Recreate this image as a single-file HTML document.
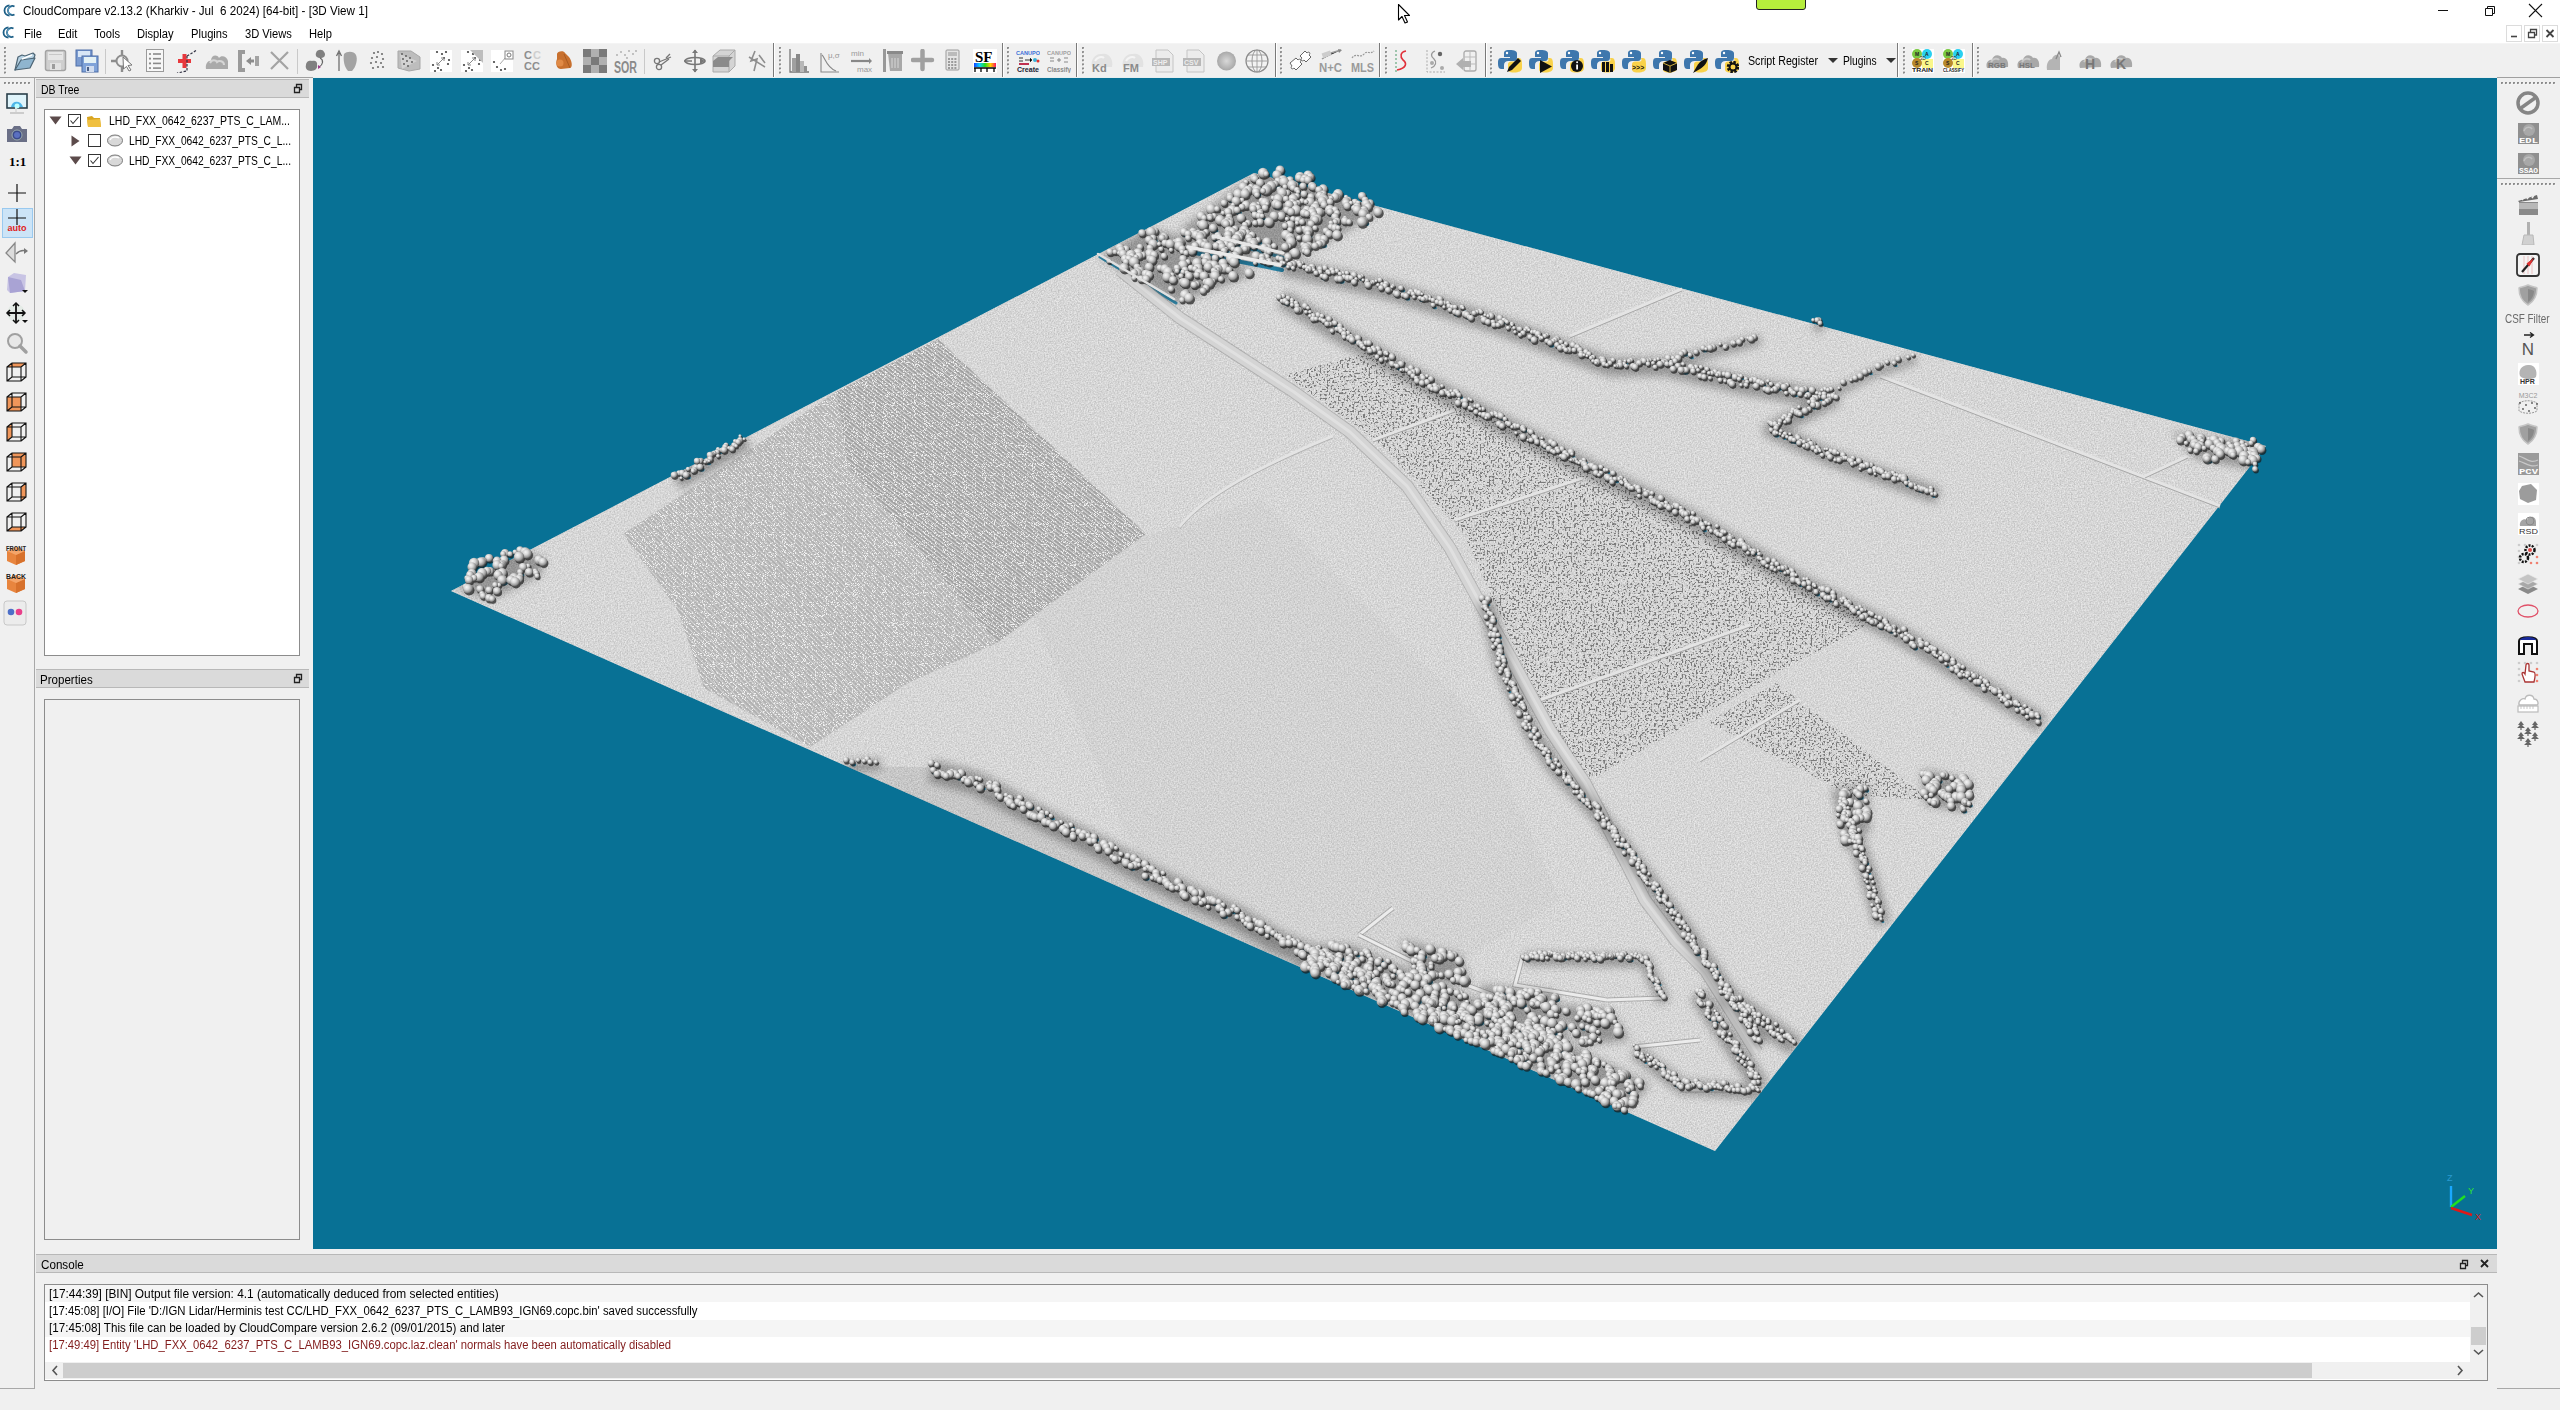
<!DOCTYPE html><html><head><meta charset="utf-8"><style>
*{box-sizing:border-box;margin:0;padding:0}
html,body{width:2560px;height:1410px;overflow:hidden;background:#f0f0f0;font-family:"Liberation Sans",sans-serif;font-size:12px;color:#000}
.a{position:absolute}
.t{position:absolute;white-space:pre;font-family:"Liberation Sans",sans-serif;font-size:12px;line-height:14px;transform-origin:0 0}
#title{left:0;top:0;width:2560px;height:22px;background:#fff}
#menu{left:0;top:22px;width:2560px;height:21px;background:#fff}
#tb{left:0;top:43px;width:2560px;height:35px;background:#f0f0f0;border-top:1px solid #f4f4f4}
.hl{position:absolute;height:1px}
.vl{position:absolute;width:1px}
.dock{position:absolute;background:#dadada;border-top:1px solid #b8b8b8;border-bottom:1px solid #b8b8b8}
.sep{position:absolute;width:1px;height:26px;background:#d7d7d7;top:48px}
.hdl{position:absolute;width:2px;height:26px;top:48px;background-image:linear-gradient(#9a9a9a 50%,transparent 50%);background-size:2px 4px}
.ic{position:absolute}
</style></head><body><div id="title" class="a"></div><div class="t" style="left:23px;top:4px;font-size:12px;color:#000;transform:scaleX(0.969);">CloudCompare v2.13.2 (Kharkiv - Jul  6 2024) [64-bit] - [3D View 1]</div><div id="menu" class="a"></div><div class="t" style="left:24px;top:27px;font-size:12px;color:#000;transform:scaleX(0.93);">File</div><div class="t" style="left:58px;top:27px;font-size:12px;color:#000;transform:scaleX(0.93);">Edit</div><div class="t" style="left:94px;top:27px;font-size:12px;color:#000;transform:scaleX(0.93);">Tools</div><div class="t" style="left:137px;top:27px;font-size:12px;color:#000;transform:scaleX(0.93);">Display</div><div class="t" style="left:191px;top:27px;font-size:12px;color:#000;transform:scaleX(0.93);">Plugins</div><div class="t" style="left:245px;top:27px;font-size:12px;color:#000;transform:scaleX(0.93);">3D Views</div><div class="t" style="left:309px;top:27px;font-size:12px;color:#000;transform:scaleX(0.93);">Help</div><div id="tb" class="a"></div><div class="hl" style="left:0;top:77px;width:2560px;background:#a0a0a0"></div><div class="hl" style="left:313px;top:77px;width:2184px;background:#e6eef0"></div><svg class="ic" style="left:4px;top:47px" width="3" height="30" viewBox="0 0 3 30"><rect x="0" y="0.0" width="2" height="2" fill="#8c8c8c"/><rect x="1.5" y="1.5" width="1" height="1" fill="#fff"/><rect x="0" y="4.1" width="2" height="2" fill="#8c8c8c"/><rect x="1.5" y="5.6" width="1" height="1" fill="#fff"/><rect x="0" y="8.2" width="2" height="2" fill="#8c8c8c"/><rect x="1.5" y="9.7" width="1" height="1" fill="#fff"/><rect x="0" y="12.3" width="2" height="2" fill="#8c8c8c"/><rect x="1.5" y="13.8" width="1" height="1" fill="#fff"/><rect x="0" y="16.4" width="2" height="2" fill="#8c8c8c"/><rect x="1.5" y="17.9" width="1" height="1" fill="#fff"/><rect x="0" y="20.5" width="2" height="2" fill="#8c8c8c"/><rect x="1.5" y="22.0" width="1" height="1" fill="#fff"/><rect x="0" y="24.6" width="2" height="2" fill="#8c8c8c"/><rect x="1.5" y="26.1" width="1" height="1" fill="#fff"/></svg><svg class="ic" style="left:13px;top:49px" width="24" height="24" viewBox="0 0 24 24"><path d="M2 21 L5 8 L9 6 L12 7 L20 4 L22 6 L21 9 Z" fill="#b8d3e4" stroke="#4d6575" stroke-width="1.2" stroke-linejoin="round"/><path d="M2 21 L8 11 L22 9 L17 19 Z" fill="#8fb5cf" stroke="#4d6575" stroke-width="1.2" stroke-linejoin="round"/><path d="M9 10 L19 6" stroke="#fff" stroke-width="1.5"/></svg><svg class="ic" style="left:44px;top:49px" width="24" height="24" viewBox="0 0 24 24"><rect x="1.5" y="1.5" width="20" height="20" rx="2" fill="#cfcfcf" stroke="#a3a3a3" stroke-width="1.5"/><rect x="4" y="3" width="15" height="8" fill="#e6e6e6"/><rect x="5" y="5" width="13" height="1" fill="#c8c8c8"/><rect x="6" y="14" width="11" height="7" fill="#e2e2e2"/><rect x="8" y="15" width="3" height="5" fill="#9c9c9c"/></svg><svg class="ic" style="left:75px;top:49px" width="24" height="24" viewBox="0 0 24 24"><rect x="1" y="1" width="16" height="16" fill="#7b9bd0" stroke="#4f6fa8"/><rect x="3" y="2" width="12" height="6" fill="#d8e6f6"/><rect x="7" y="7" width="16" height="16" fill="#7fa2d8" stroke="#4c6ca6"/><rect x="9" y="8" width="12" height="6" fill="#e4f1f5"/><rect x="11" y="17" width="8" height="6" fill="#d0dcef"/><rect x="12" y="18" width="2" height="4" fill="#4b5f86"/></svg><svg class="ic" style="left:111px;top:49px" width="24" height="24" viewBox="0 0 24 24"><circle cx="11" cy="12" r="5.5" fill="none" stroke="#8d8d8d" stroke-width="2"/><path d="M11 1 V6 M11 18 V23 M0 12 H5" stroke="#8d8d8d" stroke-width="2.4"/><path d="M12 8 L21 16 L17 16.5 L20 21 L18 22 L15.5 17.5 L12.5 20 Z" fill="#fff" stroke="#777" stroke-width="1"/></svg><svg class="ic" style="left:146px;top:49px" width="24" height="24" viewBox="0 0 24 24"><rect x="0.5" y="0.5" width="17" height="22" fill="#f7f7f7" stroke="#9a9a9a"/><circle cx="4" cy="5.0" r="1.1" fill="#8a8a8a"/><rect x="7" y="4.2" width="8" height="1.6" fill="#8a8a8a"/><circle cx="4" cy="9.7" r="1.1" fill="#8a8a8a"/><rect x="7" y="8.9" width="8" height="1.6" fill="#8a8a8a"/><circle cx="4" cy="14.4" r="1.1" fill="#8a8a8a"/><rect x="7" y="13.6" width="8" height="1.6" fill="#8a8a8a"/><circle cx="4" cy="19.1" r="1.1" fill="#8a8a8a"/><rect x="7" y="18.3" width="8" height="1.6" fill="#8a8a8a"/></svg><svg class="ic" style="left:174px;top:49px" width="24" height="24" viewBox="0 0 24 24"><path d="M4 12 H17 M10.5 5 V19" stroke="#e8383d" stroke-width="4"/><path d="M13 7 L23 1 M13 7 L13 22 L3 24" stroke="#334" stroke-width="1.2" stroke-dasharray="2.5 1.5" fill="none"/></svg><svg class="ic" style="left:205px;top:49px" width="24" height="24" viewBox="0 0 24 24"><path d="M1 20 C0 14 4 11 6 12 C6 6 12 5 14 9 C16 6 22 7 23 12 L23 20 Z" fill="#aaaaaa"/><path d="M5 14 C7 10 11 11 12 13 C14 11 19 12 19 16" fill="none" stroke="#d6d6d6" stroke-width="2"/></svg><svg class="ic" style="left:237px;top:49px" width="24" height="24" viewBox="0 0 24 24"><path d="M1 1 H8 V5 H5 V19 H8 V23 H1 Z" fill="#9a9a9a"/><path d="M9 12 L14 8 V10.5 H17 V13.5 H14 V16 Z" fill="#8c8c8c"/><rect x="18" y="7" width="4" height="10" fill="#a3a3a3"/></svg><svg class="ic" style="left:268px;top:49px" width="24" height="24" viewBox="0 0 24 24"><path d="M3 3 L20 20 M20 3 L3 20" stroke="#a3a3a3" stroke-width="2.2"/></svg><svg class="ic" style="left:305px;top:49px" width="24" height="24" viewBox="0 0 24 24"><path d="M11 4 C12 0 18 0 19 3 C21 5 20 9 16 9 C12 9 10 7 11 4 Z" fill="#808080"/><path d="M1 16 C1 12 5 11 7 12 C9 11 13 12 12 16 C13 19 10 22 6 22 C2 22 0 19 1 16 Z" fill="#808080"/><path d="M15 9 C19 11 18 16 14 18" fill="none" stroke="#666" stroke-width="1.2"/><path d="M13 16 L16 18 L13 20 Z" fill="#9b3b8a"/></svg><svg class="ic" style="left:335px;top:49px" width="24" height="24" viewBox="0 0 24 24"><path d="M4 22 V4 M1.5 7 L4 2 L6.5 7" stroke="#707070" stroke-width="1.3" fill="none"/><path d="M9 5 C12 2 19 2 21 6 C23 10 21 18 17 22 L13 22 C9 18 8 10 9 5 Z" fill="#a3a3a3"/></svg><svg class="ic" style="left:368px;top:50px" width="24" height="24" viewBox="0 0 24 24"><circle cx="6" cy="3" r="1.1" fill="#707070"/><circle cx="10" cy="2" r="1.1" fill="#707070"/><circle cx="14" cy="4" r="1.1" fill="#707070"/><circle cx="4" cy="8" r="1.1" fill="#707070"/><circle cx="9" cy="7" r="1.1" fill="#707070"/><circle cx="15" cy="9" r="1.1" fill="#707070"/><circle cx="3" cy="13" r="1.1" fill="#707070"/><circle cx="8" cy="12" r="1.1" fill="#707070"/><circle cx="13" cy="13" r="1.1" fill="#707070"/><circle cx="5" cy="18" r="1.1" fill="#707070"/><circle cx="10" cy="17" r="1.1" fill="#707070"/><circle cx="15" cy="17" r="1.1" fill="#707070"/></svg><svg class="ic" style="left:397px;top:49px" width="24" height="24" viewBox="0 0 24 24"><path d="M1 2 L14 2 L23 8 L23 20 L12 22 L1 19 Z" fill="#bdbdbd" stroke="#a7a7a7"/><path d="M3 5 L20 12 L5 20 Z" fill="#e0e0e0" opacity="0.6"/><circle cx="5" cy="5" r="0.9" fill="#555"/><circle cx="9" cy="7" r="0.9" fill="#555"/><circle cx="13" cy="9" r="0.9" fill="#555"/><circle cx="6" cy="10" r="0.9" fill="#555"/><circle cx="10" cy="12" r="0.9" fill="#555"/><circle cx="15" cy="13" r="0.9" fill="#555"/><circle cx="7" cy="15" r="0.9" fill="#555"/><circle cx="11" cy="17" r="0.9" fill="#555"/></svg><svg class="ic" style="left:430px;top:50px" width="24" height="24" viewBox="0 0 24 24"><rect x="0" y="0" width="22" height="22" fill="#fff"/><circle cx="7" cy="2" r="1.1" fill="#444"/><circle cx="12" cy="4" r="1.1" fill="#444"/><circle cx="16" cy="2" r="1.1" fill="#444"/><circle cx="14" cy="8" r="1.1" fill="#444"/><circle cx="19" cy="10" r="1.1" fill="#444"/><circle cx="3" cy="15" r="1.1" fill="#444"/><circle cx="8" cy="18" r="1.1" fill="#444"/><circle cx="11" cy="20" r="1.1" fill="#444"/><circle cx="5" cy="21" r="1.1" fill="#444"/><circle cx="18" cy="14" r="1.1" fill="#444"/><path d="M7 15 L14 8 M7 15 L7 12 M7 15 L10 15 M14 8 L11 8 M14 8 L14 11" stroke="#888" stroke-width="1"/></svg><svg class="ic" style="left:461px;top:50px" width="24" height="24" viewBox="0 0 24 24"><rect x="0" y="0" width="22" height="22" fill="#fff"/><circle cx="7" cy="2" r="1.1" fill="#444"/><circle cx="12" cy="4" r="1.1" fill="#444"/><circle cx="16" cy="2" r="1.1" fill="#444"/><circle cx="14" cy="8" r="1.1" fill="#444"/><circle cx="19" cy="10" r="1.1" fill="#444"/><circle cx="3" cy="15" r="1.1" fill="#444"/><circle cx="8" cy="18" r="1.1" fill="#444"/><circle cx="11" cy="20" r="1.1" fill="#444"/><circle cx="5" cy="21" r="1.1" fill="#444"/><circle cx="18" cy="14" r="1.1" fill="#444"/><path d="M7 15 L14 8 M7 15 L7 12 M7 15 L10 15 M14 8 L11 8 M14 8 L14 11" stroke="#888" stroke-width="1"/><path d="M9 0 L22 0 L22 13 Z" fill="#bdbdbd"/></svg><svg class="ic" style="left:491px;top:50px" width="24" height="24" viewBox="0 0 24 24"><rect x="0" y="0" width="22" height="22" fill="#fff"/><circle cx="3" cy="12" r="1.1" fill="#444"/><circle cx="6" cy="17" r="1.1" fill="#444"/><circle cx="10" cy="20" r="1.1" fill="#444"/><circle cx="14" cy="19" r="1.1" fill="#444"/><path d="M9 14 L15 7" stroke="#aaa" stroke-width="1"/><rect x="14" y="1" width="8" height="8" fill="#fff" stroke="#888"/><circle cx="18" cy="5" r="2" fill="none" stroke="#777"/></svg><svg class="ic" style="left:524px;top:49px" width="24" height="24" viewBox="0 0 24 24"><text x="0" y="10" font-family="Liberation Sans" font-weight="bold" font-size="11" fill="#8e8e8e">C</text><text x="9" y="10" font-family="Liberation Sans" font-weight="bold" font-size="11" fill="#cfcfcf">C</text><text x="0" y="21" font-family="Liberation Sans" font-weight="bold" font-size="11" fill="#8e8e8e">CC</text></svg><svg class="ic" style="left:553px;top:49px" width="24" height="24" viewBox="0 0 24 24"><path d="M4 5 C4 2 11 1 12 4 L16 8 C19 12 20 18 17 19 L8 20 C4 20 2 15 4 10 Z" fill="#c8702e"/><circle cx="7" cy="14" r="3.5" fill="#e08a46"/><path d="M11 5 L17 19" stroke="#a85a20" stroke-width="1"/></svg><svg class="ic" style="left:583px;top:49px" width="24" height="24" viewBox="0 0 24 24"><rect x="0" y="0" width="8" height="8" fill="#7a7a7a"/><rect x="0" y="8" width="8" height="8" fill="#b0b0b0"/><rect x="0" y="16" width="8" height="8" fill="#7a7a7a"/><rect x="8" y="0" width="8" height="8" fill="#b0b0b0"/><rect x="8" y="8" width="8" height="8" fill="#7a7a7a"/><rect x="8" y="16" width="8" height="8" fill="#b0b0b0"/><rect x="16" y="0" width="8" height="8" fill="#7a7a7a"/><rect x="16" y="8" width="8" height="8" fill="#b0b0b0"/><rect x="16" y="16" width="8" height="8" fill="#7a7a7a"/></svg><svg class="ic" style="left:614px;top:49px" width="24" height="24" viewBox="0 0 24 24"><text x="0" y="24" font-family="Liberation Sans" font-weight="bold" font-size="16" fill="#8a8a8a" textLength="23" lengthAdjust="spacingAndGlyphs">SOR</text><circle cx="3" cy="6" r="0.9" fill="#aaa"/><circle cx="7" cy="3" r="0.9" fill="#aaa"/><circle cx="11" cy="6" r="0.9" fill="#aaa"/><circle cx="15" cy="2" r="0.9" fill="#aaa"/><circle cx="19" cy="5" r="0.9" fill="#aaa"/><circle cx="22" cy="2" r="0.9" fill="#aaa"/><circle cx="13" cy="9" r="0.9" fill="#aaa"/></svg><svg class="ic" style="left:652px;top:49px" width="24" height="24" viewBox="0 0 24 24"><circle cx="5" cy="12" r="2.6" fill="none" stroke="#777" stroke-width="1.3"/><circle cx="7" cy="18" r="2.6" fill="none" stroke="#777" stroke-width="1.3"/><path d="M7 13 L19 8 M9 16 L17 10 M14 9 L18 5" stroke="#777" stroke-width="1.3"/></svg><svg class="ic" style="left:683px;top:49px" width="24" height="24" viewBox="0 0 24 24"><path d="M12 1 V23 M1 12 H9" stroke="#777" stroke-width="1.6"/><path d="M9 4 L12 0.5 L15 4 Z M9 20 L12 23.5 L15 20 Z" fill="#777"/><ellipse cx="12" cy="12" rx="10" ry="3.5" fill="none" stroke="#777" stroke-width="1.6"/><path d="M17 9 L22 12 L17 15 Z" fill="#777"/></svg><svg class="ic" style="left:712px;top:49px" width="24" height="24" viewBox="0 0 24 24"><path d="M1 7 L8 1 L23 1 L23 17 L17 23 L1 23 Z" fill="#d4d4d4" stroke="#aaa"/><path d="M1 7 L17 7 L23 1 M17 7 V23" stroke="#aaa" fill="none"/><path d="M1 12 L6 8 L21 8 L17 12 L17 18 L1 18 Z" fill="#8b8b8b"/></svg><svg class="ic" style="left:745px;top:49px" width="24" height="24" viewBox="0 0 24 24"><path d="M10 2 L6 12 L12 10 L9 22 M4 8 L20 18 M14 6 L20 14" stroke="#8e8e8e" stroke-width="1.6" fill="none"/></svg><svg class="ic" style="left:789px;top:49px" width="24" height="24" viewBox="0 0 24 24"><path d="M1 0 V23 H20" stroke="#777" stroke-width="1.3" fill="none"/><rect x="3" y="9" width="4" height="14" fill="#a0a0a0"/><rect x="7" y="5" width="4" height="18" fill="#888"/><rect x="11" y="12" width="4" height="11" fill="#b8b8b8"/><rect x="15" y="17" width="3" height="6" fill="#909090"/></svg><svg class="ic" style="left:820px;top:49px" width="24" height="24" viewBox="0 0 24 24"><path d="M1 4 V23 H19" stroke="#888" stroke-width="1.1" fill="none"/><path d="M2 6 C5 8 6 18 16 22" stroke="#888" stroke-width="1.1" fill="none"/><text x="8" y="9" font-family="Liberation Sans" font-size="8" fill="#999">μ,σ</text></svg><svg class="ic" style="left:850px;top:49px" width="24" height="24" viewBox="0 0 24 24"><text x="1" y="7" font-family="Liberation Sans" font-size="8" fill="#999">min</text><text x="7" y="23" font-family="Liberation Sans" font-size="8" fill="#999">max</text><path d="M1 12 H19" stroke="#888" stroke-width="2.2"/><path d="M19 9 L22 12 L19 15 Z" fill="#888"/></svg><svg class="ic" style="left:883px;top:49px" width="24" height="24" viewBox="0 0 24 24"><rect x="0" y="0" width="3" height="23" fill="#999"/><path d="M5 4 H19 V22 H7 Z" fill="#a8a8a8"/><rect x="4" y="2" width="16" height="3" fill="#8a8a8a"/><path d="M9 9 V19 M12 9 V19 M15 9 V19" stroke="#d0d0d0" stroke-width="1.2"/></svg><svg class="ic" style="left:911px;top:49px" width="24" height="24" viewBox="0 0 24 24"><path d="M2 11 H21 M11.5 2 V20" stroke="#a0a0a0" stroke-width="4.5" stroke-linecap="round"/></svg><svg class="ic" style="left:942px;top:49px" width="24" height="24" viewBox="0 0 24 24"><rect x="4" y="1" width="13" height="20" rx="1" fill="#e4e4e4" stroke="#9a9a9a"/><rect x="6" y="3" width="9" height="4" fill="#bbb"/><rect x="6.0" y="9" width="2" height="2" fill="#9a9a9a"/><rect x="6.0" y="12" width="2" height="2" fill="#9a9a9a"/><rect x="6.0" y="15" width="2" height="2" fill="#9a9a9a"/><rect x="6.0" y="18" width="2" height="2" fill="#9a9a9a"/><rect x="9.2" y="9" width="2" height="2" fill="#9a9a9a"/><rect x="9.2" y="12" width="2" height="2" fill="#9a9a9a"/><rect x="9.2" y="15" width="2" height="2" fill="#9a9a9a"/><rect x="9.2" y="18" width="2" height="2" fill="#9a9a9a"/><rect x="12.4" y="9" width="2" height="2" fill="#9a9a9a"/><rect x="12.4" y="12" width="2" height="2" fill="#9a9a9a"/><rect x="12.4" y="15" width="2" height="2" fill="#9a9a9a"/><rect x="12.4" y="18" width="2" height="2" fill="#9a9a9a"/></svg><svg class="ic" style="left:973px;top:49px" width="24" height="24" viewBox="0 0 24 24"><rect x="0" y="0" width="24" height="24" fill="#fff"/><text x="2" y="13" font-family="Liberation Serif" font-weight="bold" font-size="15" fill="#000">SF</text><defs><linearGradient id="rb" x1="0" x2="1"><stop offset="0" stop-color="#1040ff"/><stop offset="0.25" stop-color="#10d0ff"/><stop offset="0.5" stop-color="#20e020"/><stop offset="0.75" stop-color="#ffd000"/><stop offset="1" stop-color="#ff1060"/></linearGradient></defs><rect x="1" y="14" width="22" height="4" fill="url(#rb)"/><path d="M1 19 H23 M2 19 V23 M8 19 V23 M14 19 V23 M21 19 V23" stroke="#000" stroke-width="1.3"/></svg><svg class="ic" style="left:1016px;top:49px" width="24" height="24" viewBox="0 0 24 24"><text x="0" y="6" font-family="Liberation Sans" font-weight="bold" font-size="6" fill="#3a6fd8" textLength="24" lengthAdjust="spacingAndGlyphs">CANUPO</text><path d="M3 9 L7 9 M3 12 L7 12 M9 11 H14 M14 9 L16 11 L14 13" stroke="#333" stroke-width="1"/><circle cx="19" cy="11" r="2" fill="#3ab0d8"/><circle cx="22" cy="12" r="1.5" fill="#e03030"/><rect x="3" y="14" width="10" height="2" fill="#c03050"/><text x="1" y="23" font-family="Liberation Sans" font-weight="bold" font-size="8" fill="#223" textLength="22" lengthAdjust="spacingAndGlyphs">Create</text></svg><svg class="ic" style="left:1047px;top:49px" width="24" height="24" viewBox="0 0 24 24"><text x="0" y="6" font-family="Liberation Sans" font-weight="bold" font-size="6" fill="#a0a0a0" textLength="24" lengthAdjust="spacingAndGlyphs">CANUPO</text><path d="M3 9 L7 9 M3 12 L7 12 M10 11 H14 M12 9 V13 M17 9 H21 M17 13 H21" stroke="#888" stroke-width="1"/><text x="0" y="23" font-family="Liberation Sans" font-weight="bold" font-size="8" fill="#888" textLength="24" lengthAdjust="spacingAndGlyphs">Classify</text></svg><svg class="ic" style="left:1090px;top:49px" width="24" height="24" viewBox="0 0 24 24"><path d="M2 18 C0 10 6 4 12 5 C18 3 24 10 22 18 Z" fill="#e2e2e2"/><path d="M5 12 C7 8 12 7 14 9" stroke="#f4f4f4" stroke-width="2" fill="none"/><text x="2" y="23" font-family="Liberation Sans" font-weight="bold" font-size="11" fill="#8a8a8a">Kd</text></svg><svg class="ic" style="left:1121px;top:49px" width="24" height="24" viewBox="0 0 24 24"><path d="M2 18 C0 10 6 4 12 5 C18 3 24 10 22 18 Z" fill="#e2e2e2"/><path d="M5 12 C7 8 12 7 14 9" stroke="#f4f4f4" stroke-width="2" fill="none"/><text x="2" y="23" font-family="Liberation Sans" font-weight="bold" font-size="11" fill="#8a8a8a">FM</text></svg><svg class="ic" style="left:1152px;top:49px" width="24" height="24" viewBox="0 0 24 24"><path d="M4 1 H16 L21 6 V23 H4 Z" fill="#ececec" stroke="#c4c4c4"/><rect x="0" y="9" width="18" height="8" fill="#b8b8b8"/><text x="1" y="16" font-family="Liberation Sans" font-weight="bold" font-size="7" fill="#eee">SHP</text></svg><svg class="ic" style="left:1183px;top:49px" width="24" height="24" viewBox="0 0 24 24"><path d="M4 1 H16 L21 6 V23 H4 Z" fill="#ececec" stroke="#c4c4c4"/><rect x="0" y="9" width="18" height="8" fill="#b8b8b8"/><text x="1" y="16" font-family="Liberation Sans" font-weight="bold" font-size="7" fill="#eee">CSV</text></svg><svg class="ic" style="left:1217px;top:49px" width="24" height="24" viewBox="0 0 24 24"><defs><radialGradient id="dg"><stop offset="0" stop-color="#d8d8d8"/><stop offset="1" stop-color="#a8a8a8"/></radialGradient></defs><circle cx="9.5" cy="12" r="9.5" fill="url(#dg)"/></svg><svg class="ic" style="left:1245px;top:49px" width="24" height="24" viewBox="0 0 24 24"><circle cx="12" cy="12" r="11" fill="#f2f2f2" stroke="#8a8a8a" stroke-width="1.2"/><ellipse cx="12" cy="12" rx="5" ry="11" fill="none" stroke="#999"/><path d="M1 12 H23 M3 6 H21 M3 18 H21 M12 1 V23" stroke="#999" stroke-width="0.9"/></svg><svg class="ic" style="left:1288px;top:49px" width="24" height="24" viewBox="0 0 24 24"><path d="M2 14 L8 9 L10 11 C12 9 14 11 12 13 L14 15 L8 21 L6 19 C4 21 2 19 4 17 Z M12 7 L17 2 L19 4 C21 2 23 4 21 6 L23 8 L18 13 L16 11 C14 13 12 11 14 9 Z" fill="#fff" stroke="#666" stroke-width="1"/></svg><svg class="ic" style="left:1319px;top:49px" width="24" height="24" viewBox="0 0 24 24"><path d="M3 10 L12 4 L22 1" stroke="#999" stroke-width="1.5"/><path d="M19 0 L23 1 L20 4 Z" fill="#888"/><rect x="3" y="3" width="9" height="5" fill="#ccc" transform="rotate(-20 7 5)"/><text x="0" y="23" font-family="Liberation Sans" font-weight="bold" font-size="12" fill="#9a9a9a" textLength="23" lengthAdjust="spacingAndGlyphs">N+C</text></svg><svg class="ic" style="left:1351px;top:49px" width="24" height="24" viewBox="0 0 24 24"><path d="M1 9 C5 3 9 10 13 5 C16 1 19 6 23 2" stroke="#999" stroke-width="1.2" fill="none" stroke-dasharray="2 1"/><text x="0" y="23" font-family="Liberation Sans" font-weight="bold" font-size="12" fill="#9a9a9a" textLength="23" lengthAdjust="spacingAndGlyphs">MLS</text></svg><svg class="ic" style="left:1394px;top:49px" width="24" height="24" viewBox="0 0 24 24"><path d="M2 1 V23" stroke="#4a9a6a" stroke-width="1" stroke-dasharray="2 2"/><path d="M12 2 C6 3 6 8 9 11 C13 14 13 19 3 21" stroke="#e0303a" stroke-width="1.6" fill="none"/></svg><svg class="ic" style="left:1425px;top:49px" width="24" height="24" viewBox="0 0 24 24"><path d="M2 1 V23 H20" stroke="#aaa" stroke-width="1" stroke-dasharray="2 1.5" fill="none"/><path d="M10 2 C5 4 6 8 9 10 C12 13 11 17 6 19" stroke="#999" stroke-width="1.3" fill="none"/><circle cx="15" cy="5" r="2.2" fill="#666"/><circle cx="7" cy="14" r="2" fill="#aaa"/><circle cx="17" cy="19" r="2" fill="#aaa"/></svg><svg class="ic" style="left:1455px;top:49px" width="24" height="24" viewBox="0 0 24 24"><rect x="9" y="2" width="12" height="20" rx="2" fill="none" stroke="#aaa" stroke-width="1.3"/><path d="M9 8 H21 M9 15 H21 M15 2 V22" stroke="#bbb" stroke-width="1"/><path d="M1 15 L8 9 V12 H16 V18 H8 V21 Z" fill="#b0b0b0"/></svg><svg class="ic" style="left:1498px;top:49px" width="24" height="24" viewBox="0 0 24 24"><path d="M11.5 1 C6 1 6 3 6 5 V8 H12 V9 H3 C0 9 0 12 0 15 C0 18 1 20 3.5 20 H6 V16 C6 13.5 8 12 10.5 12 H16 C18 12 19 10.5 19 8.5 V4.5 C19 2.5 17 1 11.5 1 Z" fill="#3e77ad"/><circle cx="9" cy="4" r="1.2" fill="#fff"/><path d="M19 9 H21 C23.5 9 24 12 24 15 V19 C24 22 21 23.5 16 23.5 C11 23.5 10 22 10 20 V15 C10 13.5 11.5 12.5 13 12.5 H18 C19 12.5 19.5 11.5 19.5 10.5 Z" fill="#f9d24a"/><path d="M9 23 L11 18 L20 9 L23 12 L14 21 Z" fill="#111"/></svg><svg class="ic" style="left:1529px;top:49px" width="24" height="24" viewBox="0 0 24 24"><path d="M11.5 1 C6 1 6 3 6 5 V8 H12 V9 H3 C0 9 0 12 0 15 C0 18 1 20 3.5 20 H6 V16 C6 13.5 8 12 10.5 12 H16 C18 12 19 10.5 19 8.5 V4.5 C19 2.5 17 1 11.5 1 Z" fill="#3e77ad"/><circle cx="9" cy="4" r="1.2" fill="#fff"/><path d="M19 9 H21 C23.5 9 24 12 24 15 V19 C24 22 21 23.5 16 23.5 C11 23.5 10 22 10 20 V15 C10 13.5 11.5 12.5 13 12.5 H18 C19 12.5 19.5 11.5 19.5 10.5 Z" fill="#f9d24a"/><path d="M11 11 L23 17.5 L11 24 Z" fill="#111"/></svg><svg class="ic" style="left:1560px;top:49px" width="24" height="24" viewBox="0 0 24 24"><path d="M11.5 1 C6 1 6 3 6 5 V8 H12 V9 H3 C0 9 0 12 0 15 C0 18 1 20 3.5 20 H6 V16 C6 13.5 8 12 10.5 12 H16 C18 12 19 10.5 19 8.5 V4.5 C19 2.5 17 1 11.5 1 Z" fill="#3e77ad"/><circle cx="9" cy="4" r="1.2" fill="#fff"/><path d="M19 9 H21 C23.5 9 24 12 24 15 V19 C24 22 21 23.5 16 23.5 C11 23.5 10 22 10 20 V15 C10 13.5 11.5 12.5 13 12.5 H18 C19 12.5 19.5 11.5 19.5 10.5 Z" fill="#f9d24a"/><circle cx="17" cy="17" r="6" fill="#111"/><rect x="16.2" y="15.5" width="1.8" height="5" fill="#fff"/><circle cx="17.1" cy="13.3" r="1" fill="#fff"/></svg><svg class="ic" style="left:1591px;top:49px" width="24" height="24" viewBox="0 0 24 24"><path d="M11.5 1 C6 1 6 3 6 5 V8 H12 V9 H3 C0 9 0 12 0 15 C0 18 1 20 3.5 20 H6 V16 C6 13.5 8 12 10.5 12 H16 C18 12 19 10.5 19 8.5 V4.5 C19 2.5 17 1 11.5 1 Z" fill="#3e77ad"/><circle cx="9" cy="4" r="1.2" fill="#fff"/><path d="M19 9 H21 C23.5 9 24 12 24 15 V19 C24 22 21 23.5 16 23.5 C11 23.5 10 22 10 20 V15 C10 13.5 11.5 12.5 13 12.5 H18 C19 12.5 19.5 11.5 19.5 10.5 Z" fill="#f9d24a"/><path d="M11 13 H14 V23 H11 Z M15 13 H18 V23 H15 Z M19 15 H22 V23 H19 Z" fill="#111"/></svg><svg class="ic" style="left:1622px;top:49px" width="24" height="24" viewBox="0 0 24 24"><path d="M11.5 1 C6 1 6 3 6 5 V8 H12 V9 H3 C0 9 0 12 0 15 C0 18 1 20 3.5 20 H6 V16 C6 13.5 8 12 10.5 12 H16 C18 12 19 10.5 19 8.5 V4.5 C19 2.5 17 1 11.5 1 Z" fill="#3e77ad"/><circle cx="9" cy="4" r="1.2" fill="#fff"/><path d="M19 9 H21 C23.5 9 24 12 24 15 V19 C24 22 21 23.5 16 23.5 C11 23.5 10 22 10 20 V15 C10 13.5 11.5 12.5 13 12.5 H18 C19 12.5 19.5 11.5 19.5 10.5 Z" fill="#f9d24a"/><text x="10" y="21" font-family="Liberation Sans" font-weight="bold" font-size="7" fill="#111">&gt;&gt;&gt;</text></svg><svg class="ic" style="left:1653px;top:49px" width="24" height="24" viewBox="0 0 24 24"><path d="M11.5 1 C6 1 6 3 6 5 V8 H12 V9 H3 C0 9 0 12 0 15 C0 18 1 20 3.5 20 H6 V16 C6 13.5 8 12 10.5 12 H16 C18 12 19 10.5 19 8.5 V4.5 C19 2.5 17 1 11.5 1 Z" fill="#3e77ad"/><circle cx="9" cy="4" r="1.2" fill="#fff"/><path d="M19 9 H21 C23.5 9 24 12 24 15 V19 C24 22 21 23.5 16 23.5 C11 23.5 10 22 10 20 V15 C10 13.5 11.5 12.5 13 12.5 H18 C19 12.5 19.5 11.5 19.5 10.5 Z" fill="#f9d24a"/><path d="M10 14 L17 11 L24 14 V21 L17 24 L10 21 Z" fill="#111"/><path d="M10 14 L17 17 L24 14 M17 17 V24" stroke="#f9d24a" stroke-width="0.8" fill="none"/></svg><svg class="ic" style="left:1684px;top:49px" width="24" height="24" viewBox="0 0 24 24"><path d="M11.5 1 C6 1 6 3 6 5 V8 H12 V9 H3 C0 9 0 12 0 15 C0 18 1 20 3.5 20 H6 V16 C6 13.5 8 12 10.5 12 H16 C18 12 19 10.5 19 8.5 V4.5 C19 2.5 17 1 11.5 1 Z" fill="#3e77ad"/><circle cx="9" cy="4" r="1.2" fill="#fff"/><path d="M19 9 H21 C23.5 9 24 12 24 15 V19 C24 22 21 23.5 16 23.5 C11 23.5 10 22 10 20 V15 C10 13.5 11.5 12.5 13 12.5 H18 C19 12.5 19.5 11.5 19.5 10.5 Z" fill="#f9d24a"/><path d="M9 24 L13 17 C16 12 20 10 24 9 C23 13 21 17 16 20 Z" fill="#111"/></svg><svg class="ic" style="left:1715px;top:49px" width="24" height="24" viewBox="0 0 24 24"><path d="M11.5 1 C6 1 6 3 6 5 V8 H12 V9 H3 C0 9 0 12 0 15 C0 18 1 20 3.5 20 H6 V16 C6 13.5 8 12 10.5 12 H16 C18 12 19 10.5 19 8.5 V4.5 C19 2.5 17 1 11.5 1 Z" fill="#3e77ad"/><circle cx="9" cy="4" r="1.2" fill="#fff"/><path d="M19 9 H21 C23.5 9 24 12 24 15 V19 C24 22 21 23.5 16 23.5 C11 23.5 10 22 10 20 V15 C10 13.5 11.5 12.5 13 12.5 H18 C19 12.5 19.5 11.5 19.5 10.5 Z" fill="#f9d24a"/><circle cx="18" cy="18" r="4.5" fill="none" stroke="#111" stroke-width="3.5" stroke-dasharray="2.2 1.3"/><circle cx="18" cy="18" r="3.5" fill="none" stroke="#111" stroke-width="2"/></svg><svg class="ic" style="left:1912px;top:49px" width="24" height="24" viewBox="0 0 24 24"><rect x="0" y="0" width="22" height="24" fill="#fff"/><circle cx="5" cy="5" r="5" fill="#7ac943"/><circle cx="15" cy="5" r="5" fill="#29d0f0"/><rect x="10" y="10" width="11" height="9" fill="#faf78a"/><circle cx="5" cy="14" r="5" fill="#b8892a"/><text x="3" y="7" font-family="Liberation Sans" font-size="5" font-weight="bold" fill="#222">M</text><text x="13" y="7" font-family="Liberation Sans" font-size="5" font-weight="bold" fill="#222">A</text><text x="8" y="11" font-family="Liberation Sans" font-size="4.5" fill="#222">3D</text><text x="3" y="16" font-family="Liberation Sans" font-size="5" font-weight="bold" fill="#222">S</text><text x="13" y="16" font-family="Liberation Sans" font-size="5" font-weight="bold" fill="#222">C</text><text x="0" y="23" font-family="Liberation Sans" font-size="5" font-weight="bold" fill="#222" textLength="21" lengthAdjust="spacingAndGlyphs">TRAIN</text></svg><svg class="ic" style="left:1943px;top:49px" width="24" height="24" viewBox="0 0 24 24"><rect x="0" y="0" width="22" height="24" fill="#fff"/><circle cx="5" cy="5" r="5" fill="#7ac943"/><circle cx="15" cy="5" r="5" fill="#29d0f0"/><rect x="10" y="10" width="11" height="9" fill="#faf78a"/><circle cx="5" cy="14" r="5" fill="#b8892a"/><text x="3" y="7" font-family="Liberation Sans" font-size="5" font-weight="bold" fill="#222">M</text><text x="13" y="7" font-family="Liberation Sans" font-size="5" font-weight="bold" fill="#222">A</text><text x="8" y="11" font-family="Liberation Sans" font-size="4.5" fill="#222">3D</text><text x="3" y="16" font-family="Liberation Sans" font-size="5" font-weight="bold" fill="#222">S</text><text x="13" y="16" font-family="Liberation Sans" font-size="5" font-weight="bold" fill="#222">C</text><text x="0" y="23" font-family="Liberation Sans" font-size="5" font-weight="bold" fill="#222" textLength="21" lengthAdjust="spacingAndGlyphs">CLASSIFY</text></svg><svg class="ic" style="left:1985px;top:49px" width="24" height="24" viewBox="0 0 24 24"><path d="M2 19 C0 14 4 10 7 11 C8 5 15 5 17 9 C21 8 24 12 23 18 Z" fill="#a8a8a8"/><path d="M6 13 C8 9 13 9 14 11" stroke="#c8c8c8" stroke-width="2" fill="none"/><text x="3" y="19" font-family="Liberation Sans" font-weight="bold" font-size="8" fill="#777">RGB</text></svg><svg class="ic" style="left:2016px;top:49px" width="24" height="24" viewBox="0 0 24 24"><path d="M2 19 C0 14 4 10 7 11 C8 5 15 5 17 9 C21 8 24 12 23 18 Z" fill="#a8a8a8"/><path d="M6 13 C8 9 13 9 14 11" stroke="#c8c8c8" stroke-width="2" fill="none"/><text x="3" y="19" font-family="Liberation Sans" font-weight="bold" font-size="8" fill="#777">HSL</text></svg><svg class="ic" style="left:2046px;top:49px" width="24" height="24" viewBox="0 0 24 24"><path d="M1 21 C0 14 3 10 6 10 C7 6 12 4 14 8 L14 21 Z" fill="#b4b4b4"/><path d="M10 10 L13 3 L15 8" stroke="#888" stroke-width="1.3" fill="none"/></svg><svg class="ic" style="left:2078px;top:49px" width="24" height="24" viewBox="0 0 24 24"><path d="M2 19 C0 14 4 10 7 11 C8 5 15 5 17 9 C21 8 24 12 23 18 Z" fill="#a8a8a8"/><path d="M6 13 C8 9 13 9 14 11" stroke="#c8c8c8" stroke-width="2" fill="none"/><text x="7" y="20" font-family="Liberation Sans" font-weight="bold" font-size="14" fill="#777">H</text></svg><svg class="ic" style="left:2109px;top:49px" width="24" height="24" viewBox="0 0 24 24"><path d="M2 19 C0 14 4 10 7 11 C8 5 15 5 17 9 C21 8 24 12 23 18 Z" fill="#a8a8a8"/><path d="M6 13 C8 9 13 9 14 11" stroke="#c8c8c8" stroke-width="2" fill="none"/><text x="7" y="20" font-family="Liberation Sans" font-weight="bold" font-size="14" fill="#777">K</text></svg><div class="a" style="left:105px;top:49px;width:1px;height:25px;background:#c9c9c9"></div><div class="a" style="left:297px;top:49px;width:1px;height:25px;background:#c9c9c9"></div><div class="a" style="left:644px;top:49px;width:1px;height:25px;background:#c9c9c9"></div><div class="a" style="left:773px;top:43px;width:1px;height:34px;background:#7a7a7a"></div><div class="a" style="left:774px;top:43px;width:1px;height:34px;background:#fff"></div><div class="a" style="left:1002px;top:43px;width:1px;height:34px;background:#7a7a7a"></div><div class="a" style="left:1003px;top:43px;width:1px;height:34px;background:#fff"></div><div class="a" style="left:1076px;top:43px;width:1px;height:34px;background:#7a7a7a"></div><div class="a" style="left:1077px;top:43px;width:1px;height:34px;background:#fff"></div><div class="a" style="left:1275px;top:43px;width:1px;height:34px;background:#7a7a7a"></div><div class="a" style="left:1276px;top:43px;width:1px;height:34px;background:#fff"></div><div class="a" style="left:1379px;top:43px;width:1px;height:34px;background:#7a7a7a"></div><div class="a" style="left:1380px;top:43px;width:1px;height:34px;background:#fff"></div><div class="a" style="left:1485px;top:43px;width:1px;height:34px;background:#7a7a7a"></div><div class="a" style="left:1486px;top:43px;width:1px;height:34px;background:#fff"></div><div class="a" style="left:1897px;top:43px;width:1px;height:34px;background:#7a7a7a"></div><div class="a" style="left:1898px;top:43px;width:1px;height:34px;background:#fff"></div><div class="a" style="left:1972px;top:43px;width:1px;height:34px;background:#7a7a7a"></div><div class="a" style="left:1973px;top:43px;width:1px;height:34px;background:#fff"></div><svg class="ic" style="left:779px;top:47px" width="3" height="30" viewBox="0 0 3 30"><rect x="0" y="0.0" width="2" height="2" fill="#8c8c8c"/><rect x="1.5" y="1.5" width="1" height="1" fill="#fff"/><rect x="0" y="4.1" width="2" height="2" fill="#8c8c8c"/><rect x="1.5" y="5.6" width="1" height="1" fill="#fff"/><rect x="0" y="8.2" width="2" height="2" fill="#8c8c8c"/><rect x="1.5" y="9.7" width="1" height="1" fill="#fff"/><rect x="0" y="12.3" width="2" height="2" fill="#8c8c8c"/><rect x="1.5" y="13.8" width="1" height="1" fill="#fff"/><rect x="0" y="16.4" width="2" height="2" fill="#8c8c8c"/><rect x="1.5" y="17.9" width="1" height="1" fill="#fff"/><rect x="0" y="20.5" width="2" height="2" fill="#8c8c8c"/><rect x="1.5" y="22.0" width="1" height="1" fill="#fff"/><rect x="0" y="24.6" width="2" height="2" fill="#8c8c8c"/><rect x="1.5" y="26.1" width="1" height="1" fill="#fff"/></svg><svg class="ic" style="left:1007px;top:47px" width="3" height="30" viewBox="0 0 3 30"><rect x="0" y="0.0" width="2" height="2" fill="#8c8c8c"/><rect x="1.5" y="1.5" width="1" height="1" fill="#fff"/><rect x="0" y="4.1" width="2" height="2" fill="#8c8c8c"/><rect x="1.5" y="5.6" width="1" height="1" fill="#fff"/><rect x="0" y="8.2" width="2" height="2" fill="#8c8c8c"/><rect x="1.5" y="9.7" width="1" height="1" fill="#fff"/><rect x="0" y="12.3" width="2" height="2" fill="#8c8c8c"/><rect x="1.5" y="13.8" width="1" height="1" fill="#fff"/><rect x="0" y="16.4" width="2" height="2" fill="#8c8c8c"/><rect x="1.5" y="17.9" width="1" height="1" fill="#fff"/><rect x="0" y="20.5" width="2" height="2" fill="#8c8c8c"/><rect x="1.5" y="22.0" width="1" height="1" fill="#fff"/><rect x="0" y="24.6" width="2" height="2" fill="#8c8c8c"/><rect x="1.5" y="26.1" width="1" height="1" fill="#fff"/></svg><svg class="ic" style="left:1082px;top:47px" width="3" height="30" viewBox="0 0 3 30"><rect x="0" y="0.0" width="2" height="2" fill="#8c8c8c"/><rect x="1.5" y="1.5" width="1" height="1" fill="#fff"/><rect x="0" y="4.1" width="2" height="2" fill="#8c8c8c"/><rect x="1.5" y="5.6" width="1" height="1" fill="#fff"/><rect x="0" y="8.2" width="2" height="2" fill="#8c8c8c"/><rect x="1.5" y="9.7" width="1" height="1" fill="#fff"/><rect x="0" y="12.3" width="2" height="2" fill="#8c8c8c"/><rect x="1.5" y="13.8" width="1" height="1" fill="#fff"/><rect x="0" y="16.4" width="2" height="2" fill="#8c8c8c"/><rect x="1.5" y="17.9" width="1" height="1" fill="#fff"/><rect x="0" y="20.5" width="2" height="2" fill="#8c8c8c"/><rect x="1.5" y="22.0" width="1" height="1" fill="#fff"/><rect x="0" y="24.6" width="2" height="2" fill="#8c8c8c"/><rect x="1.5" y="26.1" width="1" height="1" fill="#fff"/></svg><svg class="ic" style="left:1280px;top:47px" width="3" height="30" viewBox="0 0 3 30"><rect x="0" y="0.0" width="2" height="2" fill="#8c8c8c"/><rect x="1.5" y="1.5" width="1" height="1" fill="#fff"/><rect x="0" y="4.1" width="2" height="2" fill="#8c8c8c"/><rect x="1.5" y="5.6" width="1" height="1" fill="#fff"/><rect x="0" y="8.2" width="2" height="2" fill="#8c8c8c"/><rect x="1.5" y="9.7" width="1" height="1" fill="#fff"/><rect x="0" y="12.3" width="2" height="2" fill="#8c8c8c"/><rect x="1.5" y="13.8" width="1" height="1" fill="#fff"/><rect x="0" y="16.4" width="2" height="2" fill="#8c8c8c"/><rect x="1.5" y="17.9" width="1" height="1" fill="#fff"/><rect x="0" y="20.5" width="2" height="2" fill="#8c8c8c"/><rect x="1.5" y="22.0" width="1" height="1" fill="#fff"/><rect x="0" y="24.6" width="2" height="2" fill="#8c8c8c"/><rect x="1.5" y="26.1" width="1" height="1" fill="#fff"/></svg><svg class="ic" style="left:1385px;top:47px" width="3" height="30" viewBox="0 0 3 30"><rect x="0" y="0.0" width="2" height="2" fill="#8c8c8c"/><rect x="1.5" y="1.5" width="1" height="1" fill="#fff"/><rect x="0" y="4.1" width="2" height="2" fill="#8c8c8c"/><rect x="1.5" y="5.6" width="1" height="1" fill="#fff"/><rect x="0" y="8.2" width="2" height="2" fill="#8c8c8c"/><rect x="1.5" y="9.7" width="1" height="1" fill="#fff"/><rect x="0" y="12.3" width="2" height="2" fill="#8c8c8c"/><rect x="1.5" y="13.8" width="1" height="1" fill="#fff"/><rect x="0" y="16.4" width="2" height="2" fill="#8c8c8c"/><rect x="1.5" y="17.9" width="1" height="1" fill="#fff"/><rect x="0" y="20.5" width="2" height="2" fill="#8c8c8c"/><rect x="1.5" y="22.0" width="1" height="1" fill="#fff"/><rect x="0" y="24.6" width="2" height="2" fill="#8c8c8c"/><rect x="1.5" y="26.1" width="1" height="1" fill="#fff"/></svg><svg class="ic" style="left:1490px;top:47px" width="3" height="30" viewBox="0 0 3 30"><rect x="0" y="0.0" width="2" height="2" fill="#8c8c8c"/><rect x="1.5" y="1.5" width="1" height="1" fill="#fff"/><rect x="0" y="4.1" width="2" height="2" fill="#8c8c8c"/><rect x="1.5" y="5.6" width="1" height="1" fill="#fff"/><rect x="0" y="8.2" width="2" height="2" fill="#8c8c8c"/><rect x="1.5" y="9.7" width="1" height="1" fill="#fff"/><rect x="0" y="12.3" width="2" height="2" fill="#8c8c8c"/><rect x="1.5" y="13.8" width="1" height="1" fill="#fff"/><rect x="0" y="16.4" width="2" height="2" fill="#8c8c8c"/><rect x="1.5" y="17.9" width="1" height="1" fill="#fff"/><rect x="0" y="20.5" width="2" height="2" fill="#8c8c8c"/><rect x="1.5" y="22.0" width="1" height="1" fill="#fff"/><rect x="0" y="24.6" width="2" height="2" fill="#8c8c8c"/><rect x="1.5" y="26.1" width="1" height="1" fill="#fff"/></svg><svg class="ic" style="left:1903px;top:47px" width="3" height="30" viewBox="0 0 3 30"><rect x="0" y="0.0" width="2" height="2" fill="#8c8c8c"/><rect x="1.5" y="1.5" width="1" height="1" fill="#fff"/><rect x="0" y="4.1" width="2" height="2" fill="#8c8c8c"/><rect x="1.5" y="5.6" width="1" height="1" fill="#fff"/><rect x="0" y="8.2" width="2" height="2" fill="#8c8c8c"/><rect x="1.5" y="9.7" width="1" height="1" fill="#fff"/><rect x="0" y="12.3" width="2" height="2" fill="#8c8c8c"/><rect x="1.5" y="13.8" width="1" height="1" fill="#fff"/><rect x="0" y="16.4" width="2" height="2" fill="#8c8c8c"/><rect x="1.5" y="17.9" width="1" height="1" fill="#fff"/><rect x="0" y="20.5" width="2" height="2" fill="#8c8c8c"/><rect x="1.5" y="22.0" width="1" height="1" fill="#fff"/><rect x="0" y="24.6" width="2" height="2" fill="#8c8c8c"/><rect x="1.5" y="26.1" width="1" height="1" fill="#fff"/></svg><svg class="ic" style="left:1977px;top:47px" width="3" height="30" viewBox="0 0 3 30"><rect x="0" y="0.0" width="2" height="2" fill="#8c8c8c"/><rect x="1.5" y="1.5" width="1" height="1" fill="#fff"/><rect x="0" y="4.1" width="2" height="2" fill="#8c8c8c"/><rect x="1.5" y="5.6" width="1" height="1" fill="#fff"/><rect x="0" y="8.2" width="2" height="2" fill="#8c8c8c"/><rect x="1.5" y="9.7" width="1" height="1" fill="#fff"/><rect x="0" y="12.3" width="2" height="2" fill="#8c8c8c"/><rect x="1.5" y="13.8" width="1" height="1" fill="#fff"/><rect x="0" y="16.4" width="2" height="2" fill="#8c8c8c"/><rect x="1.5" y="17.9" width="1" height="1" fill="#fff"/><rect x="0" y="20.5" width="2" height="2" fill="#8c8c8c"/><rect x="1.5" y="22.0" width="1" height="1" fill="#fff"/><rect x="0" y="24.6" width="2" height="2" fill="#8c8c8c"/><rect x="1.5" y="26.1" width="1" height="1" fill="#fff"/></svg><div class="t" style="left:1748px;top:54px;font-size:12px;color:#000;transform:scaleX(0.889);">Script Register</div><svg class="ic" style="left:1828px;top:58px" width="10" height="6" viewBox="0 0 10 6"><path d="M0 0 H10 L5 5 Z" fill="#333"/></svg><div class="t" style="left:1843px;top:54px;font-size:12px;color:#000;transform:scaleX(0.855);">Plugins</div><svg class="ic" style="left:1886px;top:58px" width="10" height="6" viewBox="0 0 10 6"><path d="M0 0 H10 L5 5 Z" fill="#333"/></svg><svg class="ic" style="left:4px;top:82px" width="31" height="3" viewBox="0 0 31 3"><rect x="0.0" y="0" width="2" height="2" fill="#8c8c8c"/><rect x="1.5" y="1.5" width="1" height="1" fill="#fff"/><rect x="4.0" y="0" width="2" height="2" fill="#8c8c8c"/><rect x="5.5" y="1.5" width="1" height="1" fill="#fff"/><rect x="8.0" y="0" width="2" height="2" fill="#8c8c8c"/><rect x="9.5" y="1.5" width="1" height="1" fill="#fff"/><rect x="12.0" y="0" width="2" height="2" fill="#8c8c8c"/><rect x="13.5" y="1.5" width="1" height="1" fill="#fff"/><rect x="16.0" y="0" width="2" height="2" fill="#8c8c8c"/><rect x="17.5" y="1.5" width="1" height="1" fill="#fff"/><rect x="20.0" y="0" width="2" height="2" fill="#8c8c8c"/><rect x="21.5" y="1.5" width="1" height="1" fill="#fff"/><rect x="24.0" y="0" width="2" height="2" fill="#8c8c8c"/><rect x="25.5" y="1.5" width="1" height="1" fill="#fff"/></svg><div class="a" style="left:2px;top:208px;width:31px;height:30px;background:#cce4f7;border:1px solid #99c9ef"></div><svg class="ic" style="left:5px;top:92px" width="24" height="24" viewBox="0 0 24 24"><rect x="2" y="2" width="20" height="14" fill="#dff4fb" stroke="#2a3f4a" stroke-width="1.6"/><path d="M6 15 C7 8 16 8 18 15" fill="#4fb6e8"/><circle cx="12" cy="14" r="2.5" fill="#bff"/><path d="M5 21 H19" stroke="#ccc" stroke-width="2"/><path d="M11 16 V20" stroke="#ddd" stroke-width="2"/></svg><svg class="ic" style="left:5px;top:121px" width="24" height="24" viewBox="0 0 24 24"><path d="M2 8 H7 L9 5 H15 L17 8 H22 V21 H2 Z" fill="#6a6f86"/><circle cx="12" cy="14" r="5" fill="#3a4a8a" stroke="#9aa" stroke-width="1"/><circle cx="12" cy="14" r="3" fill="#5a70c0"/></svg><div class="t" style="left:9px;top:155px;font-size:12px;color:#000;"><b style="font-family:Liberation Serif;font-size:13px">1:1</b></div><svg class="ic" style="left:5px;top:181px" width="24" height="24" viewBox="0 0 24 24"><path d="M12 3 V21 M3 12 H21" stroke="#111" stroke-width="1.2"/></svg><svg class="ic" style="left:5px;top:208px" width="24" height="24" viewBox="0 0 24 24"><path d="M12 1 V17 M3 10 H21" stroke="#111" stroke-width="1.2"/><text x="12" y="23" text-anchor="middle" font-family="Liberation Sans" font-weight="bold" font-size="9" fill="#e02020">auto</text></svg><svg class="ic" style="left:5px;top:241px" width="24" height="24" viewBox="0 0 24 24"><path d="M10 2 L1 12 L10 21 Z" fill="#dcdcdc" stroke="#888" stroke-width="1.3"/><path d="M11 13 C14 10 18 9 21 10" stroke="#777" stroke-width="1.3" fill="none"/><path d="M19 7 L23 10 L19 13 Z" fill="#777"/></svg><svg class="ic" style="left:5px;top:271px" width="24" height="24" viewBox="0 0 24 24"><path d="M3 6 L9 2 L21 4 L20 20 L5 22 L2 19 Z" fill="#c8c4e4"/><path d="M3 6 L16 9 L20 20 L5 22 Z" fill="#a9a3d4"/><path d="M17 19 H23 L20 22 Z" fill="#111"/></svg><svg class="ic" style="left:5px;top:301px" width="24" height="24" viewBox="0 0 24 24"><circle cx="11" cy="12" r="9" fill="#e4ebe6"/><path d="M11 3 V21 M2 12 H20" stroke="#111" stroke-width="1.8"/><path d="M8 5 L11 2 L14 5 M8 19 L11 22 L14 19 M5 9 L2 12 L5 15 M17 9 L20 12 L17 15" stroke="#111" stroke-width="1.5" fill="none"/><path d="M17 19 H23 L20 22 Z" fill="#111"/></svg><svg class="ic" style="left:5px;top:331px" width="24" height="24" viewBox="0 0 24 24"><circle cx="10" cy="10" r="7" fill="#e8e8e8" stroke="#a0a0a0" stroke-width="2"/><path d="M15 15 L21 21" stroke="#a0a0a0" stroke-width="3.5" stroke-linecap="round"/></svg><svg class="ic" style="left:6px;top:362px" width="22" height="22" viewBox="0 0 22 22"><path d="M1 5 L6 1 L20 1 L15 5 Z" fill="#f0965a"/><path d="M1 5 H15 V19 H1 Z M6 1 H20 V15 H6 Z M1 5 L6 1 M15 5 L20 1 M15 19 L20 15 M1 19 L6 15" fill="none" stroke="#111" stroke-width="1.1"/></svg><svg class="ic" style="left:6px;top:392px" width="22" height="22" viewBox="0 0 22 22"><rect x="1" y="5" width="14" height="14" fill="#f0965a"/><path d="M1 5 H15 V19 H1 Z M6 1 H20 V15 H6 Z M1 5 L6 1 M15 5 L20 1 M15 19 L20 15 M1 19 L6 15" fill="none" stroke="#111" stroke-width="1.1"/></svg><svg class="ic" style="left:6px;top:422px" width="22" height="22" viewBox="0 0 22 22"><path d="M1 5 L6 1 L6 15 L1 19 Z" fill="#f0965a"/><path d="M1 5 H15 V19 H1 Z M6 1 H20 V15 H6 Z M1 5 L6 1 M15 5 L20 1 M15 19 L20 15 M1 19 L6 15" fill="none" stroke="#111" stroke-width="1.1"/></svg><svg class="ic" style="left:6px;top:452px" width="22" height="22" viewBox="0 0 22 22"><rect x="6" y="1" width="14" height="14" fill="#f0965a"/><path d="M1 5 H15 V19 H1 Z M6 1 H20 V15 H6 Z M1 5 L6 1 M15 5 L20 1 M15 19 L20 15 M1 19 L6 15" fill="none" stroke="#111" stroke-width="1.1"/></svg><svg class="ic" style="left:6px;top:482px" width="22" height="22" viewBox="0 0 22 22"><path d="M15 5 L20 1 L20 15 L15 19 Z" fill="#f0965a"/><path d="M1 5 H15 V19 H1 Z M6 1 H20 V15 H6 Z M1 5 L6 1 M15 5 L20 1 M15 19 L20 15 M1 19 L6 15" fill="none" stroke="#111" stroke-width="1.1"/></svg><svg class="ic" style="left:6px;top:512px" width="22" height="22" viewBox="0 0 22 22"><path d="M1 19 L6 15 L20 15 L15 19 Z" fill="#f0965a"/><path d="M1 5 H15 V19 H1 Z M6 1 H20 V15 H6 Z M1 5 L6 1 M15 5 L20 1 M15 19 L20 15 M1 19 L6 15" fill="none" stroke="#111" stroke-width="1.1"/></svg><svg class="ic" style="left:5px;top:542px" width="24" height="24" viewBox="0 0 24 24"><path d="M2 9 L11 5 L20 9 L20 19 L11 23 L2 19 Z" fill="#e8853e"/><path d="M11 13 L11 23 L20 19 L20 9 Z" fill="#d7712c"/><path d="M2 9 L11 5 L20 9 L11 13 Z" fill="#f4a56a"/><text x="11" y="9" text-anchor="middle" font-family="Liberation Sans" font-weight="bold" font-size="7" fill="#222" textLength="20" lengthAdjust="spacingAndGlyphs">FRONT</text></svg><svg class="ic" style="left:5px;top:570px" width="24" height="24" viewBox="0 0 24 24"><path d="M2 9 L11 5 L20 9 L20 19 L11 23 L2 19 Z" fill="#e8853e"/><path d="M11 13 L11 23 L20 19 L20 9 Z" fill="#d7712c"/><path d="M2 9 L11 5 L20 9 L11 13 Z" fill="#f4a56a"/><text x="11" y="9" text-anchor="middle" font-family="Liberation Sans" font-weight="bold" font-size="7" fill="#222" textLength="20" lengthAdjust="spacingAndGlyphs">BACK</text></svg><svg class="ic" style="left:3px;top:600px" width="24" height="26" viewBox="0 0 24 26"><rect x="1" y="1" width="22" height="24" rx="3" fill="#ececec" stroke="#c8c8c8"/><circle cx="8" cy="12" r="3.3" fill="#4d6fc8"/><circle cx="16" cy="12" r="3.3" fill="#e8408a"/></svg><svg class="ic" style="left:2501px;top:82px" width="59" height="3" viewBox="0 0 59 3"><rect x="0.0" y="0" width="2" height="2" fill="#8c8c8c"/><rect x="1.5" y="1.5" width="1" height="1" fill="#fff"/><rect x="4.0" y="0" width="2" height="2" fill="#8c8c8c"/><rect x="5.5" y="1.5" width="1" height="1" fill="#fff"/><rect x="8.0" y="0" width="2" height="2" fill="#8c8c8c"/><rect x="9.5" y="1.5" width="1" height="1" fill="#fff"/><rect x="12.0" y="0" width="2" height="2" fill="#8c8c8c"/><rect x="13.5" y="1.5" width="1" height="1" fill="#fff"/><rect x="16.0" y="0" width="2" height="2" fill="#8c8c8c"/><rect x="17.5" y="1.5" width="1" height="1" fill="#fff"/><rect x="20.0" y="0" width="2" height="2" fill="#8c8c8c"/><rect x="21.5" y="1.5" width="1" height="1" fill="#fff"/><rect x="24.0" y="0" width="2" height="2" fill="#8c8c8c"/><rect x="25.5" y="1.5" width="1" height="1" fill="#fff"/><rect x="28.0" y="0" width="2" height="2" fill="#8c8c8c"/><rect x="29.5" y="1.5" width="1" height="1" fill="#fff"/><rect x="32.0" y="0" width="2" height="2" fill="#8c8c8c"/><rect x="33.5" y="1.5" width="1" height="1" fill="#fff"/><rect x="36.0" y="0" width="2" height="2" fill="#8c8c8c"/><rect x="37.5" y="1.5" width="1" height="1" fill="#fff"/><rect x="40.0" y="0" width="2" height="2" fill="#8c8c8c"/><rect x="41.5" y="1.5" width="1" height="1" fill="#fff"/><rect x="44.0" y="0" width="2" height="2" fill="#8c8c8c"/><rect x="45.5" y="1.5" width="1" height="1" fill="#fff"/><rect x="48.0" y="0" width="2" height="2" fill="#8c8c8c"/><rect x="49.5" y="1.5" width="1" height="1" fill="#fff"/><rect x="52.0" y="0" width="2" height="2" fill="#8c8c8c"/><rect x="53.5" y="1.5" width="1" height="1" fill="#fff"/></svg><div class="a" style="left:2497px;top:178px;width:63px;height:1px;background:#a8a8a8"></div><svg class="ic" style="left:2501px;top:183px" width="59" height="3" viewBox="0 0 59 3"><rect x="0.0" y="0" width="2" height="2" fill="#8c8c8c"/><rect x="1.5" y="1.5" width="1" height="1" fill="#fff"/><rect x="4.0" y="0" width="2" height="2" fill="#8c8c8c"/><rect x="5.5" y="1.5" width="1" height="1" fill="#fff"/><rect x="8.0" y="0" width="2" height="2" fill="#8c8c8c"/><rect x="9.5" y="1.5" width="1" height="1" fill="#fff"/><rect x="12.0" y="0" width="2" height="2" fill="#8c8c8c"/><rect x="13.5" y="1.5" width="1" height="1" fill="#fff"/><rect x="16.0" y="0" width="2" height="2" fill="#8c8c8c"/><rect x="17.5" y="1.5" width="1" height="1" fill="#fff"/><rect x="20.0" y="0" width="2" height="2" fill="#8c8c8c"/><rect x="21.5" y="1.5" width="1" height="1" fill="#fff"/><rect x="24.0" y="0" width="2" height="2" fill="#8c8c8c"/><rect x="25.5" y="1.5" width="1" height="1" fill="#fff"/><rect x="28.0" y="0" width="2" height="2" fill="#8c8c8c"/><rect x="29.5" y="1.5" width="1" height="1" fill="#fff"/><rect x="32.0" y="0" width="2" height="2" fill="#8c8c8c"/><rect x="33.5" y="1.5" width="1" height="1" fill="#fff"/><rect x="36.0" y="0" width="2" height="2" fill="#8c8c8c"/><rect x="37.5" y="1.5" width="1" height="1" fill="#fff"/><rect x="40.0" y="0" width="2" height="2" fill="#8c8c8c"/><rect x="41.5" y="1.5" width="1" height="1" fill="#fff"/><rect x="44.0" y="0" width="2" height="2" fill="#8c8c8c"/><rect x="45.5" y="1.5" width="1" height="1" fill="#fff"/><rect x="48.0" y="0" width="2" height="2" fill="#8c8c8c"/><rect x="49.5" y="1.5" width="1" height="1" fill="#fff"/><rect x="52.0" y="0" width="2" height="2" fill="#8c8c8c"/><rect x="53.5" y="1.5" width="1" height="1" fill="#fff"/></svg><svg class="ic" style="left:2516px;top:91px" width="24" height="24" viewBox="0 0 24 24"><circle cx="12" cy="12" r="10" fill="none" stroke="#858585" stroke-width="3.5"/><path d="M5 17 L19 7" stroke="#858585" stroke-width="3.5"/></svg><svg class="ic" style="left:2516px;top:122px" width="24" height="24" viewBox="0 0 24 24"><rect x="2" y="1" width="21" height="21" fill="#8f8f8f"/><circle cx="13" cy="8" r="6" fill="#a8a8a8"/><path d="M8 9 C9 5 14 4 16 7" stroke="#c0c0c0" stroke-width="1.5" fill="none"/><text x="3" y="21" font-family="Liberation Mono" font-weight="bold" font-size="7" fill="#fff" textLength="19" lengthAdjust="spacingAndGlyphs">EDL</text></svg><svg class="ic" style="left:2516px;top:152px" width="24" height="24" viewBox="0 0 24 24"><rect x="2" y="1" width="21" height="21" fill="#8f8f8f"/><circle cx="13" cy="8" r="6" fill="#a8a8a8"/><path d="M8 9 C9 5 14 4 16 7" stroke="#c0c0c0" stroke-width="1.5" fill="none"/><text x="3" y="21" font-family="Liberation Mono" font-weight="bold" font-size="7" fill="#fff" textLength="19" lengthAdjust="spacingAndGlyphs">SSAO</text></svg><svg class="ic" style="left:2516px;top:193px" width="24" height="24" viewBox="0 0 24 24"><path d="M3 9 H22 V22 H3 Z" fill="#8a8a8a"/><path d="M3 10 H22 V16 H3 Z" fill="#b8b8b8"/><path d="M2 8 L21 2 L22 6 L3 9 Z" fill="#6a6a6a"/><path d="M6 7 L8 4 M11 6 L13 3 M16 5 L18 2" stroke="#eee" stroke-width="1.5"/></svg><svg class="ic" style="left:2516px;top:221px" width="24" height="24" viewBox="0 0 24 24"><rect x="11" y="1" width="3" height="14" fill="#b0b0b0"/><path d="M8 14 H17 L18 24 H6 Z" fill="#d0d0d0" stroke="#b8b8b8"/></svg><svg class="ic" style="left:2516px;top:253px" width="24" height="24" viewBox="0 0 24 24"><rect x="1" y="1" width="22" height="22" rx="3" fill="#f4f4f4" stroke="#333" stroke-width="1.8"/><path d="M8 3 V21 M12 3 V21 M16 3 V21" stroke="#e8a0a0" stroke-width="0.6"/><path d="M18 5 L12 12 L6 19" stroke="#222" stroke-width="2.2"/><path d="M18 5 L13.5 13.5 L10.5 10.5 Z" fill="#e03030"/></svg><svg class="ic" style="left:2516px;top:283px" width="24" height="24" viewBox="0 0 24 24"><path d="M12 2 C16 4 20 4 21 5 C21 14 17 19 12 22 C7 19 3 14 3 5 C4 4 8 4 12 2 Z" fill="#a0a0a0" stroke="#c4c4c4" stroke-width="1.5"/><path d="M12 6 C15 7 17 7 18 8 C18 13 15 17 12 19 Z" fill="#888"/></svg><div class="t" style="left:2505px;top:312px;font-size:12px;color:#6a6a6a;transform:scaleX(0.824);">CSF Filter</div><svg class="ic" style="left:2516px;top:332px" width="24" height="24" viewBox="0 0 24 24"><path d="M8 3 H17 M14 0.5 L17.5 3 L14 5.5" stroke="#222" stroke-width="1.3" fill="none"/><text x="12" y="23" text-anchor="middle" font-family="Liberation Sans" font-size="17" fill="#555">N</text></svg><svg class="ic" style="left:2516px;top:362px" width="24" height="24" viewBox="0 0 24 24"><rect x="2" y="1" width="21" height="22" fill="#fff"/><path d="M4 14 C2 8 6 3 12 3 C18 2 22 8 20 15 C16 18 8 18 4 14 Z" fill="#b4b4b4"/><text x="4" y="22" font-family="Liberation Sans" font-weight="bold" font-size="7" fill="#333">HPR</text></svg><svg class="ic" style="left:2516px;top:391px" width="24" height="24" viewBox="0 0 24 24"><text x="12" y="7" text-anchor="middle" font-family="Liberation Sans" font-size="7" fill="#999">M3C2</text><path d="M3 12 C8 9 16 9 21 12 L21 20 C16 23 8 23 3 20 Z" fill="none" stroke="#999" stroke-width="1" stroke-dasharray="2 1"/><circle cx="4" cy="12" r="0.9" fill="#555"/><circle cx="7" cy="18" r="0.9" fill="#555"/><circle cx="10" cy="14" r="0.9" fill="#555"/><circle cx="13" cy="20" r="0.9" fill="#555"/><circle cx="16" cy="12" r="0.9" fill="#555"/><circle cx="19" cy="17" r="0.9" fill="#555"/><circle cx="21" cy="13" r="0.9" fill="#555"/></svg><svg class="ic" style="left:2516px;top:422px" width="24" height="24" viewBox="0 0 24 24"><path d="M12 2 C16 4 20 4 21 5 C21 14 17 19 12 22 C7 19 3 14 3 5 C4 4 8 4 12 2 Z" fill="#a0a0a0" stroke="#c4c4c4" stroke-width="1.5"/><path d="M12 6 C15 7 17 7 18 8 C18 13 15 17 12 19 Z" fill="#888"/></svg><svg class="ic" style="left:2516px;top:452px" width="24" height="24" viewBox="0 0 24 24"><rect x="2" y="1" width="21" height="22" fill="#9a9a9a"/><path d="M3 4 C10 6 14 12 22 8 M3 9 C10 11 14 16 22 13" stroke="#c8c8c8" stroke-width="1.2" fill="none"/><text x="3" y="22" font-family="Liberation Mono" font-weight="bold" font-size="8" fill="#fff" textLength="19" lengthAdjust="spacingAndGlyphs">PCV</text></svg><svg class="ic" style="left:2516px;top:482px" width="24" height="24" viewBox="0 0 24 24"><rect x="2" y="1" width="21" height="22" fill="#fff"/><path d="M6 4 L15 2 L21 8 L20 18 L12 21 L4 17 L3 9 Z" fill="#9c9c9c"/></svg><svg class="ic" style="left:2516px;top:512px" width="24" height="24" viewBox="0 0 24 24"><rect x="2" y="1" width="21" height="22" fill="#fff"/><path d="M4 14 C3 9 8 6 11 8 C13 3 20 4 20 10 L20 14 Z" fill="#a4a4a4"/><circle cx="14" cy="9" r="4" fill="none" stroke="#888"/><text x="3" y="22" font-family="Liberation Sans" font-size="8" fill="#333" textLength="19" lengthAdjust="spacingAndGlyphs">RSD</text></svg><svg class="ic" style="left:2516px;top:542px" width="24" height="24" viewBox="0 0 24 24"><circle cx="3" cy="3" r="1.3" fill="#ccc"/><circle cx="9" cy="3" r="1.3" fill="#ccc"/><circle cx="21" cy="3" r="1.3" fill="#ccc"/><circle cx="3" cy="9" r="1.3" fill="#ccc"/><circle cx="3" cy="15" r="1.3" fill="#ccc"/><circle cx="3" cy="21" r="1.3" fill="#ccc"/><circle cx="21" cy="15" r="1.3" fill="#f08070"/><circle cx="15" cy="21" r="1.3" fill="#f08070"/><circle cx="21" cy="21" r="1.3" fill="#f08070"/><circle cx="14" cy="8" r="4.5" fill="none" stroke="#111" stroke-width="2.5" stroke-dasharray="2 1.2"/><circle cx="14" cy="8" r="2" fill="#e05050"/><circle cx="8" cy="16" r="4" fill="none" stroke="#111" stroke-width="2.5" stroke-dasharray="2 1.2"/></svg><svg class="ic" style="left:2516px;top:571px" width="24" height="24" viewBox="0 0 24 24"><path d="M2 18 L12 13 L22 18 L12 23 Z" fill="#8a8a8a"/><path d="M2 13 L12 8 L22 13 L12 18 Z" fill="#a8a8a8" stroke="#eee" stroke-width="0.6"/><path d="M2 8 L12 3 L22 8 L12 13 Z" fill="#c4c4c4" stroke="#eee" stroke-width="0.6"/></svg><svg class="ic" style="left:2516px;top:599px" width="24" height="24" viewBox="0 0 24 24"><ellipse cx="12" cy="12" rx="10" ry="6" fill="none" stroke="#e05068" stroke-width="1.3"/></svg><svg class="ic" style="left:2516px;top:631px" width="24" height="24" viewBox="0 0 24 24"><path d="M3 23 V10 C3 5 21 5 21 10 V23 H16 V13 H8 V23 Z" fill="#fff" stroke="#111" stroke-width="2"/><path d="M4 9 C5 5 19 5 20 9 Z" fill="#1a2a9a"/></svg><svg class="ic" style="left:2516px;top:660px" width="24" height="24" viewBox="0 0 24 24"><circle cx="3" cy="3" r="1.3" fill="#ccc"/><circle cx="9" cy="3" r="1.3" fill="#ccc"/><circle cx="15" cy="3" r="1.3" fill="#ccc"/><circle cx="21" cy="3" r="1.3" fill="#ccc"/><circle cx="3" cy="9" r="1.3" fill="#ccc"/><circle cx="3" cy="15" r="1.3" fill="#ccc"/><circle cx="3" cy="21" r="1.3" fill="#ccc"/><circle cx="21" cy="9" r="1.3" fill="#f08070"/><circle cx="21" cy="15" r="1.3" fill="#f08070"/><circle cx="21" cy="21" r="1.3" fill="#f08070"/><circle cx="15" cy="21" r="1.3" fill="#f08070"/><path d="M9 22 L6 14 C6 12 8 12 9 14 L10 5 C10 3 13 3 13 5 L13 11 L18 12 C20 13 19 18 18 22 Z" fill="#fff" stroke="#a33" stroke-width="1.3"/></svg><svg class="ic" style="left:2516px;top:692px" width="24" height="24" viewBox="0 0 24 24"><path d="M3 13 C2 8 7 6 9 7 C10 2 17 2 18 7 C22 7 23 12 21 13 Z" fill="#fff" stroke="#bbb" stroke-width="1.3"/><rect x="2" y="14" width="20" height="6" fill="#fff" stroke="#bbb" stroke-width="1.2"/><path d="M5 14 V17 M8 14 V17 M11 14 V17 M14 14 V17 M17 14 V17" stroke="#bbb" stroke-width="0.8"/></svg><svg class="ic" style="left:2516px;top:720px" width="24" height="28" viewBox="0 0 24 28"><path d="M5 1 L2 5 H4 L1 8 H9 L6 5 H8 Z M4.4 8 H5.6 V10 H4.4 Z" fill="#666"/><path d="M19 1 L16 5 H18 L15 8 H23 L20 5 H22 Z M18.4 8 H19.6 V10 H18.4 Z" fill="#666"/><path d="M12 7 L9 11 H11 L8 14 H16 L13 11 H15 Z M11.4 14 H12.6 V16 H11.4 Z" fill="#666"/><path d="M5 12 L2 16 H4 L1 19 H9 L6 16 H8 Z M4.4 19 H5.6 V21 H4.4 Z" fill="#666"/><path d="M19 12 L16 16 H18 L15 19 H23 L20 16 H22 Z M18.4 19 H19.6 V21 H18.4 Z" fill="#666"/><path d="M12 18 L9 22 H11 L8 25 H16 L13 22 H15 Z M11.4 25 H12.6 V27 H11.4 Z" fill="#666"/></svg><div class="vl" style="left:34px;top:78px;height:1311px;background:#a8a8a8"></div><div class="hl" style="left:0;top:1388px;width:35px;background:#a8a8a8"></div><div class="hl" style="left:2497px;top:1388px;width:63px;background:#a8a8a8"></div><div class="dock" style="left:36px;top:79px;width:273px;height:19px"></div><div class="t" style="left:41px;top:83px;font-size:12px;color:#000;transform:scaleX(0.873);">DB Tree</div><div class="a" style="left:44px;top:109px;width:256px;height:547px;background:#fff;border:1px solid #8c8c8c"></div><div class="dock" style="left:36px;top:669px;width:273px;height:19px"></div><div class="t" style="left:40px;top:673px;font-size:12px;color:#000;transform:scaleX(0.963);">Properties</div><div class="a" style="left:44px;top:699px;width:256px;height:541px;background:#f0f0f0;border:1px solid #8c8c8c"></div><div class="a" style="left:313px;top:78px;width:2184px;height:1171px;background:#087195;overflow:hidden" id="view"></div><svg class="a" style="left:313px;top:78px" width="2184" height="1171" viewBox="313 78 2184 1171"><defs>
<filter id="fn" x="0" y="0" width="100%" height="100%" color-interpolation-filters="sRGB">
 <feTurbulence type="fractalNoise" baseFrequency="0.5" numOctaves="1" seed="4" result="t"/>
 <feColorMatrix in="t" type="matrix" values="0 0 0 0 0.5  0 0 0 0 0.5  0 0 0 0 0.5  -7 0 0 0 3.75" result="c"/>
 <feComposite in="c" in2="SourceAlpha" operator="in"/>
</filter>
<filter id="fw" x="0" y="0" width="100%" height="100%" color-interpolation-filters="sRGB">
 <feTurbulence type="fractalNoise" baseFrequency="1.1" numOctaves="1" seed="31" result="t"/>
 <feColorMatrix in="t" type="matrix" values="0 0 0 0 0.95  0 0 0 0 0.95  0 0 0 0 0.95  12 0 0 0 -6.84" result="c"/>
 <feComposite in="c" in2="SourceAlpha" operator="in"/>
</filter>
<filter id="fd" x="0" y="0" width="100%" height="100%" color-interpolation-filters="sRGB">
 <feTurbulence type="fractalNoise" baseFrequency="0.55" numOctaves="1" seed="17" result="t"/>
 <feColorMatrix in="t" type="matrix" values="0 0 0 0 0.48  0 0 0 0 0.48  0 0 0 0 0.48  -10 0 0 0 4.55" result="c"/>
 <feComposite in="c" in2="SourceAlpha" operator="in"/>
</filter>
<filter id="fg" x="0" y="0" width="100%" height="100%" color-interpolation-filters="sRGB">
 <feTurbulence type="fractalNoise" baseFrequency="0.7" numOctaves="2" seed="9" result="t"/>
 <feColorMatrix in="t" type="matrix" values="0.6 0 0 0 0.54  0.6 0 0 0 0.54  0.6 0 0 0 0.54  0 0 0 0 1" result="c"/>
 <feComposite in="c" in2="SourceAlpha" operator="in"/>
</filter>
<filter id="fsp" x="0" y="0" width="100%" height="100%" color-interpolation-filters="sRGB">
 <feTurbulence type="fractalNoise" baseFrequency="0.8" numOctaves="1" seed="21" result="t"/>
 <feColorMatrix in="t" type="matrix" values="0 0 0 0 0.2  0 0 0 0 0.2  0 0 0 0 0.2  -14 0 0 0 5.95" result="c"/>
 <feComposite in="c" in2="SourceAlpha" operator="in" result="m"/>
 <feMerge><feMergeNode in="SourceGraphic"/><feMergeNode in="m"/></feMerge>
</filter>
<filter id="fb" x="-20%" y="-20%" width="140%" height="140%"><feGaussianBlur stdDeviation="4"/></filter>
<pattern id="ps1" width="3.3" height="4" patternUnits="userSpaceOnUse" patternTransform="rotate(-52)"><rect width="3.3" height="4" fill="#a0a0a0"/><rect width="1.2" height="4" fill="#d4d4d4"/></pattern>
<pattern id="ps2" width="3.5" height="4" patternUnits="userSpaceOnUse" patternTransform="rotate(-45)"><rect width="3.5" height="4" fill="#a8a8a8"/><rect width="1.2" height="4" fill="#d0d0d0"/></pattern>
<radialGradient id="cg" cx="0.4" cy="0.35" r="0.62" fx="0.35" fy="0.3"><stop offset="0" stop-color="#f6f6f6"/><stop offset="0.4" stop-color="#d8d8d8"/><stop offset="0.78" stop-color="#989898"/><stop offset="1" stop-color="#505050"/></radialGradient>
<clipPath id="cgp"><polygon points="451,591 1254,173 2266,446 1715,1151"/></clipPath><g id="cr"><circle cx="1280" cy="170" r="4.5"/><circle cx="1263" cy="173" r="5.2"/><circle cx="1266" cy="174" r="3.0"/><circle cx="1277" cy="175" r="4.8"/><circle cx="1308" cy="175" r="4.6"/><circle cx="1300" cy="177" r="5.1"/><circle cx="1254" cy="177" r="3.2"/><circle cx="1311" cy="177" r="3.6"/><circle cx="1310" cy="177" r="4.0"/><circle cx="1301" cy="178" r="3.4"/><circle cx="1310" cy="178" r="2.3"/><circle cx="1254" cy="178" r="4.2"/><circle cx="1299" cy="178" r="4.0"/><circle cx="1253" cy="179" r="2.7"/><circle cx="1304" cy="179" r="2.7"/><circle cx="1281" cy="179" r="2.8"/><circle cx="1305" cy="179" r="4.5"/><circle cx="1255" cy="179" r="3.6"/><circle cx="1290" cy="180" r="3.7"/><circle cx="1303" cy="180" r="3.1"/><circle cx="1308" cy="180" r="4.0"/><circle cx="1283" cy="180" r="4.7"/><circle cx="1278" cy="181" r="3.7"/><circle cx="1284" cy="182" r="5.0"/><circle cx="1246" cy="182" r="2.6"/><circle cx="1260" cy="183" r="4.2"/><circle cx="1292" cy="184" r="3.1"/><circle cx="1275" cy="184" r="3.4"/><circle cx="1295" cy="185" r="3.6"/><circle cx="1292" cy="185" r="5.1"/><circle cx="1312" cy="186" r="4.1"/><circle cx="1303" cy="186" r="3.6"/><circle cx="1271" cy="186" r="5.1"/><circle cx="1244" cy="186" r="3.5"/><circle cx="1313" cy="187" r="3.8"/><circle cx="1285" cy="187" r="2.7"/><circle cx="1243" cy="187" r="4.6"/><circle cx="1251" cy="187" r="3.2"/><circle cx="1293" cy="188" r="3.2"/><circle cx="1323" cy="189" r="4.7"/><circle cx="1256" cy="189" r="4.3"/><circle cx="1256" cy="189" r="4.1"/><circle cx="1267" cy="189" r="5.1"/><circle cx="1279" cy="189" r="2.5"/><circle cx="1257" cy="190" r="4.6"/><circle cx="1297" cy="190" r="3.1"/><circle cx="1319" cy="190" r="3.8"/><circle cx="1248" cy="190" r="4.6"/><circle cx="1266" cy="190" r="5.1"/><circle cx="1280" cy="191" r="3.1"/><circle cx="1245" cy="191" r="3.1"/><circle cx="1263" cy="191" r="2.9"/><circle cx="1283" cy="192" r="4.0"/><circle cx="1298" cy="192" r="2.3"/><circle cx="1256" cy="192" r="4.1"/><circle cx="1287" cy="193" r="3.4"/><circle cx="1282" cy="193" r="4.9"/><circle cx="1323" cy="194" r="3.7"/><circle cx="1238" cy="194" r="5.0"/><circle cx="1304" cy="194" r="3.5"/><circle cx="1338" cy="194" r="5.0"/><circle cx="1245" cy="194" r="4.8"/><circle cx="1257" cy="195" r="3.0"/><circle cx="1320" cy="196" r="4.4"/><circle cx="1297" cy="196" r="3.0"/><circle cx="1230" cy="196" r="3.6"/><circle cx="1323" cy="196" r="2.9"/><circle cx="1362" cy="196" r="4.0"/><circle cx="1337" cy="197" r="3.8"/><circle cx="1335" cy="197" r="4.4"/><circle cx="1311" cy="197" r="3.7"/><circle cx="1346" cy="197" r="2.2"/><circle cx="1230" cy="198" r="3.7"/><circle cx="1331" cy="198" r="2.5"/><circle cx="1281" cy="198" r="4.0"/><circle cx="1273" cy="198" r="2.4"/><circle cx="1293" cy="199" r="5.0"/><circle cx="1286" cy="199" r="3.2"/><circle cx="1323" cy="199" r="5.0"/><circle cx="1278" cy="199" r="5.0"/><circle cx="1365" cy="200" r="3.4"/><circle cx="1348" cy="200" r="3.5"/><circle cx="1330" cy="200" r="2.3"/><circle cx="1242" cy="200" r="2.5"/><circle cx="1324" cy="200" r="5.0"/><circle cx="1236" cy="201" r="4.6"/><circle cx="1322" cy="201" r="4.6"/><circle cx="1302" cy="201" r="2.8"/><circle cx="1346" cy="201" r="3.7"/><circle cx="1262" cy="201" r="3.5"/><circle cx="1310" cy="202" r="4.9"/><circle cx="1355" cy="202" r="3.2"/><circle cx="1292" cy="202" r="3.4"/><circle cx="1330" cy="202" r="3.5"/><circle cx="1306" cy="202" r="2.5"/><circle cx="1298" cy="203" r="2.9"/><circle cx="1370" cy="203" r="3.7"/><circle cx="1324" cy="203" r="2.7"/><circle cx="1265" cy="203" r="5.1"/><circle cx="1346" cy="203" r="4.4"/><circle cx="1351" cy="203" r="2.2"/><circle cx="1224" cy="203" r="3.4"/><circle cx="1358" cy="203" r="2.6"/><circle cx="1297" cy="204" r="2.3"/><circle cx="1295" cy="204" r="3.1"/><circle cx="1258" cy="204" r="2.2"/><circle cx="1267" cy="204" r="2.2"/><circle cx="1316" cy="204" r="3.0"/><circle cx="1276" cy="204" r="4.7"/><circle cx="1366" cy="204" r="4.6"/><circle cx="1289" cy="205" r="4.6"/><circle cx="1289" cy="205" r="4.5"/><circle cx="1233" cy="205" r="2.2"/><circle cx="1278" cy="205" r="4.1"/><circle cx="1246" cy="205" r="4.5"/><circle cx="1324" cy="205" r="3.5"/><circle cx="1347" cy="206" r="3.8"/><circle cx="1357" cy="207" r="4.2"/><circle cx="1368" cy="207" r="4.0"/><circle cx="1254" cy="207" r="4.9"/><circle cx="1242" cy="207" r="3.3"/><circle cx="1354" cy="208" r="3.0"/><circle cx="1265" cy="208" r="3.5"/><circle cx="1258" cy="208" r="3.3"/><circle cx="1315" cy="208" r="5.1"/><circle cx="1211" cy="209" r="5.2"/><circle cx="1253" cy="209" r="3.7"/><circle cx="1217" cy="209" r="3.0"/><circle cx="1364" cy="210" r="4.0"/><circle cx="1232" cy="210" r="4.9"/><circle cx="1287" cy="210" r="3.7"/><circle cx="1357" cy="210" r="4.7"/><circle cx="1330" cy="210" r="5.2"/><circle cx="1307" cy="210" r="4.4"/><circle cx="1335" cy="210" r="3.6"/><circle cx="1237" cy="210" r="3.6"/><circle cx="1312" cy="210" r="3.4"/><circle cx="1296" cy="210" r="5.1"/><circle cx="1261" cy="211" r="2.3"/><circle cx="1322" cy="212" r="2.6"/><circle cx="1228" cy="212" r="4.1"/><circle cx="1291" cy="212" r="3.9"/><circle cx="1319" cy="212" r="4.6"/><circle cx="1378" cy="212" r="4.7"/><circle cx="1330" cy="212" r="3.4"/><circle cx="1223" cy="213" r="2.2"/><circle cx="1312" cy="213" r="4.9"/><circle cx="1260" cy="213" r="3.4"/><circle cx="1337" cy="213" r="3.1"/><circle cx="1304" cy="213" r="4.1"/><circle cx="1364" cy="213" r="5.1"/><circle cx="1254" cy="214" r="2.4"/><circle cx="1307" cy="214" r="3.3"/><circle cx="1363" cy="214" r="4.8"/><circle cx="1255" cy="215" r="3.4"/><circle cx="1282" cy="215" r="3.3"/><circle cx="1314" cy="215" r="3.6"/><circle cx="1259" cy="216" r="3.4"/><circle cx="1201" cy="216" r="4.5"/><circle cx="1281" cy="216" r="4.4"/><circle cx="1274" cy="216" r="4.6"/><circle cx="1214" cy="216" r="3.1"/><circle cx="1262" cy="216" r="2.6"/><circle cx="1369" cy="217" r="3.5"/><circle cx="1335" cy="217" r="3.9"/><circle cx="1229" cy="217" r="3.4"/><circle cx="1210" cy="217" r="3.5"/><circle cx="1345" cy="218" r="2.2"/><circle cx="1204" cy="218" r="3.1"/><circle cx="1241" cy="218" r="4.5"/><circle cx="1210" cy="218" r="2.7"/><circle cx="1314" cy="219" r="4.1"/><circle cx="1317" cy="219" r="4.8"/><circle cx="1287" cy="219" r="2.3"/><circle cx="1293" cy="219" r="2.9"/><circle cx="1298" cy="220" r="3.5"/><circle cx="1230" cy="220" r="2.6"/><circle cx="1220" cy="220" r="5.0"/><circle cx="1315" cy="220" r="4.1"/><circle cx="1345" cy="221" r="4.0"/><circle cx="1364" cy="221" r="4.0"/><circle cx="1229" cy="221" r="4.8"/><circle cx="1227" cy="221" r="3.4"/><circle cx="1337" cy="221" r="3.6"/><circle cx="1302" cy="222" r="3.1"/><circle cx="1362" cy="222" r="5.2"/><circle cx="1269" cy="222" r="4.8"/><circle cx="1349" cy="222" r="3.0"/><circle cx="1260" cy="222" r="3.7"/><circle cx="1335" cy="222" r="2.9"/><circle cx="1331" cy="223" r="2.6"/><circle cx="1225" cy="223" r="4.1"/><circle cx="1248" cy="223" r="3.2"/><circle cx="1230" cy="223" r="3.5"/><circle cx="1255" cy="223" r="2.9"/><circle cx="1297" cy="223" r="2.2"/><circle cx="1312" cy="224" r="2.6"/><circle cx="1226" cy="224" r="3.9"/><circle cx="1200" cy="224" r="3.5"/><circle cx="1311" cy="224" r="3.7"/><circle cx="1203" cy="225" r="5.2"/><circle cx="1290" cy="225" r="4.5"/><circle cx="1245" cy="225" r="3.2"/><circle cx="1285" cy="226" r="3.2"/><circle cx="1331" cy="227" r="3.2"/><circle cx="1315" cy="228" r="2.8"/><circle cx="1335" cy="228" r="4.0"/><circle cx="1213" cy="228" r="4.2"/><circle cx="1338" cy="228" r="2.7"/><circle cx="1235" cy="229" r="3.6"/><circle cx="1304" cy="229" r="3.2"/><circle cx="1245" cy="230" r="4.0"/><circle cx="1244" cy="230" r="4.7"/><circle cx="1299" cy="230" r="3.4"/><circle cx="1290" cy="230" r="2.9"/><circle cx="1308" cy="231" r="4.2"/><circle cx="1326" cy="231" r="3.4"/><circle cx="1155" cy="231" r="3.6"/><circle cx="1308" cy="231" r="5.0"/><circle cx="1229" cy="231" r="4.8"/><circle cx="1232" cy="232" r="4.5"/><circle cx="1151" cy="232" r="5.1"/><circle cx="1193" cy="232" r="4.3"/><circle cx="1198" cy="232" r="2.5"/><circle cx="1206" cy="232" r="3.1"/><circle cx="1184" cy="232" r="4.0"/><circle cx="1247" cy="233" r="3.8"/><circle cx="1308" cy="233" r="3.0"/><circle cx="1142" cy="233" r="3.8"/><circle cx="1242" cy="233" r="4.3"/><circle cx="1243" cy="233" r="3.4"/><circle cx="1309" cy="234" r="2.3"/><circle cx="1308" cy="234" r="2.7"/><circle cx="1193" cy="234" r="4.0"/><circle cx="1308" cy="234" r="3.0"/><circle cx="1229" cy="234" r="3.4"/><circle cx="1188" cy="234" r="3.7"/><circle cx="1329" cy="234" r="3.9"/><circle cx="1202" cy="235" r="4.5"/><circle cx="1228" cy="235" r="4.2"/><circle cx="1337" cy="235" r="4.9"/><circle cx="1252" cy="235" r="3.6"/><circle cx="1240" cy="235" r="3.9"/><circle cx="1238" cy="235" r="3.7"/><circle cx="1196" cy="235" r="4.4"/><circle cx="1286" cy="235" r="5.0"/><circle cx="1218" cy="236" r="3.9"/><circle cx="1200" cy="236" r="3.9"/><circle cx="1240" cy="236" r="2.3"/><circle cx="1219" cy="237" r="3.3"/><circle cx="1164" cy="237" r="4.4"/><circle cx="1290" cy="238" r="5.1"/><circle cx="1322" cy="238" r="2.8"/><circle cx="1299" cy="238" r="2.8"/><circle cx="1188" cy="238" r="3.0"/><circle cx="1240" cy="238" r="2.8"/><circle cx="1249" cy="238" r="3.9"/><circle cx="1319" cy="238" r="4.5"/><circle cx="1200" cy="238" r="4.6"/><circle cx="1214" cy="238" r="2.6"/><circle cx="1290" cy="238" r="2.5"/><circle cx="1153" cy="238" r="3.5"/><circle cx="1162" cy="238" r="3.4"/><circle cx="1307" cy="239" r="5.0"/><circle cx="1319" cy="239" r="4.2"/><circle cx="1149" cy="239" r="2.7"/><circle cx="1228" cy="239" r="4.3"/><circle cx="1236" cy="239" r="4.7"/><circle cx="1324" cy="239" r="4.1"/><circle cx="1149" cy="240" r="4.0"/><circle cx="1258" cy="240" r="3.0"/><circle cx="1290" cy="240" r="3.7"/><circle cx="1250" cy="241" r="3.9"/><circle cx="1254" cy="241" r="3.2"/><circle cx="1268" cy="241" r="3.0"/><circle cx="1223" cy="241" r="3.6"/><circle cx="1182" cy="242" r="2.9"/><circle cx="1267" cy="242" r="4.7"/><circle cx="1236" cy="242" r="3.6"/><circle cx="1175" cy="242" r="3.0"/><circle cx="1291" cy="242" r="5.0"/><circle cx="1234" cy="242" r="3.6"/><circle cx="1179" cy="242" r="4.8"/><circle cx="1204" cy="243" r="4.5"/><circle cx="1227" cy="243" r="3.5"/><circle cx="1165" cy="243" r="3.6"/><circle cx="1235" cy="243" r="2.7"/><circle cx="1200" cy="243" r="4.4"/><circle cx="1322" cy="243" r="3.8"/><circle cx="1254" cy="243" r="4.4"/><circle cx="1226" cy="244" r="3.6"/><circle cx="1153" cy="244" r="4.8"/><circle cx="1159" cy="244" r="2.2"/><circle cx="1170" cy="244" r="4.7"/><circle cx="1319" cy="244" r="3.6"/><circle cx="1253" cy="244" r="4.7"/><circle cx="1219" cy="245" r="4.4"/><circle cx="1309" cy="245" r="2.9"/><circle cx="1204" cy="245" r="3.7"/><circle cx="1249" cy="245" r="2.7"/><circle cx="1220" cy="245" r="5.1"/><circle cx="1303" cy="245" r="2.9"/><circle cx="1309" cy="246" r="3.9"/><circle cx="1274" cy="246" r="3.1"/><circle cx="1195" cy="246" r="3.9"/><circle cx="1289" cy="246" r="2.7"/><circle cx="1267" cy="246" r="2.7"/><circle cx="1231" cy="246" r="4.0"/><circle cx="1315" cy="246" r="3.5"/><circle cx="1216" cy="246" r="3.6"/><circle cx="1179" cy="246" r="4.8"/><circle cx="1208" cy="247" r="4.7"/><circle cx="1285" cy="247" r="4.0"/><circle cx="1222" cy="247" r="3.9"/><circle cx="1140" cy="247" r="3.2"/><circle cx="1254" cy="247" r="2.8"/><circle cx="1268" cy="248" r="3.9"/><circle cx="1306" cy="248" r="5.2"/><circle cx="1245" cy="248" r="5.0"/><circle cx="1120" cy="248" r="4.6"/><circle cx="1264" cy="248" r="4.3"/><circle cx="1150" cy="248" r="3.5"/><circle cx="1126" cy="249" r="3.7"/><circle cx="1306" cy="249" r="3.6"/><circle cx="1226" cy="249" r="2.2"/><circle cx="1161" cy="249" r="2.6"/><circle cx="1233" cy="249" r="2.7"/><circle cx="1245" cy="249" r="3.1"/><circle cx="1182" cy="249" r="3.8"/><circle cx="1121" cy="250" r="4.1"/><circle cx="1171" cy="250" r="2.3"/><circle cx="1304" cy="251" r="2.6"/><circle cx="1238" cy="251" r="4.6"/><circle cx="1224" cy="251" r="3.4"/><circle cx="1192" cy="251" r="4.4"/><circle cx="1268" cy="251" r="4.5"/><circle cx="1151" cy="252" r="2.7"/><circle cx="1307" cy="252" r="3.4"/><circle cx="1110" cy="252" r="3.6"/><circle cx="1269" cy="252" r="2.8"/><circle cx="1182" cy="252" r="2.5"/><circle cx="1115" cy="252" r="2.6"/><circle cx="1150" cy="252" r="3.6"/><circle cx="1138" cy="253" r="4.8"/><circle cx="1119" cy="253" r="2.2"/><circle cx="1186" cy="253" r="2.9"/><circle cx="1293" cy="253" r="3.7"/><circle cx="1295" cy="253" r="5.0"/><circle cx="1123" cy="254" r="4.3"/><circle cx="1220" cy="254" r="3.2"/><circle cx="1150" cy="254" r="5.2"/><circle cx="1131" cy="255" r="5.2"/><circle cx="1207" cy="255" r="2.6"/><circle cx="1152" cy="255" r="2.4"/><circle cx="1154" cy="255" r="4.0"/><circle cx="1143" cy="255" r="3.2"/><circle cx="1164" cy="256" r="3.2"/><circle cx="1221" cy="256" r="2.2"/><circle cx="1256" cy="256" r="4.7"/><circle cx="1139" cy="256" r="3.9"/><circle cx="1235" cy="256" r="4.7"/><circle cx="1132" cy="256" r="3.4"/><circle cx="1265" cy="256" r="3.0"/><circle cx="1203" cy="256" r="2.6"/><circle cx="1207" cy="256" r="3.2"/><circle cx="1288" cy="257" r="3.9"/><circle cx="1230" cy="257" r="4.4"/><circle cx="1136" cy="257" r="2.5"/><circle cx="1267" cy="257" r="2.9"/><circle cx="1262" cy="257" r="3.4"/><circle cx="1278" cy="258" r="2.7"/><circle cx="1215" cy="258" r="3.6"/><circle cx="1125" cy="259" r="4.3"/><circle cx="1262" cy="259" r="2.2"/><circle cx="1207" cy="259" r="4.8"/><circle cx="1281" cy="259" r="2.8"/><circle cx="1231" cy="259" r="5.1"/><circle cx="1150" cy="259" r="3.8"/><circle cx="1183" cy="259" r="3.9"/><circle cx="1129" cy="259" r="4.0"/><circle cx="1262" cy="260" r="3.4"/><circle cx="1152" cy="260" r="4.4"/><circle cx="1287" cy="260" r="1.9"/><circle cx="1109" cy="261" r="2.6"/><circle cx="1134" cy="262" r="5.2"/><circle cx="1188" cy="262" r="2.9"/><circle cx="1126" cy="262" r="3.2"/><circle cx="1269" cy="262" r="3.9"/><circle cx="1296" cy="262" r="2.2"/><circle cx="1234" cy="262" r="4.9"/><circle cx="1265" cy="262" r="2.8"/><circle cx="1205" cy="262" r="3.9"/><circle cx="1197" cy="263" r="5.0"/><circle cx="1255" cy="263" r="2.2"/><circle cx="1282" cy="263" r="2.3"/><circle cx="1302" cy="263" r="2.1"/><circle cx="1282" cy="263" r="2.8"/><circle cx="1284" cy="263" r="1.8"/><circle cx="1223" cy="263" r="4.6"/><circle cx="1299" cy="263" r="2.7"/><circle cx="1293" cy="264" r="3.4"/><circle cx="1183" cy="265" r="4.9"/><circle cx="1213" cy="265" r="4.6"/><circle cx="1209" cy="265" r="3.5"/><circle cx="1210" cy="265" r="4.7"/><circle cx="1290" cy="265" r="3.3"/><circle cx="1300" cy="265" r="2.6"/><circle cx="1214" cy="265" r="2.2"/><circle cx="1214" cy="265" r="4.6"/><circle cx="1288" cy="267" r="1.9"/><circle cx="1304" cy="267" r="2.2"/><circle cx="1149" cy="267" r="4.4"/><circle cx="1137" cy="267" r="3.6"/><circle cx="1312" cy="267" r="3.4"/><circle cx="1306" cy="267" r="2.2"/><circle cx="1208" cy="267" r="4.5"/><circle cx="1160" cy="268" r="3.5"/><circle cx="1198" cy="268" r="4.8"/><circle cx="1124" cy="268" r="4.9"/><circle cx="1225" cy="268" r="3.9"/><circle cx="1224" cy="268" r="5.1"/><circle cx="1293" cy="268" r="2.2"/><circle cx="1191" cy="268" r="3.2"/><circle cx="1177" cy="268" r="3.4"/><circle cx="1124" cy="268" r="4.5"/><circle cx="1325" cy="268" r="2.9"/><circle cx="1218" cy="269" r="4.6"/><circle cx="1312" cy="269" r="3.0"/><circle cx="1309" cy="269" r="3.2"/><circle cx="1165" cy="269" r="4.7"/><circle cx="1195" cy="269" r="3.0"/><circle cx="1320" cy="269" r="2.9"/><circle cx="1314" cy="270" r="1.8"/><circle cx="1332" cy="270" r="3.0"/><circle cx="1185" cy="270" r="3.4"/><circle cx="1217" cy="270" r="3.3"/><circle cx="1307" cy="270" r="2.1"/><circle cx="1229" cy="270" r="3.5"/><circle cx="1141" cy="270" r="3.3"/><circle cx="1177" cy="271" r="2.6"/><circle cx="1337" cy="271" r="2.5"/><circle cx="1214" cy="271" r="3.4"/><circle cx="1140" cy="271" r="4.2"/><circle cx="1183" cy="272" r="2.6"/><circle cx="1168" cy="272" r="5.1"/><circle cx="1328" cy="272" r="2.8"/><circle cx="1333" cy="272" r="2.4"/><circle cx="1320" cy="272" r="2.5"/><circle cx="1137" cy="273" r="5.1"/><circle cx="1249" cy="273" r="4.7"/><circle cx="1134" cy="273" r="3.8"/><circle cx="1316" cy="273" r="2.7"/><circle cx="1347" cy="273" r="2.4"/><circle cx="1329" cy="273" r="2.0"/><circle cx="1199" cy="273" r="4.7"/><circle cx="1216" cy="273" r="3.3"/><circle cx="1343" cy="273" r="2.1"/><circle cx="1187" cy="273" r="2.4"/><circle cx="1147" cy="274" r="3.2"/><circle cx="1340" cy="274" r="2.4"/><circle cx="1146" cy="274" r="4.6"/><circle cx="1213" cy="275" r="2.8"/><circle cx="1172" cy="275" r="2.8"/><circle cx="1149" cy="275" r="4.2"/><circle cx="1354" cy="275" r="3.2"/><circle cx="1197" cy="275" r="3.3"/><circle cx="1215" cy="276" r="5.0"/><circle cx="1204" cy="276" r="3.1"/><circle cx="1322" cy="276" r="2.5"/><circle cx="1233" cy="276" r="5.0"/><circle cx="1181" cy="276" r="2.8"/><circle cx="1359" cy="276" r="1.8"/><circle cx="1362" cy="276" r="2.0"/><circle cx="1189" cy="276" r="4.0"/><circle cx="1204" cy="276" r="4.6"/><circle cx="1344" cy="277" r="2.7"/><circle cx="1325" cy="277" r="3.1"/><circle cx="1360" cy="277" r="2.3"/><circle cx="1167" cy="277" r="4.8"/><circle cx="1134" cy="278" r="2.6"/><circle cx="1348" cy="278" r="3.3"/><circle cx="1351" cy="278" r="2.7"/><circle cx="1141" cy="279" r="3.7"/><circle cx="1356" cy="279" r="1.9"/><circle cx="1337" cy="279" r="3.1"/><circle cx="1146" cy="279" r="3.9"/><circle cx="1340" cy="279" r="3.3"/><circle cx="1221" cy="279" r="3.1"/><circle cx="1173" cy="280" r="4.0"/><circle cx="1363" cy="280" r="1.7"/><circle cx="1380" cy="280" r="2.6"/><circle cx="1367" cy="281" r="2.3"/><circle cx="1213" cy="281" r="2.6"/><circle cx="1376" cy="281" r="1.7"/><circle cx="1373" cy="282" r="2.2"/><circle cx="1206" cy="282" r="3.6"/><circle cx="1183" cy="282" r="4.1"/><circle cx="1354" cy="282" r="3.1"/><circle cx="1209" cy="283" r="5.2"/><circle cx="1371" cy="283" r="1.8"/><circle cx="1366" cy="283" r="2.0"/><circle cx="1185" cy="283" r="4.9"/><circle cx="1197" cy="284" r="2.9"/><circle cx="1386" cy="284" r="3.1"/><circle cx="1382" cy="284" r="2.0"/><circle cx="1378" cy="285" r="1.9"/><circle cx="1194" cy="285" r="3.6"/><circle cx="1368" cy="285" r="3.4"/><circle cx="1393" cy="286" r="2.1"/><circle cx="1385" cy="286" r="3.0"/><circle cx="1392" cy="287" r="1.7"/><circle cx="1400" cy="288" r="2.1"/><circle cx="1206" cy="288" r="3.4"/><circle cx="1401" cy="288" r="2.8"/><circle cx="1381" cy="288" r="2.9"/><circle cx="1171" cy="289" r="3.2"/><circle cx="1390" cy="290" r="2.1"/><circle cx="1388" cy="290" r="3.1"/><circle cx="1203" cy="291" r="3.4"/><circle cx="1186" cy="292" r="2.8"/><circle cx="1416" cy="292" r="3.2"/><circle cx="1411" cy="292" r="3.1"/><circle cx="1395" cy="293" r="2.5"/><circle cx="1409" cy="293" r="2.0"/><circle cx="1419" cy="293" r="3.1"/><circle cx="1413" cy="294" r="2.4"/><circle cx="1397" cy="294" r="3.3"/><circle cx="1422" cy="294" r="1.7"/><circle cx="1403" cy="295" r="2.5"/><circle cx="1404" cy="295" r="1.8"/><circle cx="1185" cy="295" r="5.2"/><circle cx="1406" cy="296" r="3.0"/><circle cx="1283" cy="296" r="2.7"/><circle cx="1428" cy="297" r="2.1"/><circle cx="1414" cy="297" r="2.0"/><circle cx="1429" cy="297" r="2.7"/><circle cx="1279" cy="297" r="3.1"/><circle cx="1288" cy="298" r="2.6"/><circle cx="1426" cy="298" r="3.2"/><circle cx="1189" cy="298" r="5.0"/><circle cx="1420" cy="298" r="2.3"/><circle cx="1439" cy="298" r="2.4"/><circle cx="1440" cy="299" r="3.1"/><circle cx="1430" cy="299" r="1.9"/><circle cx="1423" cy="299" r="2.6"/><circle cx="1433" cy="300" r="2.5"/><circle cx="1182" cy="300" r="3.0"/><circle cx="1292" cy="300" r="2.3"/><circle cx="1282" cy="301" r="2.3"/><circle cx="1285" cy="301" r="3.1"/><circle cx="1292" cy="302" r="2.0"/><circle cx="1437" cy="302" r="2.6"/><circle cx="1287" cy="303" r="2.3"/><circle cx="1296" cy="303" r="2.5"/><circle cx="1444" cy="303" r="2.6"/><circle cx="1441" cy="303" r="2.9"/><circle cx="1448" cy="303" r="2.2"/><circle cx="1292" cy="305" r="2.2"/><circle cx="1433" cy="305" r="2.4"/><circle cx="1307" cy="306" r="1.7"/><circle cx="1305" cy="306" r="3.1"/><circle cx="1449" cy="306" r="2.7"/><circle cx="1297" cy="306" r="2.8"/><circle cx="1462" cy="307" r="2.5"/><circle cx="1452" cy="307" r="2.6"/><circle cx="1444" cy="307" r="1.9"/><circle cx="1455" cy="307" r="2.6"/><circle cx="1463" cy="308" r="1.8"/><circle cx="1308" cy="308" r="2.1"/><circle cx="1299" cy="310" r="3.2"/><circle cx="1297" cy="310" r="3.2"/><circle cx="1450" cy="310" r="2.5"/><circle cx="1480" cy="311" r="2.6"/><circle cx="1310" cy="312" r="2.0"/><circle cx="1481" cy="312" r="2.3"/><circle cx="1477" cy="312" r="2.2"/><circle cx="1455" cy="312" r="2.9"/><circle cx="1306" cy="312" r="2.1"/><circle cx="1457" cy="313" r="2.1"/><circle cx="1458" cy="313" r="3.1"/><circle cx="1474" cy="313" r="2.6"/><circle cx="1466" cy="313" r="2.8"/><circle cx="1465" cy="314" r="3.2"/><circle cx="1318" cy="315" r="2.9"/><circle cx="1485" cy="315" r="1.8"/><circle cx="1467" cy="315" r="3.3"/><circle cx="1313" cy="316" r="3.0"/><circle cx="1310" cy="316" r="2.0"/><circle cx="1491" cy="316" r="3.3"/><circle cx="1488" cy="316" r="1.9"/><circle cx="1322" cy="316" r="2.5"/><circle cx="1482" cy="317" r="1.8"/><circle cx="1469" cy="317" r="2.4"/><circle cx="1471" cy="318" r="3.1"/><circle cx="1500" cy="318" r="3.2"/><circle cx="1313" cy="319" r="3.0"/><circle cx="1329" cy="319" r="3.1"/><circle cx="1320" cy="319" r="2.1"/><circle cx="1316" cy="319" r="2.4"/><circle cx="1819" cy="320" r="2.7"/><circle cx="1484" cy="320" r="3.4"/><circle cx="1322" cy="320" r="1.9"/><circle cx="1817" cy="320" r="2.8"/><circle cx="1504" cy="320" r="2.6"/><circle cx="1813" cy="320" r="1.9"/><circle cx="1506" cy="321" r="2.0"/><circle cx="1324" cy="321" r="2.6"/><circle cx="1492" cy="322" r="1.9"/><circle cx="1493" cy="322" r="2.4"/><circle cx="1507" cy="322" r="2.2"/><circle cx="1488" cy="322" r="3.1"/><circle cx="1820" cy="323" r="2.5"/><circle cx="1334" cy="323" r="2.8"/><circle cx="1335" cy="323" r="2.7"/><circle cx="1501" cy="323" r="3.3"/><circle cx="1512" cy="324" r="2.3"/><circle cx="1330" cy="324" r="2.4"/><circle cx="1327" cy="324" r="2.8"/><circle cx="1512" cy="325" r="1.7"/><circle cx="1494" cy="325" r="2.8"/><circle cx="1498" cy="325" r="2.5"/><circle cx="1340" cy="326" r="2.9"/><circle cx="1508" cy="328" r="2.2"/><circle cx="1514" cy="328" r="2.0"/><circle cx="1527" cy="329" r="3.0"/><circle cx="1519" cy="329" r="2.5"/><circle cx="1337" cy="329" r="2.5"/><circle cx="1520" cy="329" r="2.6"/><circle cx="1340" cy="329" r="3.2"/><circle cx="1529" cy="330" r="1.8"/><circle cx="1344" cy="330" r="2.4"/><circle cx="1525" cy="330" r="1.8"/><circle cx="1332" cy="331" r="2.3"/><circle cx="1341" cy="331" r="2.6"/><circle cx="1515" cy="332" r="1.9"/><circle cx="1532" cy="332" r="2.2"/><circle cx="1535" cy="332" r="2.5"/><circle cx="1523" cy="333" r="2.8"/><circle cx="1348" cy="333" r="2.6"/><circle cx="1344" cy="334" r="3.1"/><circle cx="1538" cy="334" r="3.3"/><circle cx="1520" cy="335" r="2.3"/><circle cx="1547" cy="335" r="2.2"/><circle cx="1545" cy="336" r="2.4"/><circle cx="1351" cy="336" r="2.2"/><circle cx="1539" cy="336" r="1.7"/><circle cx="1358" cy="337" r="2.2"/><circle cx="1344" cy="337" r="2.4"/><circle cx="1530" cy="337" r="2.8"/><circle cx="1754" cy="337" r="3.0"/><circle cx="1541" cy="338" r="2.6"/><circle cx="1349" cy="338" r="3.0"/><circle cx="1748" cy="338" r="1.9"/><circle cx="1358" cy="338" r="3.3"/><circle cx="1542" cy="338" r="1.7"/><circle cx="1742" cy="339" r="2.4"/><circle cx="1751" cy="339" r="3.2"/><circle cx="1352" cy="339" r="3.0"/><circle cx="1557" cy="339" r="3.1"/><circle cx="1534" cy="340" r="3.4"/><circle cx="1555" cy="340" r="2.9"/><circle cx="1352" cy="340" r="3.2"/><circle cx="1547" cy="341" r="2.6"/><circle cx="1553" cy="341" r="2.3"/><circle cx="1561" cy="342" r="2.6"/><circle cx="1739" cy="342" r="3.1"/><circle cx="1550" cy="343" r="2.9"/><circle cx="1366" cy="343" r="2.8"/><circle cx="1369" cy="343" r="3.0"/><circle cx="1733" cy="343" r="3.1"/><circle cx="1359" cy="343" r="3.0"/><circle cx="1734" cy="343" r="2.1"/><circle cx="1566" cy="344" r="2.3"/><circle cx="1720" cy="344" r="1.9"/><circle cx="1361" cy="344" r="2.7"/><circle cx="1573" cy="345" r="3.1"/><circle cx="1557" cy="345" r="2.9"/><circle cx="1362" cy="346" r="2.7"/><circle cx="1726" cy="346" r="2.4"/><circle cx="1725" cy="347" r="2.5"/><circle cx="1563" cy="347" r="3.2"/><circle cx="1577" cy="347" r="3.0"/><circle cx="1713" cy="347" r="3.1"/><circle cx="1578" cy="347" r="2.2"/><circle cx="1703" cy="348" r="2.8"/><circle cx="1364" cy="348" r="1.9"/><circle cx="1373" cy="348" r="2.4"/><circle cx="1560" cy="348" r="3.1"/><circle cx="1564" cy="348" r="2.1"/><circle cx="1710" cy="348" r="3.3"/><circle cx="1378" cy="349" r="2.7"/><circle cx="1378" cy="349" r="3.1"/><circle cx="1706" cy="349" r="1.9"/><circle cx="1369" cy="349" r="2.3"/><circle cx="1580" cy="350" r="3.0"/><circle cx="1569" cy="350" r="2.9"/><circle cx="1374" cy="350" r="2.8"/><circle cx="1574" cy="350" r="2.6"/><circle cx="1566" cy="350" r="2.6"/><circle cx="1370" cy="351" r="2.7"/><circle cx="1696" cy="352" r="2.0"/><circle cx="1696" cy="352" r="2.8"/><circle cx="1684" cy="352" r="3.2"/><circle cx="1586" cy="352" r="3.0"/><circle cx="1581" cy="353" r="2.4"/><circle cx="1380" cy="353" r="2.7"/><circle cx="1386" cy="353" r="2.8"/><circle cx="1589" cy="354" r="2.8"/><circle cx="1681" cy="354" r="2.9"/><circle cx="1387" cy="354" r="1.7"/><circle cx="1581" cy="355" r="3.0"/><circle cx="1690" cy="355" r="2.4"/><circle cx="1913" cy="355" r="2.1"/><circle cx="1584" cy="355" r="1.8"/><circle cx="1587" cy="356" r="1.7"/><circle cx="1392" cy="356" r="2.9"/><circle cx="1392" cy="357" r="3.2"/><circle cx="1377" cy="357" r="2.5"/><circle cx="1593" cy="357" r="2.5"/><circle cx="1908" cy="357" r="2.1"/><circle cx="1668" cy="358" r="3.3"/><circle cx="1673" cy="358" r="2.3"/><circle cx="1601" cy="358" r="2.1"/><circle cx="1678" cy="358" r="3.4"/><circle cx="1591" cy="358" r="2.2"/><circle cx="1603" cy="359" r="2.7"/><circle cx="1658" cy="359" r="2.1"/><circle cx="1386" cy="359" r="1.9"/><circle cx="1898" cy="359" r="3.0"/><circle cx="1643" cy="360" r="2.5"/><circle cx="1381" cy="360" r="2.5"/><circle cx="1613" cy="360" r="2.3"/><circle cx="1650" cy="360" r="2.1"/><circle cx="1631" cy="360" r="2.3"/><circle cx="1655" cy="360" r="1.9"/><circle cx="1629" cy="361" r="2.2"/><circle cx="1664" cy="361" r="2.4"/><circle cx="1647" cy="361" r="2.8"/><circle cx="1625" cy="361" r="1.8"/><circle cx="1593" cy="361" r="2.0"/><circle cx="1641" cy="361" r="1.8"/><circle cx="1644" cy="361" r="3.0"/><circle cx="1603" cy="361" r="3.3"/><circle cx="1675" cy="361" r="2.9"/><circle cx="1665" cy="362" r="3.3"/><circle cx="1620" cy="362" r="2.4"/><circle cx="1597" cy="362" r="3.3"/><circle cx="1664" cy="362" r="2.3"/><circle cx="1671" cy="362" r="2.2"/><circle cx="1663" cy="362" r="2.4"/><circle cx="1887" cy="362" r="2.4"/><circle cx="1403" cy="362" r="1.7"/><circle cx="1639" cy="363" r="3.0"/><circle cx="1596" cy="363" r="1.7"/><circle cx="1391" cy="363" r="2.0"/><circle cx="1610" cy="363" r="1.7"/><circle cx="1894" cy="363" r="2.3"/><circle cx="1610" cy="363" r="2.5"/><circle cx="1653" cy="363" r="2.1"/><circle cx="1648" cy="364" r="2.4"/><circle cx="1660" cy="364" r="3.2"/><circle cx="1401" cy="364" r="3.3"/><circle cx="1624" cy="364" r="2.3"/><circle cx="1392" cy="364" r="2.9"/><circle cx="1667" cy="364" r="2.8"/><circle cx="1671" cy="364" r="2.5"/><circle cx="1683" cy="364" r="2.0"/><circle cx="1604" cy="364" r="2.6"/><circle cx="1881" cy="365" r="2.2"/><circle cx="1607" cy="365" r="2.1"/><circle cx="1620" cy="365" r="3.2"/><circle cx="1637" cy="365" r="1.8"/><circle cx="1395" cy="365" r="1.8"/><circle cx="1678" cy="366" r="3.3"/><circle cx="1397" cy="366" r="2.5"/><circle cx="1626" cy="366" r="2.2"/><circle cx="1878" cy="366" r="3.4"/><circle cx="1617" cy="366" r="1.9"/><circle cx="1615" cy="366" r="1.7"/><circle cx="1678" cy="366" r="2.7"/><circle cx="1633" cy="366" r="3.1"/><circle cx="1696" cy="367" r="2.6"/><circle cx="1635" cy="367" r="3.3"/><circle cx="1691" cy="367" r="3.3"/><circle cx="1701" cy="367" r="2.2"/><circle cx="1655" cy="367" r="2.5"/><circle cx="1693" cy="368" r="1.9"/><circle cx="1411" cy="368" r="3.1"/><circle cx="1673" cy="369" r="3.2"/><circle cx="1707" cy="369" r="2.5"/><circle cx="1406" cy="369" r="1.8"/><circle cx="1688" cy="369" r="1.8"/><circle cx="1684" cy="370" r="3.3"/><circle cx="1403" cy="370" r="2.0"/><circle cx="1401" cy="370" r="1.8"/><circle cx="1686" cy="370" r="3.0"/><circle cx="1698" cy="370" r="2.1"/><circle cx="1681" cy="370" r="3.4"/><circle cx="1407" cy="370" r="2.4"/><circle cx="1417" cy="371" r="3.4"/><circle cx="1693" cy="371" r="2.9"/><circle cx="1869" cy="371" r="2.4"/><circle cx="1413" cy="372" r="3.0"/><circle cx="1865" cy="372" r="3.3"/><circle cx="1704" cy="372" r="2.1"/><circle cx="1715" cy="372" r="3.1"/><circle cx="1712" cy="373" r="2.4"/><circle cx="1410" cy="373" r="2.8"/><circle cx="1709" cy="373" r="2.1"/><circle cx="1720" cy="374" r="3.0"/><circle cx="1729" cy="374" r="1.8"/><circle cx="1719" cy="374" r="3.1"/><circle cx="1724" cy="374" r="2.4"/><circle cx="1728" cy="375" r="3.4"/><circle cx="1717" cy="375" r="2.0"/><circle cx="1860" cy="376" r="3.1"/><circle cx="1700" cy="376" r="2.8"/><circle cx="1738" cy="376" r="2.8"/><circle cx="1422" cy="376" r="2.4"/><circle cx="1741" cy="376" r="2.2"/><circle cx="1413" cy="376" r="2.7"/><circle cx="1427" cy="376" r="2.1"/><circle cx="1704" cy="377" r="2.9"/><circle cx="1735" cy="377" r="3.3"/><circle cx="1710" cy="378" r="2.1"/><circle cx="1855" cy="378" r="2.9"/><circle cx="1423" cy="378" r="2.9"/><circle cx="1416" cy="378" r="2.3"/><circle cx="1753" cy="379" r="2.4"/><circle cx="1431" cy="379" r="3.1"/><circle cx="1739" cy="379" r="2.3"/><circle cx="1746" cy="379" r="2.3"/><circle cx="1755" cy="380" r="3.3"/><circle cx="1851" cy="380" r="1.9"/><circle cx="1751" cy="380" r="2.3"/><circle cx="1720" cy="380" r="2.5"/><circle cx="1417" cy="381" r="3.1"/><circle cx="1768" cy="381" r="2.1"/><circle cx="1725" cy="381" r="1.9"/><circle cx="1747" cy="382" r="2.3"/><circle cx="1427" cy="382" r="3.1"/><circle cx="1730" cy="382" r="3.2"/><circle cx="1759" cy="382" r="3.3"/><circle cx="1843" cy="382" r="3.0"/><circle cx="1762" cy="383" r="2.9"/><circle cx="1422" cy="383" r="3.1"/><circle cx="1763" cy="383" r="1.7"/><circle cx="1732" cy="384" r="3.3"/><circle cx="1771" cy="384" r="2.4"/><circle cx="1782" cy="384" r="1.8"/><circle cx="1780" cy="385" r="3.0"/><circle cx="1746" cy="385" r="2.4"/><circle cx="1787" cy="385" r="2.5"/><circle cx="1741" cy="385" r="1.9"/><circle cx="1754" cy="386" r="1.8"/><circle cx="1778" cy="386" r="3.0"/><circle cx="1435" cy="386" r="3.1"/><circle cx="1756" cy="386" r="3.2"/><circle cx="1442" cy="386" r="2.1"/><circle cx="1430" cy="387" r="2.7"/><circle cx="1784" cy="387" r="3.4"/><circle cx="1430" cy="387" r="3.1"/><circle cx="1777" cy="388" r="2.3"/><circle cx="1839" cy="388" r="1.8"/><circle cx="1799" cy="388" r="2.1"/><circle cx="1438" cy="388" r="2.9"/><circle cx="1432" cy="389" r="2.3"/><circle cx="1812" cy="389" r="2.2"/><circle cx="1825" cy="389" r="2.3"/><circle cx="1436" cy="389" r="3.3"/><circle cx="1790" cy="389" r="2.1"/><circle cx="1775" cy="389" r="3.1"/><circle cx="1765" cy="389" r="2.8"/><circle cx="1805" cy="389" r="3.1"/><circle cx="1797" cy="389" r="3.0"/><circle cx="1831" cy="389" r="2.4"/><circle cx="1822" cy="390" r="2.0"/><circle cx="1768" cy="390" r="3.3"/><circle cx="1812" cy="390" r="3.4"/><circle cx="1828" cy="390" r="2.2"/><circle cx="1772" cy="390" r="2.0"/><circle cx="1802" cy="390" r="3.4"/><circle cx="1791" cy="391" r="2.8"/><circle cx="1451" cy="391" r="2.0"/><circle cx="1445" cy="392" r="3.2"/><circle cx="1456" cy="392" r="3.4"/><circle cx="1442" cy="392" r="2.5"/><circle cx="1817" cy="393" r="2.1"/><circle cx="1442" cy="393" r="3.0"/><circle cx="1448" cy="393" r="2.5"/><circle cx="1793" cy="393" r="2.8"/><circle cx="1794" cy="393" r="2.2"/><circle cx="1786" cy="393" r="2.2"/><circle cx="1457" cy="393" r="2.8"/><circle cx="1824" cy="394" r="2.8"/><circle cx="1820" cy="394" r="2.1"/><circle cx="1453" cy="394" r="2.6"/><circle cx="1834" cy="394" r="1.9"/><circle cx="1800" cy="394" r="2.7"/><circle cx="1808" cy="395" r="3.1"/><circle cx="1459" cy="395" r="2.7"/><circle cx="1449" cy="395" r="2.3"/><circle cx="1829" cy="396" r="2.6"/><circle cx="1830" cy="396" r="2.0"/><circle cx="1833" cy="396" r="3.0"/><circle cx="1806" cy="396" r="1.9"/><circle cx="1824" cy="397" r="3.0"/><circle cx="1836" cy="397" r="2.8"/><circle cx="1814" cy="397" r="2.3"/><circle cx="1819" cy="397" r="1.9"/><circle cx="1819" cy="397" r="1.9"/><circle cx="1816" cy="398" r="2.9"/><circle cx="1459" cy="399" r="1.7"/><circle cx="1830" cy="399" r="1.9"/><circle cx="1469" cy="399" r="2.0"/><circle cx="1813" cy="400" r="3.3"/><circle cx="1829" cy="400" r="2.5"/><circle cx="1471" cy="400" r="1.8"/><circle cx="1462" cy="401" r="2.1"/><circle cx="1465" cy="401" r="3.3"/><circle cx="1827" cy="401" r="2.8"/><circle cx="1813" cy="402" r="3.3"/><circle cx="1809" cy="402" r="2.2"/><circle cx="1824" cy="403" r="2.6"/><circle cx="1458" cy="403" r="3.2"/><circle cx="1817" cy="405" r="3.4"/><circle cx="1465" cy="405" r="3.3"/><circle cx="1813" cy="405" r="3.0"/><circle cx="1475" cy="406" r="1.9"/><circle cx="1478" cy="406" r="2.7"/><circle cx="1799" cy="407" r="2.0"/><circle cx="1470" cy="408" r="2.5"/><circle cx="1483" cy="409" r="2.3"/><circle cx="1480" cy="409" r="2.0"/><circle cx="1809" cy="409" r="2.6"/><circle cx="1472" cy="409" r="1.8"/><circle cx="1805" cy="409" r="1.8"/><circle cx="1793" cy="410" r="2.8"/><circle cx="1807" cy="410" r="2.1"/><circle cx="1805" cy="411" r="3.3"/><circle cx="1796" cy="412" r="3.2"/><circle cx="1792" cy="412" r="2.2"/><circle cx="1476" cy="412" r="2.8"/><circle cx="1798" cy="413" r="3.2"/><circle cx="1495" cy="413" r="2.3"/><circle cx="1800" cy="414" r="2.6"/><circle cx="1492" cy="414" r="2.7"/><circle cx="1496" cy="414" r="2.5"/><circle cx="1480" cy="414" r="2.1"/><circle cx="1484" cy="415" r="2.9"/><circle cx="1790" cy="415" r="2.3"/><circle cx="1500" cy="415" r="2.9"/><circle cx="1484" cy="415" r="3.1"/><circle cx="1497" cy="416" r="1.9"/><circle cx="1501" cy="416" r="3.3"/><circle cx="1488" cy="416" r="3.3"/><circle cx="1785" cy="417" r="3.4"/><circle cx="1789" cy="417" r="2.0"/><circle cx="1783" cy="418" r="2.2"/><circle cx="1486" cy="418" r="1.8"/><circle cx="1505" cy="419" r="2.5"/><circle cx="1788" cy="420" r="3.1"/><circle cx="1780" cy="421" r="2.6"/><circle cx="1769" cy="422" r="2.1"/><circle cx="1785" cy="422" r="2.0"/><circle cx="1510" cy="423" r="1.8"/><circle cx="1774" cy="423" r="2.7"/><circle cx="1771" cy="423" r="2.8"/><circle cx="1507" cy="423" r="2.3"/><circle cx="1772" cy="424" r="2.5"/><circle cx="1499" cy="424" r="3.2"/><circle cx="1779" cy="424" r="2.1"/><circle cx="1775" cy="424" r="2.8"/><circle cx="1509" cy="424" r="2.8"/><circle cx="1515" cy="426" r="2.4"/><circle cx="1502" cy="426" r="3.1"/><circle cx="1778" cy="426" r="1.7"/><circle cx="1777" cy="426" r="2.3"/><circle cx="1515" cy="426" r="3.1"/><circle cx="1518" cy="426" r="2.5"/><circle cx="1512" cy="427" r="1.9"/><circle cx="1523" cy="428" r="3.2"/><circle cx="1776" cy="428" r="2.8"/><circle cx="1523" cy="429" r="2.5"/><circle cx="1771" cy="430" r="2.4"/><circle cx="1524" cy="430" r="2.0"/><circle cx="1781" cy="431" r="2.1"/><circle cx="1529" cy="431" r="2.2"/><circle cx="1531" cy="432" r="2.9"/><circle cx="1516" cy="433" r="1.9"/><circle cx="1775" cy="433" r="2.9"/><circle cx="1777" cy="433" r="1.8"/><circle cx="1780" cy="434" r="1.7"/><circle cx="1790" cy="434" r="1.8"/><circle cx="1785" cy="434" r="2.6"/><circle cx="2189" cy="435" r="4.5"/><circle cx="1797" cy="436" r="2.1"/><circle cx="740" cy="436" r="1.7"/><circle cx="1533" cy="436" r="1.9"/><circle cx="1783" cy="436" r="1.9"/><circle cx="2182" cy="437" r="3.7"/><circle cx="1787" cy="437" r="2.0"/><circle cx="1523" cy="437" r="3.4"/><circle cx="2201" cy="438" r="4.5"/><circle cx="1542" cy="438" r="1.8"/><circle cx="1535" cy="438" r="3.3"/><circle cx="1798" cy="438" r="3.0"/><circle cx="2209" cy="439" r="2.5"/><circle cx="1791" cy="439" r="2.9"/><circle cx="2200" cy="439" r="2.9"/><circle cx="1791" cy="439" r="3.0"/><circle cx="744" cy="439" r="1.7"/><circle cx="2191" cy="439" r="4.0"/><circle cx="2180" cy="439" r="3.3"/><circle cx="2193" cy="439" r="3.4"/><circle cx="2214" cy="440" r="5.0"/><circle cx="1528" cy="440" r="1.7"/><circle cx="1794" cy="440" r="2.5"/><circle cx="2180" cy="440" r="3.6"/><circle cx="1536" cy="440" r="1.9"/><circle cx="1531" cy="440" r="2.6"/><circle cx="2180" cy="440" r="3.9"/><circle cx="740" cy="440" r="2.9"/><circle cx="1809" cy="440" r="2.1"/><circle cx="2253" cy="440" r="3.2"/><circle cx="740" cy="441" r="2.0"/><circle cx="735" cy="441" r="2.1"/><circle cx="2202" cy="441" r="2.4"/><circle cx="2221" cy="441" r="3.6"/><circle cx="2236" cy="441" r="3.5"/><circle cx="1801" cy="441" r="2.4"/><circle cx="738" cy="442" r="3.1"/><circle cx="1542" cy="442" r="2.2"/><circle cx="1537" cy="442" r="2.9"/><circle cx="1804" cy="442" r="2.2"/><circle cx="1551" cy="442" r="3.1"/><circle cx="2212" cy="443" r="2.7"/><circle cx="2242" cy="443" r="2.9"/><circle cx="2186" cy="443" r="2.3"/><circle cx="1799" cy="443" r="2.9"/><circle cx="2217" cy="443" r="4.0"/><circle cx="2251" cy="443" r="2.6"/><circle cx="2229" cy="444" r="2.8"/><circle cx="1554" cy="444" r="3.2"/><circle cx="1543" cy="444" r="2.9"/><circle cx="2195" cy="444" r="5.2"/><circle cx="1813" cy="444" r="3.2"/><circle cx="2200" cy="444" r="3.0"/><circle cx="2209" cy="444" r="4.5"/><circle cx="1811" cy="444" r="3.2"/><circle cx="2200" cy="444" r="2.4"/><circle cx="1546" cy="445" r="2.0"/><circle cx="734" cy="445" r="2.8"/><circle cx="726" cy="445" r="2.5"/><circle cx="2194" cy="445" r="3.5"/><circle cx="2201" cy="445" r="3.2"/><circle cx="2246" cy="445" r="2.2"/><circle cx="2237" cy="446" r="4.3"/><circle cx="1807" cy="446" r="3.3"/><circle cx="1804" cy="446" r="2.1"/><circle cx="1545" cy="446" r="2.4"/><circle cx="736" cy="446" r="2.0"/><circle cx="2197" cy="447" r="2.6"/><circle cx="2258" cy="447" r="4.2"/><circle cx="2220" cy="447" r="4.8"/><circle cx="2198" cy="447" r="4.2"/><circle cx="725" cy="447" r="2.9"/><circle cx="2243" cy="447" r="3.3"/><circle cx="2231" cy="447" r="3.6"/><circle cx="2213" cy="448" r="3.3"/><circle cx="2238" cy="448" r="2.7"/><circle cx="1817" cy="448" r="3.1"/><circle cx="2204" cy="448" r="2.5"/><circle cx="729" cy="448" r="2.0"/><circle cx="1813" cy="448" r="2.8"/><circle cx="732" cy="449" r="3.0"/><circle cx="2225" cy="449" r="4.4"/><circle cx="1825" cy="449" r="1.7"/><circle cx="1562" cy="449" r="2.9"/><circle cx="1557" cy="449" r="2.7"/><circle cx="1827" cy="449" r="1.8"/><circle cx="1549" cy="449" r="3.2"/><circle cx="718" cy="449" r="2.1"/><circle cx="2222" cy="449" r="4.9"/><circle cx="2261" cy="449" r="4.4"/><circle cx="2249" cy="450" r="3.3"/><circle cx="2244" cy="450" r="3.8"/><circle cx="2190" cy="450" r="2.7"/><circle cx="2228" cy="450" r="2.6"/><circle cx="719" cy="450" r="1.8"/><circle cx="722" cy="450" r="2.4"/><circle cx="1819" cy="450" r="2.2"/><circle cx="724" cy="450" r="3.3"/><circle cx="1558" cy="451" r="2.5"/><circle cx="1820" cy="451" r="1.8"/><circle cx="1831" cy="451" r="2.7"/><circle cx="2217" cy="451" r="4.3"/><circle cx="2196" cy="451" r="2.8"/><circle cx="2239" cy="451" r="5.1"/><circle cx="1816" cy="451" r="2.4"/><circle cx="1552" cy="451" r="2.2"/><circle cx="2228" cy="451" r="4.1"/><circle cx="1554" cy="452" r="2.3"/><circle cx="717" cy="452" r="2.8"/><circle cx="1571" cy="452" r="3.3"/><circle cx="1835" cy="452" r="3.2"/><circle cx="2219" cy="452" r="4.3"/><circle cx="2253" cy="452" r="4.9"/><circle cx="714" cy="453" r="2.4"/><circle cx="2253" cy="453" r="5.0"/><circle cx="1565" cy="453" r="3.0"/><circle cx="2232" cy="453" r="4.8"/><circle cx="1838" cy="453" r="1.8"/><circle cx="2248" cy="454" r="2.7"/><circle cx="2220" cy="454" r="4.3"/><circle cx="712" cy="454" r="2.4"/><circle cx="1572" cy="454" r="1.9"/><circle cx="1828" cy="454" r="2.9"/><circle cx="1822" cy="455" r="2.3"/><circle cx="710" cy="455" r="3.3"/><circle cx="2233" cy="455" r="3.1"/><circle cx="1843" cy="455" r="3.0"/><circle cx="1567" cy="455" r="2.6"/><circle cx="2250" cy="455" r="4.6"/><circle cx="2254" cy="456" r="4.8"/><circle cx="1561" cy="456" r="2.2"/><circle cx="2244" cy="456" r="5.2"/><circle cx="718" cy="456" r="2.1"/><circle cx="1830" cy="457" r="3.1"/><circle cx="1564" cy="457" r="3.3"/><circle cx="1844" cy="458" r="2.4"/><circle cx="1846" cy="458" r="2.2"/><circle cx="2207" cy="458" r="2.8"/><circle cx="2257" cy="458" r="3.5"/><circle cx="2207" cy="458" r="5.1"/><circle cx="1853" cy="458" r="2.4"/><circle cx="2251" cy="458" r="3.4"/><circle cx="2207" cy="459" r="3.5"/><circle cx="1841" cy="459" r="2.2"/><circle cx="2215" cy="459" r="3.8"/><circle cx="710" cy="459" r="2.9"/><circle cx="1835" cy="460" r="1.9"/><circle cx="1849" cy="460" r="2.2"/><circle cx="1584" cy="460" r="2.4"/><circle cx="1839" cy="460" r="2.8"/><circle cx="1575" cy="460" r="2.7"/><circle cx="1573" cy="460" r="2.0"/><circle cx="2243" cy="460" r="4.9"/><circle cx="1571" cy="460" r="1.8"/><circle cx="701" cy="460" r="2.3"/><circle cx="2253" cy="460" r="4.5"/><circle cx="1860" cy="460" r="2.0"/><circle cx="707" cy="461" r="2.5"/><circle cx="700" cy="461" r="2.9"/><circle cx="709" cy="461" r="1.7"/><circle cx="1859" cy="461" r="3.1"/><circle cx="697" cy="461" r="3.2"/><circle cx="1851" cy="461" r="3.1"/><circle cx="1581" cy="462" r="2.6"/><circle cx="1577" cy="462" r="1.9"/><circle cx="705" cy="462" r="1.8"/><circle cx="2248" cy="462" r="2.9"/><circle cx="1579" cy="463" r="1.8"/><circle cx="1855" cy="463" r="2.1"/><circle cx="2255" cy="464" r="2.4"/><circle cx="1584" cy="464" r="3.2"/><circle cx="1852" cy="464" r="2.3"/><circle cx="1585" cy="465" r="3.0"/><circle cx="1868" cy="465" r="2.9"/><circle cx="1871" cy="465" r="2.8"/><circle cx="1867" cy="465" r="3.3"/><circle cx="1590" cy="466" r="3.1"/><circle cx="1862" cy="466" r="3.1"/><circle cx="1864" cy="466" r="2.3"/><circle cx="1592" cy="466" r="3.3"/><circle cx="694" cy="467" r="1.9"/><circle cx="1594" cy="467" r="2.1"/><circle cx="696" cy="467" r="2.7"/><circle cx="1601" cy="467" r="2.6"/><circle cx="700" cy="467" r="3.3"/><circle cx="1586" cy="468" r="3.3"/><circle cx="1595" cy="468" r="3.4"/><circle cx="2255" cy="469" r="2.9"/><circle cx="688" cy="469" r="2.2"/><circle cx="1860" cy="469" r="1.7"/><circle cx="1875" cy="469" r="3.2"/><circle cx="1879" cy="470" r="3.2"/><circle cx="1605" cy="470" r="2.4"/><circle cx="1607" cy="470" r="1.9"/><circle cx="694" cy="470" r="3.1"/><circle cx="1874" cy="471" r="2.3"/><circle cx="1870" cy="471" r="2.9"/><circle cx="693" cy="471" r="2.4"/><circle cx="1881" cy="471" r="3.2"/><circle cx="1882" cy="472" r="2.6"/><circle cx="679" cy="473" r="2.7"/><circle cx="1886" cy="473" r="2.0"/><circle cx="682" cy="473" r="3.2"/><circle cx="1613" cy="473" r="2.8"/><circle cx="1601" cy="473" r="2.3"/><circle cx="1596" cy="473" r="3.1"/><circle cx="1893" cy="473" r="2.5"/><circle cx="1875" cy="474" r="1.7"/><circle cx="688" cy="474" r="1.9"/><circle cx="675" cy="474" r="2.6"/><circle cx="1889" cy="475" r="3.0"/><circle cx="687" cy="475" r="2.4"/><circle cx="686" cy="475" r="3.3"/><circle cx="1895" cy="475" r="2.0"/><circle cx="674" cy="475" r="3.3"/><circle cx="1897" cy="475" r="2.1"/><circle cx="1599" cy="475" r="2.1"/><circle cx="1884" cy="476" r="2.8"/><circle cx="1888" cy="476" r="3.0"/><circle cx="1901" cy="477" r="3.4"/><circle cx="1904" cy="477" r="3.3"/><circle cx="1607" cy="477" r="3.3"/><circle cx="1621" cy="478" r="2.7"/><circle cx="681" cy="478" r="1.8"/><circle cx="1608" cy="478" r="3.2"/><circle cx="1619" cy="479" r="2.2"/><circle cx="1611" cy="479" r="2.2"/><circle cx="1898" cy="479" r="2.0"/><circle cx="1894" cy="479" r="3.1"/><circle cx="1615" cy="479" r="2.4"/><circle cx="1904" cy="479" r="3.4"/><circle cx="1625" cy="480" r="2.2"/><circle cx="1909" cy="482" r="1.8"/><circle cx="1612" cy="482" r="2.8"/><circle cx="1621" cy="482" r="2.2"/><circle cx="1626" cy="482" r="2.1"/><circle cx="1622" cy="483" r="2.0"/><circle cx="1907" cy="483" r="1.9"/><circle cx="1906" cy="483" r="2.4"/><circle cx="1913" cy="485" r="2.5"/><circle cx="1627" cy="485" r="3.1"/><circle cx="1914" cy="485" r="2.4"/><circle cx="1911" cy="485" r="2.9"/><circle cx="1635" cy="486" r="2.1"/><circle cx="1629" cy="486" r="2.8"/><circle cx="1918" cy="488" r="2.4"/><circle cx="1931" cy="488" r="2.4"/><circle cx="1919" cy="488" r="3.2"/><circle cx="1630" cy="488" r="2.5"/><circle cx="1637" cy="488" r="2.7"/><circle cx="1916" cy="488" r="2.4"/><circle cx="1638" cy="488" r="3.2"/><circle cx="1632" cy="488" r="2.5"/><circle cx="1922" cy="489" r="3.1"/><circle cx="1924" cy="489" r="2.5"/><circle cx="1925" cy="489" r="1.9"/><circle cx="1645" cy="490" r="1.8"/><circle cx="1927" cy="491" r="2.9"/><circle cx="1639" cy="491" r="2.5"/><circle cx="1931" cy="491" r="2.4"/><circle cx="1648" cy="493" r="3.3"/><circle cx="1645" cy="493" r="1.8"/><circle cx="1652" cy="493" r="2.3"/><circle cx="1646" cy="494" r="3.0"/><circle cx="1935" cy="494" r="2.4"/><circle cx="1932" cy="494" r="2.0"/><circle cx="1639" cy="496" r="2.2"/><circle cx="1661" cy="498" r="3.2"/><circle cx="1651" cy="498" r="2.7"/><circle cx="1652" cy="501" r="2.6"/><circle cx="1654" cy="501" r="3.0"/><circle cx="1655" cy="502" r="2.9"/><circle cx="1666" cy="503" r="2.5"/><circle cx="1658" cy="503" r="2.7"/><circle cx="1675" cy="505" r="2.7"/><circle cx="1662" cy="505" r="3.2"/><circle cx="1677" cy="506" r="3.3"/><circle cx="1660" cy="506" r="2.7"/><circle cx="1668" cy="506" r="2.4"/><circle cx="1666" cy="506" r="2.2"/><circle cx="1672" cy="507" r="2.0"/><circle cx="1683" cy="508" r="1.8"/><circle cx="1669" cy="508" r="3.1"/><circle cx="1681" cy="508" r="2.4"/><circle cx="1682" cy="512" r="3.3"/><circle cx="1675" cy="512" r="3.1"/><circle cx="1693" cy="513" r="2.3"/><circle cx="1688" cy="513" r="2.7"/><circle cx="1684" cy="514" r="3.4"/><circle cx="1686" cy="514" r="2.9"/><circle cx="1692" cy="518" r="2.7"/><circle cx="1687" cy="519" r="2.9"/><circle cx="1699" cy="520" r="3.4"/><circle cx="1695" cy="520" r="3.4"/><circle cx="1697" cy="520" r="3.1"/><circle cx="1693" cy="522" r="2.5"/><circle cx="1701" cy="523" r="1.9"/><circle cx="1706" cy="523" r="2.6"/><circle cx="1709" cy="524" r="2.0"/><circle cx="1702" cy="525" r="3.1"/><circle cx="1717" cy="526" r="2.2"/><circle cx="1703" cy="528" r="2.4"/><circle cx="1709" cy="528" r="2.3"/><circle cx="1711" cy="530" r="1.8"/><circle cx="1711" cy="531" r="2.2"/><circle cx="1717" cy="532" r="2.6"/><circle cx="1723" cy="532" r="3.0"/><circle cx="1716" cy="532" r="2.8"/><circle cx="1725" cy="532" r="2.0"/><circle cx="1718" cy="534" r="2.6"/><circle cx="1730" cy="535" r="1.7"/><circle cx="1721" cy="535" r="2.4"/><circle cx="1732" cy="537" r="2.2"/><circle cx="1730" cy="538" r="2.9"/><circle cx="1724" cy="539" r="2.7"/><circle cx="1741" cy="541" r="3.3"/><circle cx="1734" cy="541" r="2.4"/><circle cx="1730" cy="543" r="2.7"/><circle cx="1739" cy="544" r="2.8"/><circle cx="1742" cy="544" r="3.2"/><circle cx="1733" cy="545" r="2.7"/><circle cx="1744" cy="545" r="2.7"/><circle cx="1746" cy="547" r="2.9"/><circle cx="1748" cy="548" r="3.2"/><circle cx="1745" cy="548" r="3.3"/><circle cx="520" cy="550" r="3.7"/><circle cx="1751" cy="550" r="2.0"/><circle cx="1758" cy="551" r="1.9"/><circle cx="1754" cy="551" r="2.7"/><circle cx="527" cy="552" r="3.4"/><circle cx="525" cy="552" r="4.8"/><circle cx="515" cy="552" r="2.5"/><circle cx="524" cy="553" r="2.3"/><circle cx="528" cy="553" r="3.6"/><circle cx="1748" cy="553" r="2.1"/><circle cx="505" cy="553" r="3.9"/><circle cx="1753" cy="553" r="2.4"/><circle cx="503" cy="554" r="2.9"/><circle cx="527" cy="554" r="4.9"/><circle cx="510" cy="554" r="2.8"/><circle cx="518" cy="554" r="2.5"/><circle cx="1760" cy="554" r="2.1"/><circle cx="1759" cy="554" r="2.1"/><circle cx="519" cy="557" r="5.2"/><circle cx="1759" cy="558" r="2.3"/><circle cx="489" cy="558" r="4.1"/><circle cx="1761" cy="559" r="1.9"/><circle cx="504" cy="560" r="4.5"/><circle cx="539" cy="560" r="4.8"/><circle cx="1768" cy="560" r="2.9"/><circle cx="540" cy="561" r="2.4"/><circle cx="1774" cy="561" r="2.9"/><circle cx="483" cy="561" r="3.7"/><circle cx="477" cy="561" r="2.3"/><circle cx="497" cy="561" r="4.4"/><circle cx="1762" cy="562" r="1.9"/><circle cx="481" cy="562" r="4.8"/><circle cx="543" cy="562" r="4.5"/><circle cx="474" cy="563" r="5.2"/><circle cx="1764" cy="563" r="3.1"/><circle cx="1772" cy="564" r="2.1"/><circle cx="1777" cy="564" r="2.7"/><circle cx="502" cy="564" r="4.0"/><circle cx="501" cy="565" r="4.2"/><circle cx="497" cy="565" r="4.7"/><circle cx="1767" cy="566" r="2.1"/><circle cx="528" cy="566" r="2.6"/><circle cx="501" cy="566" r="3.0"/><circle cx="472" cy="567" r="4.6"/><circle cx="523" cy="567" r="4.1"/><circle cx="1772" cy="568" r="2.7"/><circle cx="1785" cy="568" r="3.1"/><circle cx="1782" cy="568" r="2.8"/><circle cx="1779" cy="568" r="2.2"/><circle cx="1783" cy="568" r="2.4"/><circle cx="1775" cy="570" r="1.9"/><circle cx="1791" cy="570" r="2.2"/><circle cx="490" cy="571" r="3.9"/><circle cx="487" cy="571" r="4.2"/><circle cx="535" cy="571" r="2.5"/><circle cx="1792" cy="571" r="2.9"/><circle cx="1788" cy="572" r="2.6"/><circle cx="520" cy="572" r="3.0"/><circle cx="529" cy="572" r="4.1"/><circle cx="498" cy="572" r="2.6"/><circle cx="502" cy="573" r="5.0"/><circle cx="1785" cy="573" r="1.9"/><circle cx="536" cy="573" r="3.0"/><circle cx="471" cy="573" r="3.6"/><circle cx="472" cy="573" r="4.2"/><circle cx="482" cy="573" r="5.1"/><circle cx="471" cy="574" r="2.3"/><circle cx="470" cy="575" r="3.9"/><circle cx="1793" cy="575" r="3.2"/><circle cx="499" cy="575" r="3.0"/><circle cx="498" cy="575" r="4.6"/><circle cx="1796" cy="575" r="1.8"/><circle cx="520" cy="576" r="3.1"/><circle cx="537" cy="576" r="2.7"/><circle cx="479" cy="577" r="4.8"/><circle cx="514" cy="578" r="5.0"/><circle cx="467" cy="578" r="2.7"/><circle cx="474" cy="578" r="3.2"/><circle cx="504" cy="578" r="2.4"/><circle cx="517" cy="578" r="2.5"/><circle cx="1804" cy="579" r="1.9"/><circle cx="1807" cy="579" r="2.0"/><circle cx="519" cy="579" r="4.2"/><circle cx="507" cy="580" r="2.2"/><circle cx="502" cy="580" r="4.8"/><circle cx="469" cy="580" r="4.1"/><circle cx="1793" cy="580" r="3.2"/><circle cx="511" cy="580" r="4.5"/><circle cx="1797" cy="580" r="2.3"/><circle cx="1798" cy="581" r="2.9"/><circle cx="515" cy="582" r="4.9"/><circle cx="1808" cy="582" r="2.3"/><circle cx="1809" cy="583" r="2.8"/><circle cx="1799" cy="583" r="2.3"/><circle cx="1804" cy="584" r="2.9"/><circle cx="1814" cy="585" r="2.4"/><circle cx="499" cy="585" r="2.3"/><circle cx="495" cy="585" r="2.9"/><circle cx="1815" cy="586" r="1.7"/><circle cx="466" cy="587" r="3.5"/><circle cx="1820" cy="588" r="1.9"/><circle cx="1809" cy="588" r="2.7"/><circle cx="1825" cy="589" r="2.9"/><circle cx="1823" cy="589" r="3.3"/><circle cx="469" cy="589" r="4.5"/><circle cx="468" cy="589" r="4.9"/><circle cx="480" cy="589" r="3.8"/><circle cx="1828" cy="590" r="3.3"/><circle cx="489" cy="590" r="3.6"/><circle cx="1816" cy="591" r="2.2"/><circle cx="497" cy="591" r="4.0"/><circle cx="1816" cy="592" r="2.7"/><circle cx="1833" cy="593" r="2.9"/><circle cx="482" cy="594" r="2.9"/><circle cx="1823" cy="595" r="3.1"/><circle cx="483" cy="596" r="3.3"/><circle cx="1833" cy="597" r="3.3"/><circle cx="1482" cy="598" r="3.3"/><circle cx="1826" cy="598" r="2.9"/><circle cx="489" cy="598" r="3.9"/><circle cx="1829" cy="598" r="2.8"/><circle cx="492" cy="599" r="3.3"/><circle cx="1841" cy="599" r="1.8"/><circle cx="1488" cy="599" r="3.1"/><circle cx="1844" cy="599" r="2.9"/><circle cx="1833" cy="600" r="1.8"/><circle cx="1842" cy="601" r="2.0"/><circle cx="1846" cy="601" r="2.1"/><circle cx="1836" cy="602" r="2.1"/><circle cx="1487" cy="602" r="1.9"/><circle cx="1485" cy="603" r="3.2"/><circle cx="1849" cy="603" r="3.2"/><circle cx="1836" cy="604" r="2.8"/><circle cx="1847" cy="604" r="3.3"/><circle cx="1849" cy="606" r="2.3"/><circle cx="1483" cy="607" r="2.1"/><circle cx="1860" cy="607" r="2.2"/><circle cx="1485" cy="607" r="2.8"/><circle cx="1857" cy="608" r="2.3"/><circle cx="1852" cy="608" r="3.0"/><circle cx="1852" cy="609" r="2.7"/><circle cx="1486" cy="609" r="2.3"/><circle cx="1488" cy="610" r="1.8"/><circle cx="1865" cy="610" r="1.8"/><circle cx="1862" cy="610" r="2.5"/><circle cx="1854" cy="611" r="3.1"/><circle cx="1870" cy="613" r="2.5"/><circle cx="1859" cy="613" r="2.5"/><circle cx="1489" cy="613" r="2.5"/><circle cx="1872" cy="614" r="2.6"/><circle cx="1491" cy="614" r="2.5"/><circle cx="1865" cy="616" r="3.4"/><circle cx="1486" cy="617" r="2.7"/><circle cx="1876" cy="617" r="1.9"/><circle cx="1862" cy="617" r="3.0"/><circle cx="1880" cy="618" r="2.8"/><circle cx="1493" cy="618" r="2.7"/><circle cx="1869" cy="620" r="2.8"/><circle cx="1492" cy="620" r="1.9"/><circle cx="1493" cy="621" r="3.0"/><circle cx="1885" cy="621" r="3.1"/><circle cx="1875" cy="622" r="3.1"/><circle cx="1872" cy="622" r="2.8"/><circle cx="1886" cy="623" r="2.6"/><circle cx="1488" cy="624" r="2.4"/><circle cx="1879" cy="626" r="2.0"/><circle cx="1881" cy="626" r="3.0"/><circle cx="1491" cy="626" r="2.6"/><circle cx="1888" cy="626" r="2.8"/><circle cx="1894" cy="627" r="2.7"/><circle cx="1886" cy="628" r="2.1"/><circle cx="1491" cy="628" r="2.3"/><circle cx="1893" cy="628" r="2.5"/><circle cx="1904" cy="629" r="3.1"/><circle cx="1890" cy="629" r="3.2"/><circle cx="1495" cy="630" r="2.9"/><circle cx="1899" cy="631" r="2.0"/><circle cx="1894" cy="631" r="2.0"/><circle cx="1491" cy="633" r="2.2"/><circle cx="1906" cy="634" r="2.4"/><circle cx="1895" cy="634" r="1.9"/><circle cx="1490" cy="635" r="2.5"/><circle cx="1494" cy="635" r="3.3"/><circle cx="1498" cy="635" r="2.5"/><circle cx="1903" cy="636" r="2.6"/><circle cx="1909" cy="636" r="2.5"/><circle cx="1902" cy="636" r="2.4"/><circle cx="1911" cy="637" r="2.0"/><circle cx="1912" cy="638" r="2.5"/><circle cx="1906" cy="639" r="3.2"/><circle cx="1920" cy="640" r="2.8"/><circle cx="1493" cy="640" r="2.3"/><circle cx="1499" cy="641" r="1.9"/><circle cx="1498" cy="641" r="3.0"/><circle cx="1920" cy="642" r="2.7"/><circle cx="1496" cy="644" r="2.6"/><circle cx="1924" cy="644" r="2.9"/><circle cx="1912" cy="644" r="3.2"/><circle cx="1922" cy="644" r="3.2"/><circle cx="1927" cy="644" r="2.8"/><circle cx="1921" cy="645" r="2.8"/><circle cx="1914" cy="646" r="2.8"/><circle cx="1493" cy="647" r="2.3"/><circle cx="1500" cy="647" r="3.0"/><circle cx="1931" cy="648" r="3.2"/><circle cx="1933" cy="649" r="3.2"/><circle cx="1926" cy="649" r="2.4"/><circle cx="1935" cy="649" r="2.6"/><circle cx="1928" cy="650" r="2.4"/><circle cx="1501" cy="650" r="1.7"/><circle cx="1500" cy="652" r="3.4"/><circle cx="1934" cy="653" r="2.6"/><circle cx="1941" cy="653" r="2.4"/><circle cx="1498" cy="654" r="2.3"/><circle cx="1935" cy="655" r="1.9"/><circle cx="1945" cy="656" r="3.4"/><circle cx="1500" cy="656" r="2.3"/><circle cx="1937" cy="656" r="1.8"/><circle cx="1947" cy="657" r="3.1"/><circle cx="1503" cy="658" r="2.9"/><circle cx="1947" cy="658" r="3.3"/><circle cx="1941" cy="659" r="2.9"/><circle cx="1499" cy="659" r="2.4"/><circle cx="1952" cy="660" r="2.1"/><circle cx="1953" cy="660" r="2.7"/><circle cx="1504" cy="661" r="2.7"/><circle cx="1953" cy="663" r="2.9"/><circle cx="1498" cy="664" r="3.3"/><circle cx="1946" cy="664" r="1.9"/><circle cx="1504" cy="665" r="2.1"/><circle cx="1959" cy="666" r="3.0"/><circle cx="1503" cy="666" r="2.1"/><circle cx="1963" cy="667" r="2.3"/><circle cx="1956" cy="668" r="3.3"/><circle cx="1952" cy="669" r="2.8"/><circle cx="1501" cy="669" r="2.8"/><circle cx="1957" cy="671" r="2.9"/><circle cx="1507" cy="671" r="3.2"/><circle cx="1500" cy="672" r="2.1"/><circle cx="1962" cy="672" r="1.9"/><circle cx="1972" cy="673" r="1.7"/><circle cx="1508" cy="674" r="3.0"/><circle cx="1968" cy="674" r="3.1"/><circle cx="1960" cy="675" r="2.9"/><circle cx="1964" cy="675" r="1.9"/><circle cx="1508" cy="676" r="2.3"/><circle cx="1967" cy="676" r="2.1"/><circle cx="1976" cy="676" r="3.2"/><circle cx="1974" cy="676" r="2.9"/><circle cx="1981" cy="678" r="2.3"/><circle cx="1504" cy="679" r="2.0"/><circle cx="1970" cy="679" r="2.0"/><circle cx="1507" cy="680" r="2.5"/><circle cx="1984" cy="680" r="2.0"/><circle cx="1976" cy="682" r="3.1"/><circle cx="1979" cy="682" r="3.2"/><circle cx="1506" cy="682" r="2.1"/><circle cx="1986" cy="682" r="3.1"/><circle cx="1511" cy="683" r="3.0"/><circle cx="1513" cy="684" r="3.2"/><circle cx="1988" cy="685" r="2.1"/><circle cx="1983" cy="686" r="2.4"/><circle cx="1513" cy="686" r="1.7"/><circle cx="1991" cy="688" r="2.5"/><circle cx="1508" cy="689" r="1.7"/><circle cx="1984" cy="689" r="2.7"/><circle cx="1990" cy="689" r="1.8"/><circle cx="1515" cy="689" r="3.0"/><circle cx="1993" cy="689" r="2.3"/><circle cx="1515" cy="690" r="2.9"/><circle cx="1998" cy="690" r="2.8"/><circle cx="1993" cy="691" r="2.3"/><circle cx="1995" cy="691" r="3.4"/><circle cx="1515" cy="692" r="3.3"/><circle cx="2000" cy="692" r="2.6"/><circle cx="1517" cy="695" r="3.0"/><circle cx="2000" cy="696" r="2.6"/><circle cx="1512" cy="697" r="3.4"/><circle cx="1520" cy="697" r="2.6"/><circle cx="2008" cy="697" r="3.1"/><circle cx="2003" cy="699" r="3.2"/><circle cx="2005" cy="700" r="2.8"/><circle cx="1518" cy="700" r="1.9"/><circle cx="2001" cy="700" r="1.8"/><circle cx="2014" cy="703" r="1.8"/><circle cx="1514" cy="703" r="2.2"/><circle cx="2016" cy="703" r="3.4"/><circle cx="2009" cy="703" r="3.0"/><circle cx="1522" cy="703" r="2.5"/><circle cx="2011" cy="703" r="2.3"/><circle cx="2007" cy="704" r="2.9"/><circle cx="2017" cy="704" r="2.1"/><circle cx="1520" cy="705" r="2.0"/><circle cx="2019" cy="705" r="1.9"/><circle cx="2025" cy="706" r="2.2"/><circle cx="1523" cy="706" r="3.0"/><circle cx="1524" cy="708" r="2.3"/><circle cx="2021" cy="709" r="2.2"/><circle cx="2030" cy="709" r="2.0"/><circle cx="2017" cy="710" r="2.5"/><circle cx="2028" cy="711" r="3.3"/><circle cx="2023" cy="712" r="2.6"/><circle cx="1519" cy="712" r="2.3"/><circle cx="1519" cy="714" r="3.2"/><circle cx="1525" cy="714" r="2.0"/><circle cx="2032" cy="714" r="3.2"/><circle cx="1527" cy="714" r="1.8"/><circle cx="2035" cy="714" r="1.7"/><circle cx="2032" cy="715" r="3.2"/><circle cx="2037" cy="715" r="2.9"/><circle cx="2027" cy="717" r="2.3"/><circle cx="2038" cy="717" r="2.0"/><circle cx="1526" cy="718" r="2.6"/><circle cx="1529" cy="718" r="2.9"/><circle cx="1526" cy="722" r="2.6"/><circle cx="2038" cy="722" r="2.8"/><circle cx="1529" cy="725" r="2.2"/><circle cx="1524" cy="725" r="3.2"/><circle cx="1530" cy="728" r="1.9"/><circle cx="1526" cy="728" r="2.4"/><circle cx="1535" cy="729" r="2.7"/><circle cx="1534" cy="731" r="2.7"/><circle cx="1534" cy="732" r="2.0"/><circle cx="1538" cy="735" r="2.9"/><circle cx="1531" cy="736" r="3.0"/><circle cx="1535" cy="738" r="2.6"/><circle cx="1534" cy="741" r="1.7"/><circle cx="1536" cy="743" r="2.6"/><circle cx="1536" cy="745" r="2.1"/><circle cx="1539" cy="746" r="2.3"/><circle cx="1542" cy="746" r="2.6"/><circle cx="1541" cy="748" r="2.2"/><circle cx="1543" cy="749" r="2.1"/><circle cx="1546" cy="750" r="3.2"/><circle cx="1549" cy="752" r="1.9"/><circle cx="1544" cy="753" r="2.6"/><circle cx="1548" cy="756" r="2.6"/><circle cx="1547" cy="758" r="2.1"/><circle cx="1548" cy="759" r="2.5"/><circle cx="867" cy="759" r="3.0"/><circle cx="1556" cy="760" r="2.3"/><circle cx="858" cy="760" r="2.3"/><circle cx="846" cy="760" r="3.0"/><circle cx="864" cy="761" r="2.2"/><circle cx="1549" cy="762" r="3.2"/><circle cx="852" cy="762" r="2.8"/><circle cx="870" cy="762" r="2.7"/><circle cx="876" cy="762" r="2.2"/><circle cx="931" cy="763" r="3.4"/><circle cx="1556" cy="763" r="1.9"/><circle cx="937" cy="765" r="2.9"/><circle cx="1552" cy="765" r="1.9"/><circle cx="1559" cy="765" r="2.4"/><circle cx="1553" cy="767" r="2.6"/><circle cx="933" cy="770" r="3.1"/><circle cx="1558" cy="771" r="2.5"/><circle cx="952" cy="771" r="2.4"/><circle cx="1564" cy="772" r="2.3"/><circle cx="1558" cy="772" r="3.0"/><circle cx="1559" cy="772" r="2.3"/><circle cx="961" cy="773" r="4.1"/><circle cx="940" cy="773" r="3.1"/><circle cx="943" cy="774" r="3.0"/><circle cx="1923" cy="774" r="3.6"/><circle cx="955" cy="774" r="4.1"/><circle cx="1564" cy="774" r="1.7"/><circle cx="1926" cy="774" r="3.3"/><circle cx="937" cy="774" r="3.6"/><circle cx="950" cy="774" r="4.2"/><circle cx="944" cy="775" r="3.0"/><circle cx="1945" cy="775" r="3.6"/><circle cx="1943" cy="775" r="3.1"/><circle cx="958" cy="776" r="3.1"/><circle cx="946" cy="776" r="3.4"/><circle cx="1564" cy="776" r="1.8"/><circle cx="1929" cy="776" r="5.1"/><circle cx="1569" cy="778" r="3.1"/><circle cx="977" cy="778" r="2.4"/><circle cx="1952" cy="778" r="2.9"/><circle cx="1963" cy="778" r="4.8"/><circle cx="1564" cy="778" r="2.2"/><circle cx="1938" cy="779" r="3.4"/><circle cx="980" cy="779" r="2.4"/><circle cx="965" cy="779" r="3.3"/><circle cx="1926" cy="780" r="4.8"/><circle cx="963" cy="780" r="2.5"/><circle cx="971" cy="780" r="4.2"/><circle cx="1938" cy="780" r="3.1"/><circle cx="1964" cy="780" r="4.9"/><circle cx="971" cy="781" r="3.8"/><circle cx="1567" cy="781" r="3.2"/><circle cx="1570" cy="781" r="3.0"/><circle cx="1935" cy="782" r="4.3"/><circle cx="968" cy="782" r="3.9"/><circle cx="1958" cy="782" r="2.5"/><circle cx="1572" cy="783" r="1.8"/><circle cx="1958" cy="783" r="4.6"/><circle cx="990" cy="783" r="2.8"/><circle cx="1968" cy="784" r="5.0"/><circle cx="976" cy="784" r="2.8"/><circle cx="1573" cy="784" r="2.9"/><circle cx="1934" cy="784" r="2.5"/><circle cx="988" cy="784" r="2.2"/><circle cx="1933" cy="784" r="4.0"/><circle cx="1936" cy="785" r="4.5"/><circle cx="1960" cy="785" r="3.7"/><circle cx="996" cy="785" r="4.0"/><circle cx="1574" cy="786" r="2.8"/><circle cx="982" cy="786" r="2.4"/><circle cx="1954" cy="786" r="4.2"/><circle cx="1861" cy="787" r="3.3"/><circle cx="1961" cy="787" r="4.6"/><circle cx="990" cy="787" r="3.4"/><circle cx="1935" cy="787" r="4.5"/><circle cx="995" cy="787" r="3.6"/><circle cx="1577" cy="787" r="2.4"/><circle cx="1930" cy="788" r="5.2"/><circle cx="1865" cy="788" r="2.9"/><circle cx="980" cy="788" r="4.0"/><circle cx="1960" cy="788" r="2.6"/><circle cx="1860" cy="789" r="4.1"/><circle cx="1930" cy="789" r="2.6"/><circle cx="1949" cy="789" r="3.7"/><circle cx="997" cy="790" r="3.5"/><circle cx="1933" cy="790" r="4.3"/><circle cx="1961" cy="790" r="5.0"/><circle cx="1581" cy="791" r="1.8"/><circle cx="1574" cy="792" r="2.0"/><circle cx="1943" cy="792" r="3.3"/><circle cx="1845" cy="792" r="4.6"/><circle cx="1970" cy="792" r="2.6"/><circle cx="1856" cy="792" r="3.5"/><circle cx="1577" cy="792" r="2.3"/><circle cx="1925" cy="793" r="2.5"/><circle cx="1924" cy="793" r="4.3"/><circle cx="1582" cy="793" r="2.6"/><circle cx="1941" cy="793" r="3.5"/><circle cx="1858" cy="794" r="3.2"/><circle cx="1848" cy="794" r="3.2"/><circle cx="1844" cy="794" r="4.2"/><circle cx="1931" cy="795" r="2.6"/><circle cx="1845" cy="795" r="4.3"/><circle cx="997" cy="795" r="2.7"/><circle cx="1969" cy="795" r="4.4"/><circle cx="1859" cy="795" r="3.6"/><circle cx="1006" cy="795" r="2.3"/><circle cx="1843" cy="795" r="4.8"/><circle cx="1944" cy="795" r="4.2"/><circle cx="1944" cy="796" r="3.3"/><circle cx="1582" cy="796" r="2.5"/><circle cx="1948" cy="797" r="4.8"/><circle cx="1001" cy="797" r="2.3"/><circle cx="1000" cy="797" r="3.4"/><circle cx="1580" cy="797" r="3.0"/><circle cx="1956" cy="797" r="4.9"/><circle cx="1926" cy="797" r="2.6"/><circle cx="1961" cy="797" r="5.2"/><circle cx="1949" cy="797" r="2.9"/><circle cx="1020" cy="798" r="3.3"/><circle cx="1010" cy="798" r="3.5"/><circle cx="1841" cy="799" r="2.7"/><circle cx="1007" cy="800" r="3.5"/><circle cx="1583" cy="800" r="2.4"/><circle cx="1844" cy="800" r="2.9"/><circle cx="1930" cy="801" r="3.1"/><circle cx="1950" cy="801" r="3.0"/><circle cx="1587" cy="801" r="3.1"/><circle cx="1951" cy="801" r="3.6"/><circle cx="1584" cy="801" r="2.4"/><circle cx="1866" cy="801" r="2.7"/><circle cx="1849" cy="801" r="2.5"/><circle cx="1855" cy="802" r="2.6"/><circle cx="1965" cy="802" r="4.0"/><circle cx="1965" cy="802" r="2.4"/><circle cx="1935" cy="802" r="4.7"/><circle cx="1840" cy="802" r="2.4"/><circle cx="1018" cy="802" r="3.7"/><circle cx="1850" cy="802" r="4.0"/><circle cx="1847" cy="803" r="1.9"/><circle cx="1934" cy="803" r="3.1"/><circle cx="1969" cy="803" r="2.3"/><circle cx="1010" cy="803" r="4.4"/><circle cx="1845" cy="803" r="3.4"/><circle cx="1587" cy="804" r="2.4"/><circle cx="1595" cy="804" r="3.1"/><circle cx="1588" cy="804" r="2.6"/><circle cx="1021" cy="804" r="3.0"/><circle cx="1023" cy="804" r="2.8"/><circle cx="1969" cy="804" r="2.4"/><circle cx="1029" cy="805" r="3.8"/><circle cx="1950" cy="805" r="2.4"/><circle cx="1596" cy="805" r="3.0"/><circle cx="1842" cy="806" r="4.0"/><circle cx="1013" cy="806" r="2.9"/><circle cx="1858" cy="806" r="5.0"/><circle cx="1844" cy="806" r="2.2"/><circle cx="1951" cy="806" r="4.1"/><circle cx="1030" cy="806" r="3.4"/><circle cx="1840" cy="807" r="2.0"/><circle cx="1962" cy="807" r="2.2"/><circle cx="1590" cy="807" r="1.9"/><circle cx="1598" cy="807" r="2.9"/><circle cx="1845" cy="808" r="2.1"/><circle cx="1848" cy="808" r="2.0"/><circle cx="1039" cy="809" r="2.7"/><circle cx="1023" cy="809" r="3.4"/><circle cx="1839" cy="809" r="3.5"/><circle cx="1963" cy="809" r="2.9"/><circle cx="1597" cy="811" r="1.8"/><circle cx="1866" cy="811" r="5.0"/><circle cx="1845" cy="812" r="2.9"/><circle cx="1862" cy="812" r="3.0"/><circle cx="1598" cy="812" r="2.7"/><circle cx="1867" cy="812" r="4.6"/><circle cx="1047" cy="813" r="2.6"/><circle cx="1856" cy="813" r="3.7"/><circle cx="1042" cy="813" r="3.0"/><circle cx="1859" cy="813" r="4.3"/><circle cx="1601" cy="814" r="2.6"/><circle cx="1848" cy="814" r="4.0"/><circle cx="1844" cy="814" r="2.9"/><circle cx="1866" cy="815" r="4.3"/><circle cx="1838" cy="815" r="2.2"/><circle cx="1030" cy="815" r="3.9"/><circle cx="1868" cy="815" r="3.3"/><circle cx="1051" cy="816" r="2.4"/><circle cx="1847" cy="816" r="2.0"/><circle cx="1033" cy="816" r="3.8"/><circle cx="1597" cy="816" r="3.2"/><circle cx="1035" cy="817" r="3.8"/><circle cx="1866" cy="817" r="4.7"/><circle cx="1041" cy="817" r="4.4"/><circle cx="1603" cy="817" r="2.1"/><circle cx="1860" cy="817" r="3.1"/><circle cx="1843" cy="817" r="2.7"/><circle cx="1844" cy="817" r="2.5"/><circle cx="1861" cy="818" r="3.4"/><circle cx="1598" cy="818" r="2.2"/><circle cx="1856" cy="819" r="4.2"/><circle cx="1844" cy="819" r="3.8"/><circle cx="1848" cy="819" r="1.8"/><circle cx="1607" cy="819" r="2.2"/><circle cx="1847" cy="820" r="2.4"/><circle cx="1604" cy="821" r="2.6"/><circle cx="1851" cy="821" r="3.1"/><circle cx="1045" cy="822" r="4.0"/><circle cx="1061" cy="822" r="2.3"/><circle cx="1609" cy="823" r="1.8"/><circle cx="1853" cy="823" r="2.7"/><circle cx="1049" cy="823" r="3.3"/><circle cx="1840" cy="824" r="3.7"/><circle cx="1057" cy="824" r="3.3"/><circle cx="1071" cy="825" r="2.7"/><circle cx="1604" cy="825" r="3.2"/><circle cx="1849" cy="825" r="3.1"/><circle cx="1609" cy="825" r="2.5"/><circle cx="1054" cy="826" r="2.5"/><circle cx="1053" cy="826" r="4.0"/><circle cx="1853" cy="827" r="1.9"/><circle cx="1066" cy="827" r="3.8"/><circle cx="1609" cy="828" r="2.3"/><circle cx="1613" cy="828" r="3.3"/><circle cx="1615" cy="829" r="2.2"/><circle cx="1063" cy="829" r="4.3"/><circle cx="1853" cy="829" r="4.0"/><circle cx="1851" cy="830" r="1.9"/><circle cx="1073" cy="830" r="2.2"/><circle cx="1859" cy="830" r="2.3"/><circle cx="1851" cy="831" r="1.9"/><circle cx="1066" cy="832" r="4.1"/><circle cx="1852" cy="832" r="3.9"/><circle cx="1613" cy="832" r="2.7"/><circle cx="1079" cy="832" r="3.6"/><circle cx="1855" cy="832" r="2.1"/><circle cx="1615" cy="832" r="3.1"/><circle cx="1087" cy="834" r="3.5"/><circle cx="1084" cy="834" r="4.2"/><circle cx="1844" cy="834" r="4.3"/><circle cx="1853" cy="834" r="2.9"/><circle cx="1851" cy="835" r="2.5"/><circle cx="1073" cy="835" r="3.2"/><circle cx="1088" cy="836" r="3.2"/><circle cx="1082" cy="836" r="3.6"/><circle cx="1614" cy="836" r="3.1"/><circle cx="1852" cy="836" r="2.1"/><circle cx="1073" cy="837" r="3.4"/><circle cx="1617" cy="837" r="3.3"/><circle cx="1847" cy="837" r="3.7"/><circle cx="1094" cy="837" r="3.8"/><circle cx="1854" cy="838" r="4.4"/><circle cx="1854" cy="838" r="2.9"/><circle cx="1858" cy="838" r="4.3"/><circle cx="1845" cy="839" r="3.8"/><circle cx="1623" cy="840" r="2.7"/><circle cx="1847" cy="840" r="3.9"/><circle cx="1615" cy="840" r="1.8"/><circle cx="1845" cy="840" r="5.0"/><circle cx="1618" cy="840" r="1.8"/><circle cx="1850" cy="841" r="2.6"/><circle cx="1853" cy="841" r="2.0"/><circle cx="1090" cy="841" r="3.8"/><circle cx="1094" cy="841" r="3.1"/><circle cx="1855" cy="842" r="2.1"/><circle cx="1859" cy="842" r="3.0"/><circle cx="1104" cy="844" r="4.4"/><circle cx="1618" cy="844" r="2.7"/><circle cx="1622" cy="845" r="2.8"/><circle cx="1625" cy="845" r="2.1"/><circle cx="1096" cy="846" r="2.7"/><circle cx="1627" cy="846" r="3.3"/><circle cx="1111" cy="846" r="4.4"/><circle cx="1628" cy="847" r="1.9"/><circle cx="1856" cy="847" r="3.3"/><circle cx="1098" cy="847" r="3.3"/><circle cx="1106" cy="847" r="4.0"/><circle cx="1860" cy="847" r="2.2"/><circle cx="1116" cy="848" r="2.3"/><circle cx="1862" cy="848" r="2.7"/><circle cx="1862" cy="849" r="2.6"/><circle cx="1098" cy="849" r="3.5"/><circle cx="1630" cy="851" r="3.2"/><circle cx="1108" cy="851" r="3.8"/><circle cx="1631" cy="852" r="1.8"/><circle cx="1624" cy="853" r="2.4"/><circle cx="1633" cy="853" r="3.1"/><circle cx="1856" cy="853" r="3.2"/><circle cx="1863" cy="854" r="1.9"/><circle cx="1121" cy="854" r="2.5"/><circle cx="1633" cy="855" r="2.7"/><circle cx="1861" cy="856" r="2.3"/><circle cx="1128" cy="856" r="3.3"/><circle cx="1112" cy="857" r="2.7"/><circle cx="1134" cy="858" r="4.1"/><circle cx="1632" cy="858" r="2.0"/><circle cx="1865" cy="858" r="2.4"/><circle cx="1862" cy="859" r="3.0"/><circle cx="1119" cy="859" r="2.4"/><circle cx="1115" cy="859" r="3.6"/><circle cx="1635" cy="859" r="3.1"/><circle cx="1639" cy="860" r="2.3"/><circle cx="1138" cy="861" r="3.4"/><circle cx="1124" cy="861" r="2.6"/><circle cx="1865" cy="861" r="2.8"/><circle cx="1632" cy="862" r="3.4"/><circle cx="1865" cy="863" r="2.5"/><circle cx="1126" cy="863" r="4.2"/><circle cx="1639" cy="863" r="2.6"/><circle cx="1145" cy="864" r="4.0"/><circle cx="1638" cy="865" r="2.9"/><circle cx="1135" cy="865" r="4.0"/><circle cx="1139" cy="865" r="2.2"/><circle cx="1131" cy="866" r="3.3"/><circle cx="1863" cy="867" r="2.3"/><circle cx="1643" cy="867" r="3.3"/><circle cx="1148" cy="868" r="3.2"/><circle cx="1638" cy="868" r="1.9"/><circle cx="1869" cy="868" r="2.5"/><circle cx="1862" cy="868" r="3.3"/><circle cx="1152" cy="869" r="3.8"/><circle cx="1145" cy="869" r="2.5"/><circle cx="1868" cy="871" r="1.8"/><circle cx="1644" cy="871" r="3.0"/><circle cx="1163" cy="873" r="2.4"/><circle cx="1156" cy="873" r="3.9"/><circle cx="1639" cy="873" r="2.6"/><circle cx="1649" cy="874" r="1.9"/><circle cx="1864" cy="875" r="1.9"/><circle cx="1866" cy="875" r="2.2"/><circle cx="1641" cy="875" r="1.9"/><circle cx="1145" cy="876" r="3.4"/><circle cx="1866" cy="876" r="3.0"/><circle cx="1643" cy="877" r="2.7"/><circle cx="1156" cy="877" r="4.4"/><circle cx="1871" cy="877" r="2.4"/><circle cx="1152" cy="878" r="2.4"/><circle cx="1164" cy="879" r="3.1"/><circle cx="1645" cy="879" r="3.1"/><circle cx="1160" cy="880" r="3.5"/><circle cx="1865" cy="880" r="1.8"/><circle cx="1645" cy="881" r="1.8"/><circle cx="1867" cy="882" r="1.9"/><circle cx="1873" cy="882" r="2.0"/><circle cx="1166" cy="882" r="4.2"/><circle cx="1178" cy="882" r="4.3"/><circle cx="1647" cy="883" r="2.3"/><circle cx="1652" cy="884" r="2.1"/><circle cx="1650" cy="884" r="1.8"/><circle cx="1655" cy="884" r="3.0"/><circle cx="1657" cy="885" r="2.7"/><circle cx="1168" cy="885" r="4.2"/><circle cx="1171" cy="885" r="2.3"/><circle cx="1180" cy="886" r="2.9"/><circle cx="1868" cy="887" r="2.0"/><circle cx="1869" cy="888" r="2.4"/><circle cx="1182" cy="888" r="4.4"/><circle cx="1172" cy="888" r="3.2"/><circle cx="1654" cy="888" r="3.0"/><circle cx="1177" cy="888" r="2.8"/><circle cx="1874" cy="888" r="2.1"/><circle cx="1190" cy="889" r="3.1"/><circle cx="1660" cy="890" r="2.8"/><circle cx="1192" cy="890" r="4.2"/><circle cx="1657" cy="890" r="1.8"/><circle cx="1875" cy="891" r="2.1"/><circle cx="1200" cy="893" r="4.0"/><circle cx="1658" cy="893" r="2.3"/><circle cx="1195" cy="893" r="3.9"/><circle cx="1183" cy="894" r="3.9"/><circle cx="1870" cy="894" r="3.2"/><circle cx="1659" cy="895" r="2.0"/><circle cx="1869" cy="896" r="2.7"/><circle cx="1185" cy="896" r="3.9"/><circle cx="1874" cy="896" r="2.9"/><circle cx="1665" cy="897" r="3.2"/><circle cx="1658" cy="898" r="2.3"/><circle cx="1877" cy="898" r="2.0"/><circle cx="1199" cy="899" r="3.0"/><circle cx="1195" cy="900" r="4.0"/><circle cx="1660" cy="900" r="2.5"/><circle cx="1664" cy="900" r="2.6"/><circle cx="1209" cy="900" r="4.2"/><circle cx="1212" cy="900" r="4.2"/><circle cx="1878" cy="901" r="3.1"/><circle cx="1214" cy="901" r="3.8"/><circle cx="1204" cy="901" r="3.4"/><circle cx="1877" cy="902" r="2.1"/><circle cx="1665" cy="902" r="2.0"/><circle cx="1219" cy="902" r="3.2"/><circle cx="1201" cy="903" r="2.6"/><circle cx="1667" cy="904" r="2.3"/><circle cx="1668" cy="904" r="2.0"/><circle cx="1223" cy="905" r="2.8"/><circle cx="1670" cy="905" r="3.2"/><circle cx="1872" cy="905" r="2.0"/><circle cx="1878" cy="906" r="2.0"/><circle cx="1208" cy="907" r="2.4"/><circle cx="1234" cy="907" r="3.0"/><circle cx="1878" cy="908" r="2.0"/><circle cx="1219" cy="908" r="3.9"/><circle cx="1237" cy="910" r="3.3"/><circle cx="1222" cy="910" r="2.7"/><circle cx="1232" cy="910" r="2.4"/><circle cx="1667" cy="910" r="1.7"/><circle cx="1875" cy="910" r="3.2"/><circle cx="1672" cy="911" r="3.0"/><circle cx="1881" cy="911" r="3.0"/><circle cx="1676" cy="912" r="2.1"/><circle cx="1228" cy="912" r="3.5"/><circle cx="1671" cy="913" r="2.1"/><circle cx="1675" cy="913" r="2.6"/><circle cx="1223" cy="914" r="3.6"/><circle cx="1242" cy="914" r="2.4"/><circle cx="1875" cy="915" r="3.3"/><circle cx="1876" cy="916" r="3.1"/><circle cx="1679" cy="916" r="2.7"/><circle cx="1880" cy="916" r="2.3"/><circle cx="1242" cy="917" r="3.7"/><circle cx="1237" cy="917" r="2.8"/><circle cx="1673" cy="918" r="1.8"/><circle cx="1881" cy="919" r="1.9"/><circle cx="1248" cy="920" r="4.0"/><circle cx="1255" cy="920" r="2.6"/><circle cx="1677" cy="921" r="1.8"/><circle cx="1678" cy="921" r="3.4"/><circle cx="1243" cy="921" r="2.4"/><circle cx="1679" cy="922" r="2.9"/><circle cx="1258" cy="923" r="3.7"/><circle cx="1683" cy="923" r="3.1"/><circle cx="1246" cy="924" r="2.7"/><circle cx="1261" cy="924" r="4.4"/><circle cx="1250" cy="926" r="3.7"/><circle cx="1686" cy="927" r="2.9"/><circle cx="1266" cy="927" r="2.2"/><circle cx="1685" cy="927" r="2.4"/><circle cx="1680" cy="927" r="1.7"/><circle cx="1688" cy="929" r="2.3"/><circle cx="1257" cy="929" r="2.6"/><circle cx="1269" cy="930" r="4.3"/><circle cx="1688" cy="930" r="2.1"/><circle cx="1261" cy="931" r="3.5"/><circle cx="1275" cy="933" r="2.8"/><circle cx="1273" cy="933" r="3.0"/><circle cx="1684" cy="935" r="3.4"/><circle cx="1689" cy="935" r="2.5"/><circle cx="1277" cy="936" r="3.1"/><circle cx="1267" cy="936" r="2.5"/><circle cx="1280" cy="936" r="2.6"/><circle cx="1693" cy="937" r="2.8"/><circle cx="1289" cy="938" r="3.2"/><circle cx="1280" cy="938" r="3.0"/><circle cx="1688" cy="939" r="3.0"/><circle cx="1283" cy="941" r="4.1"/><circle cx="1293" cy="941" r="3.3"/><circle cx="1694" cy="941" r="2.0"/><circle cx="1691" cy="941" r="1.9"/><circle cx="1298" cy="942" r="3.0"/><circle cx="1295" cy="943" r="3.2"/><circle cx="1283" cy="943" r="4.1"/><circle cx="1289" cy="943" r="3.8"/><circle cx="1406" cy="944" r="4.2"/><circle cx="1694" cy="944" r="3.0"/><circle cx="1332" cy="945" r="4.9"/><circle cx="1693" cy="945" r="3.3"/><circle cx="1335" cy="946" r="3.0"/><circle cx="1301" cy="946" r="3.9"/><circle cx="1410" cy="946" r="3.6"/><circle cx="1334" cy="947" r="3.9"/><circle cx="1346" cy="947" r="3.8"/><circle cx="1319" cy="947" r="2.4"/><circle cx="1412" cy="947" r="2.5"/><circle cx="1406" cy="947" r="4.6"/><circle cx="1337" cy="947" r="4.7"/><circle cx="1695" cy="948" r="3.1"/><circle cx="1308" cy="948" r="4.3"/><circle cx="1317" cy="948" r="2.3"/><circle cx="1342" cy="948" r="3.9"/><circle cx="1697" cy="948" r="2.4"/><circle cx="1430" cy="949" r="5.0"/><circle cx="1309" cy="950" r="2.6"/><circle cx="1411" cy="950" r="5.0"/><circle cx="1417" cy="950" r="3.3"/><circle cx="1313" cy="951" r="4.6"/><circle cx="1313" cy="951" r="2.4"/><circle cx="1697" cy="951" r="3.2"/><circle cx="1440" cy="951" r="2.3"/><circle cx="1704" cy="951" r="3.3"/><circle cx="1318" cy="951" r="3.2"/><circle cx="1442" cy="952" r="4.8"/><circle cx="1366" cy="952" r="4.1"/><circle cx="1349" cy="952" r="3.9"/><circle cx="1297" cy="952" r="3.4"/><circle cx="1696" cy="952" r="2.6"/><circle cx="1550" cy="953" r="3.1"/><circle cx="1367" cy="953" r="3.8"/><circle cx="1325" cy="953" r="5.1"/><circle cx="1450" cy="953" r="2.5"/><circle cx="1552" cy="953" r="1.8"/><circle cx="1540" cy="953" r="3.3"/><circle cx="1704" cy="953" r="3.1"/><circle cx="1318" cy="953" r="3.7"/><circle cx="1356" cy="953" r="2.5"/><circle cx="1321" cy="954" r="4.4"/><circle cx="1572" cy="954" r="3.3"/><circle cx="1532" cy="954" r="2.8"/><circle cx="1705" cy="954" r="2.5"/><circle cx="1555" cy="954" r="2.5"/><circle cx="1548" cy="954" r="1.9"/><circle cx="1302" cy="954" r="4.3"/><circle cx="1591" cy="954" r="3.3"/><circle cx="1624" cy="954" r="3.3"/><circle cx="1362" cy="954" r="2.5"/><circle cx="1315" cy="954" r="5.2"/><circle cx="1604" cy="954" r="2.8"/><circle cx="1625" cy="954" r="1.8"/><circle cx="1535" cy="954" r="3.1"/><circle cx="1579" cy="954" r="3.0"/><circle cx="1582" cy="954" r="3.2"/><circle cx="1322" cy="954" r="2.9"/><circle cx="1422" cy="954" r="3.9"/><circle cx="1636" cy="954" r="2.0"/><circle cx="1545" cy="954" r="3.0"/><circle cx="1328" cy="954" r="2.7"/><circle cx="1599" cy="955" r="1.7"/><circle cx="1615" cy="955" r="2.7"/><circle cx="1632" cy="955" r="2.4"/><circle cx="1618" cy="955" r="2.7"/><circle cx="1303" cy="955" r="3.9"/><circle cx="1614" cy="955" r="2.1"/><circle cx="1569" cy="955" r="3.3"/><circle cx="1586" cy="955" r="2.9"/><circle cx="1607" cy="955" r="2.4"/><circle cx="1324" cy="955" r="2.2"/><circle cx="1622" cy="955" r="3.1"/><circle cx="1454" cy="955" r="3.6"/><circle cx="1576" cy="955" r="1.9"/><circle cx="1611" cy="956" r="2.9"/><circle cx="1339" cy="956" r="4.0"/><circle cx="1369" cy="956" r="2.8"/><circle cx="1584" cy="956" r="2.3"/><circle cx="1566" cy="956" r="2.4"/><circle cx="1635" cy="956" r="2.0"/><circle cx="1351" cy="956" r="2.8"/><circle cx="1606" cy="956" r="2.7"/><circle cx="1443" cy="956" r="4.3"/><circle cx="1330" cy="956" r="3.8"/><circle cx="1563" cy="956" r="3.1"/><circle cx="1610" cy="956" r="1.9"/><circle cx="1451" cy="956" r="4.1"/><circle cx="1588" cy="956" r="2.6"/><circle cx="1542" cy="956" r="2.8"/><circle cx="1573" cy="956" r="2.4"/><circle cx="1558" cy="956" r="3.2"/><circle cx="1603" cy="956" r="3.3"/><circle cx="1531" cy="956" r="3.0"/><circle cx="1593" cy="957" r="3.1"/><circle cx="1416" cy="957" r="2.3"/><circle cx="1640" cy="957" r="3.4"/><circle cx="1704" cy="957" r="3.2"/><circle cx="1568" cy="957" r="2.1"/><circle cx="1638" cy="957" r="2.0"/><circle cx="1533" cy="957" r="1.9"/><circle cx="1537" cy="957" r="3.1"/><circle cx="1556" cy="957" r="3.3"/><circle cx="1526" cy="957" r="3.0"/><circle cx="1340" cy="957" r="3.0"/><circle cx="1523" cy="957" r="2.4"/><circle cx="1542" cy="958" r="2.6"/><circle cx="1643" cy="958" r="1.9"/><circle cx="1527" cy="958" r="3.1"/><circle cx="1629" cy="958" r="3.4"/><circle cx="1547" cy="958" r="2.1"/><circle cx="1439" cy="958" r="5.1"/><circle cx="1627" cy="958" r="1.9"/><circle cx="1577" cy="958" r="3.0"/><circle cx="1562" cy="958" r="2.7"/><circle cx="1646" cy="958" r="2.9"/><circle cx="1560" cy="958" r="2.9"/><circle cx="1620" cy="958" r="2.9"/><circle cx="1421" cy="958" r="4.4"/><circle cx="1435" cy="958" r="4.1"/><circle cx="1310" cy="958" r="3.2"/><circle cx="1630" cy="958" r="2.1"/><circle cx="1597" cy="958" r="2.3"/><circle cx="1315" cy="958" r="4.7"/><circle cx="1440" cy="959" r="2.3"/><circle cx="1585" cy="959" r="2.0"/><circle cx="1594" cy="959" r="2.6"/><circle cx="1600" cy="959" r="3.2"/><circle cx="1349" cy="959" r="3.8"/><circle cx="1333" cy="959" r="4.0"/><circle cx="1380" cy="959" r="2.5"/><circle cx="1362" cy="959" r="3.0"/><circle cx="1460" cy="959" r="2.4"/><circle cx="1315" cy="960" r="4.8"/><circle cx="1322" cy="960" r="4.8"/><circle cx="1642" cy="960" r="2.5"/><circle cx="1325" cy="960" r="2.3"/><circle cx="1371" cy="960" r="3.1"/><circle cx="1704" cy="960" r="2.4"/><circle cx="1349" cy="960" r="3.7"/><circle cx="1331" cy="960" r="3.8"/><circle cx="1414" cy="961" r="3.7"/><circle cx="1459" cy="961" r="4.4"/><circle cx="1416" cy="961" r="2.6"/><circle cx="1328" cy="961" r="3.5"/><circle cx="1311" cy="961" r="4.4"/><circle cx="1338" cy="961" r="4.3"/><circle cx="1388" cy="961" r="2.8"/><circle cx="1378" cy="962" r="3.9"/><circle cx="1357" cy="962" r="3.8"/><circle cx="1321" cy="962" r="2.9"/><circle cx="1704" cy="962" r="2.9"/><circle cx="1646" cy="962" r="2.3"/><circle cx="1313" cy="963" r="4.2"/><circle cx="1647" cy="963" r="2.9"/><circle cx="1326" cy="963" r="3.4"/><circle cx="1341" cy="963" r="2.3"/><circle cx="1707" cy="963" r="3.1"/><circle cx="1305" cy="964" r="3.1"/><circle cx="1326" cy="964" r="2.6"/><circle cx="1344" cy="964" r="2.6"/><circle cx="1649" cy="964" r="3.2"/><circle cx="1705" cy="964" r="2.4"/><circle cx="1349" cy="964" r="4.3"/><circle cx="1420" cy="964" r="3.7"/><circle cx="1431" cy="964" r="2.7"/><circle cx="1312" cy="964" r="4.2"/><circle cx="1370" cy="964" r="3.2"/><circle cx="1714" cy="965" r="2.5"/><circle cx="1709" cy="965" r="3.1"/><circle cx="1384" cy="965" r="3.2"/><circle cx="1328" cy="965" r="2.5"/><circle cx="1354" cy="965" r="4.4"/><circle cx="1347" cy="966" r="4.0"/><circle cx="1650" cy="966" r="3.1"/><circle cx="1714" cy="966" r="3.1"/><circle cx="1369" cy="966" r="3.3"/><circle cx="1320" cy="966" r="4.4"/><circle cx="1337" cy="966" r="4.2"/><circle cx="1333" cy="966" r="4.1"/><circle cx="1305" cy="967" r="5.1"/><circle cx="1315" cy="967" r="4.2"/><circle cx="1338" cy="967" r="2.6"/><circle cx="1431" cy="967" r="2.6"/><circle cx="1421" cy="967" r="5.0"/><circle cx="1414" cy="967" r="2.7"/><circle cx="1392" cy="968" r="3.8"/><circle cx="1309" cy="968" r="2.5"/><circle cx="1352" cy="968" r="3.3"/><circle cx="1336" cy="968" r="4.2"/><circle cx="1393" cy="968" r="4.2"/><circle cx="1368" cy="968" r="5.0"/><circle cx="1334" cy="968" r="2.6"/><circle cx="1334" cy="969" r="4.0"/><circle cx="1649" cy="969" r="2.8"/><circle cx="1380" cy="969" r="2.8"/><circle cx="1351" cy="969" r="2.8"/><circle cx="1370" cy="969" r="2.9"/><circle cx="1418" cy="969" r="2.3"/><circle cx="1314" cy="970" r="4.6"/><circle cx="1345" cy="970" r="4.3"/><circle cx="1316" cy="970" r="4.0"/><circle cx="1715" cy="970" r="2.3"/><circle cx="1329" cy="970" r="2.8"/><circle cx="1712" cy="970" r="2.5"/><circle cx="1422" cy="970" r="4.4"/><circle cx="1346" cy="970" r="2.2"/><circle cx="1358" cy="971" r="4.4"/><circle cx="1650" cy="971" r="2.4"/><circle cx="1346" cy="971" r="2.2"/><circle cx="1462" cy="971" r="3.5"/><circle cx="1395" cy="971" r="2.4"/><circle cx="1422" cy="972" r="3.5"/><circle cx="1360" cy="972" r="4.3"/><circle cx="1366" cy="972" r="3.0"/><circle cx="1650" cy="972" r="2.8"/><circle cx="1458" cy="972" r="4.5"/><circle cx="1368" cy="973" r="2.7"/><circle cx="1400" cy="973" r="3.8"/><circle cx="1425" cy="973" r="2.3"/><circle cx="1717" cy="973" r="2.9"/><circle cx="1315" cy="973" r="4.8"/><circle cx="1329" cy="973" r="4.1"/><circle cx="1349" cy="973" r="3.0"/><circle cx="1376" cy="973" r="3.5"/><circle cx="1346" cy="974" r="2.8"/><circle cx="1449" cy="974" r="4.6"/><circle cx="1363" cy="974" r="5.0"/><circle cx="1344" cy="974" r="3.8"/><circle cx="1412" cy="974" r="2.8"/><circle cx="1714" cy="974" r="2.2"/><circle cx="1355" cy="974" r="2.7"/><circle cx="1342" cy="974" r="2.9"/><circle cx="1361" cy="974" r="3.0"/><circle cx="1414" cy="974" r="4.9"/><circle cx="1441" cy="975" r="2.9"/><circle cx="1436" cy="975" r="2.6"/><circle cx="1432" cy="975" r="4.4"/><circle cx="1370" cy="975" r="4.3"/><circle cx="1334" cy="975" r="3.0"/><circle cx="1361" cy="975" r="4.2"/><circle cx="1649" cy="975" r="1.9"/><circle cx="1393" cy="976" r="2.5"/><circle cx="1408" cy="976" r="3.8"/><circle cx="1368" cy="976" r="3.1"/><circle cx="1373" cy="976" r="2.5"/><circle cx="1401" cy="976" r="3.0"/><circle cx="1350" cy="976" r="3.3"/><circle cx="1369" cy="976" r="3.2"/><circle cx="1650" cy="976" r="3.0"/><circle cx="1716" cy="977" r="3.1"/><circle cx="1386" cy="977" r="4.1"/><circle cx="1414" cy="977" r="3.9"/><circle cx="1410" cy="977" r="4.6"/><circle cx="1402" cy="977" r="4.3"/><circle cx="1457" cy="977" r="3.3"/><circle cx="1342" cy="978" r="5.2"/><circle cx="1716" cy="978" r="1.8"/><circle cx="1421" cy="978" r="5.2"/><circle cx="1652" cy="978" r="2.3"/><circle cx="1335" cy="978" r="4.6"/><circle cx="1721" cy="978" r="2.2"/><circle cx="1418" cy="978" r="4.2"/><circle cx="1388" cy="979" r="2.9"/><circle cx="1346" cy="979" r="3.8"/><circle cx="1427" cy="979" r="5.0"/><circle cx="1345" cy="979" r="2.6"/><circle cx="1458" cy="979" r="4.6"/><circle cx="1367" cy="979" r="4.4"/><circle cx="1656" cy="980" r="3.2"/><circle cx="1385" cy="980" r="2.6"/><circle cx="1363" cy="980" r="4.0"/><circle cx="1453" cy="980" r="3.1"/><circle cx="1466" cy="980" r="4.1"/><circle cx="1653" cy="980" r="2.4"/><circle cx="1363" cy="980" r="2.2"/><circle cx="1407" cy="981" r="4.8"/><circle cx="1721" cy="981" r="2.1"/><circle cx="1464" cy="981" r="5.0"/><circle cx="1377" cy="981" r="4.1"/><circle cx="1410" cy="982" r="2.8"/><circle cx="1369" cy="982" r="2.5"/><circle cx="1388" cy="982" r="4.2"/><circle cx="1658" cy="982" r="2.2"/><circle cx="1345" cy="982" r="4.6"/><circle cx="1338" cy="982" r="2.2"/><circle cx="1425" cy="982" r="3.0"/><circle cx="1356" cy="983" r="3.6"/><circle cx="1376" cy="983" r="5.2"/><circle cx="1350" cy="983" r="3.5"/><circle cx="1351" cy="983" r="2.7"/><circle cx="1721" cy="984" r="3.2"/><circle cx="1424" cy="984" r="3.7"/><circle cx="1722" cy="984" r="3.3"/><circle cx="1392" cy="984" r="3.1"/><circle cx="1389" cy="984" r="2.5"/><circle cx="1347" cy="984" r="4.4"/><circle cx="1656" cy="985" r="2.3"/><circle cx="1403" cy="985" r="4.7"/><circle cx="1344" cy="985" r="3.6"/><circle cx="1415" cy="985" r="4.8"/><circle cx="1364" cy="986" r="3.7"/><circle cx="1375" cy="986" r="4.5"/><circle cx="1379" cy="986" r="2.7"/><circle cx="1442" cy="986" r="4.3"/><circle cx="1727" cy="986" r="2.6"/><circle cx="1727" cy="986" r="3.3"/><circle cx="1373" cy="987" r="4.8"/><circle cx="1658" cy="987" r="2.6"/><circle cx="1430" cy="987" r="2.3"/><circle cx="1354" cy="987" r="2.8"/><circle cx="1436" cy="988" r="4.9"/><circle cx="1427" cy="988" r="3.8"/><circle cx="1720" cy="988" r="2.0"/><circle cx="1375" cy="988" r="4.4"/><circle cx="1506" cy="989" r="3.1"/><circle cx="1400" cy="989" r="4.3"/><circle cx="1426" cy="989" r="2.7"/><circle cx="1381" cy="989" r="3.5"/><circle cx="1657" cy="989" r="2.5"/><circle cx="1659" cy="989" r="2.7"/><circle cx="1497" cy="990" r="4.7"/><circle cx="1379" cy="990" r="5.0"/><circle cx="1730" cy="990" r="2.6"/><circle cx="1359" cy="990" r="5.2"/><circle cx="1403" cy="990" r="2.8"/><circle cx="1429" cy="990" r="4.6"/><circle cx="1726" cy="990" r="3.3"/><circle cx="1501" cy="990" r="4.8"/><circle cx="1450" cy="991" r="3.3"/><circle cx="1698" cy="991" r="3.3"/><circle cx="1730" cy="991" r="2.9"/><circle cx="1359" cy="991" r="2.6"/><circle cx="1701" cy="991" r="2.7"/><circle cx="1366" cy="991" r="2.8"/><circle cx="1721" cy="992" r="2.5"/><circle cx="1724" cy="992" r="2.1"/><circle cx="1661" cy="992" r="2.3"/><circle cx="1375" cy="992" r="3.3"/><circle cx="1510" cy="992" r="4.8"/><circle cx="1444" cy="992" r="3.6"/><circle cx="1408" cy="992" r="3.6"/><circle cx="1419" cy="992" r="2.8"/><circle cx="1526" cy="992" r="4.3"/><circle cx="1538" cy="992" r="3.7"/><circle cx="1531" cy="992" r="4.3"/><circle cx="1392" cy="992" r="3.4"/><circle cx="1703" cy="993" r="2.0"/><circle cx="1726" cy="993" r="1.9"/><circle cx="1661" cy="993" r="3.3"/><circle cx="1394" cy="993" r="3.6"/><circle cx="1461" cy="993" r="2.7"/><circle cx="1457" cy="993" r="3.6"/><circle cx="1435" cy="994" r="3.9"/><circle cx="1396" cy="994" r="3.9"/><circle cx="1501" cy="994" r="2.5"/><circle cx="1521" cy="994" r="4.6"/><circle cx="1729" cy="994" r="2.3"/><circle cx="1700" cy="994" r="2.6"/><circle cx="1537" cy="994" r="3.0"/><circle cx="1383" cy="994" r="4.8"/><circle cx="1524" cy="994" r="3.2"/><circle cx="1420" cy="994" r="4.8"/><circle cx="1662" cy="995" r="2.3"/><circle cx="1501" cy="995" r="3.0"/><circle cx="1378" cy="995" r="3.2"/><circle cx="1464" cy="995" r="2.4"/><circle cx="1702" cy="995" r="2.8"/><circle cx="1498" cy="995" r="3.3"/><circle cx="1732" cy="995" r="1.8"/><circle cx="1402" cy="996" r="2.4"/><circle cx="1465" cy="996" r="3.0"/><circle cx="1433" cy="996" r="2.6"/><circle cx="1729" cy="996" r="3.4"/><circle cx="1382" cy="996" r="3.9"/><circle cx="1527" cy="996" r="3.3"/><circle cx="1380" cy="996" r="4.7"/><circle cx="1729" cy="996" r="2.5"/><circle cx="1484" cy="997" r="5.0"/><circle cx="1664" cy="997" r="2.9"/><circle cx="1460" cy="997" r="2.9"/><circle cx="1489" cy="997" r="3.8"/><circle cx="1555" cy="997" r="3.9"/><circle cx="1388" cy="997" r="3.3"/><circle cx="1491" cy="997" r="3.0"/><circle cx="1510" cy="997" r="4.2"/><circle cx="1445" cy="997" r="4.2"/><circle cx="1728" cy="997" r="3.1"/><circle cx="1727" cy="997" r="2.8"/><circle cx="1402" cy="998" r="4.7"/><circle cx="1554" cy="998" r="3.4"/><circle cx="1502" cy="998" r="4.7"/><circle cx="1542" cy="998" r="4.7"/><circle cx="1740" cy="998" r="2.9"/><circle cx="1733" cy="998" r="2.8"/><circle cx="1520" cy="998" r="4.6"/><circle cx="1537" cy="998" r="2.3"/><circle cx="1736" cy="999" r="2.9"/><circle cx="1434" cy="999" r="4.3"/><circle cx="1501" cy="999" r="3.2"/><circle cx="1416" cy="999" r="4.8"/><circle cx="1425" cy="999" r="2.2"/><circle cx="1497" cy="999" r="4.2"/><circle cx="1734" cy="999" r="2.6"/><circle cx="1394" cy="999" r="3.8"/><circle cx="1426" cy="1000" r="4.6"/><circle cx="1514" cy="1000" r="4.2"/><circle cx="1540" cy="1000" r="4.9"/><circle cx="1732" cy="1000" r="2.3"/><circle cx="1382" cy="1000" r="4.8"/><circle cx="1485" cy="1001" r="4.0"/><circle cx="1383" cy="1001" r="4.1"/><circle cx="1699" cy="1001" r="2.9"/><circle cx="1500" cy="1001" r="4.3"/><circle cx="1407" cy="1001" r="3.0"/><circle cx="1381" cy="1002" r="4.4"/><circle cx="1537" cy="1002" r="2.2"/><circle cx="1382" cy="1002" r="3.3"/><circle cx="1443" cy="1002" r="4.6"/><circle cx="1479" cy="1002" r="2.5"/><circle cx="1434" cy="1002" r="5.0"/><circle cx="1699" cy="1002" r="2.8"/><circle cx="1429" cy="1002" r="4.3"/><circle cx="1467" cy="1002" r="2.3"/><circle cx="1534" cy="1003" r="4.9"/><circle cx="1392" cy="1003" r="2.9"/><circle cx="1411" cy="1003" r="2.5"/><circle cx="1521" cy="1003" r="4.8"/><circle cx="1432" cy="1003" r="4.2"/><circle cx="1443" cy="1003" r="3.6"/><circle cx="1477" cy="1003" r="2.8"/><circle cx="1410" cy="1003" r="5.1"/><circle cx="1431" cy="1003" r="3.5"/><circle cx="1514" cy="1003" r="2.8"/><circle cx="1710" cy="1003" r="2.6"/><circle cx="1485" cy="1003" r="3.7"/><circle cx="1731" cy="1003" r="2.5"/><circle cx="1405" cy="1004" r="5.1"/><circle cx="1704" cy="1004" r="2.2"/><circle cx="1701" cy="1004" r="2.8"/><circle cx="1532" cy="1004" r="2.7"/><circle cx="1478" cy="1004" r="4.9"/><circle cx="1507" cy="1004" r="3.5"/><circle cx="1397" cy="1004" r="3.7"/><circle cx="1483" cy="1004" r="2.2"/><circle cx="1552" cy="1004" r="3.9"/><circle cx="1503" cy="1004" r="4.6"/><circle cx="1495" cy="1004" r="4.3"/><circle cx="1733" cy="1004" r="2.4"/><circle cx="1709" cy="1004" r="3.4"/><circle cx="1538" cy="1004" r="3.2"/><circle cx="1739" cy="1004" r="2.0"/><circle cx="1744" cy="1005" r="3.2"/><circle cx="1732" cy="1005" r="1.8"/><circle cx="1441" cy="1005" r="2.4"/><circle cx="1494" cy="1005" r="4.2"/><circle cx="1492" cy="1005" r="2.4"/><circle cx="1478" cy="1005" r="3.7"/><circle cx="1735" cy="1006" r="2.6"/><circle cx="1543" cy="1006" r="3.1"/><circle cx="1452" cy="1006" r="4.9"/><circle cx="1415" cy="1006" r="4.4"/><circle cx="1740" cy="1006" r="1.9"/><circle cx="1489" cy="1006" r="4.3"/><circle cx="1741" cy="1006" r="1.7"/><circle cx="1748" cy="1007" r="3.2"/><circle cx="1508" cy="1007" r="4.8"/><circle cx="1546" cy="1007" r="5.2"/><circle cx="1401" cy="1007" r="3.4"/><circle cx="1428" cy="1007" r="3.7"/><circle cx="1469" cy="1007" r="3.2"/><circle cx="1465" cy="1007" r="5.2"/><circle cx="1735" cy="1007" r="3.2"/><circle cx="1741" cy="1007" r="3.3"/><circle cx="1454" cy="1008" r="2.8"/><circle cx="1708" cy="1008" r="1.9"/><circle cx="1492" cy="1008" r="2.9"/><circle cx="1444" cy="1008" r="2.3"/><circle cx="1587" cy="1008" r="4.9"/><circle cx="1403" cy="1008" r="4.5"/><circle cx="1752" cy="1008" r="2.6"/><circle cx="1439" cy="1009" r="2.4"/><circle cx="1492" cy="1009" r="4.1"/><circle cx="1505" cy="1009" r="4.6"/><circle cx="1557" cy="1009" r="3.6"/><circle cx="1595" cy="1009" r="2.4"/><circle cx="1470" cy="1009" r="3.9"/><circle cx="1555" cy="1009" r="4.4"/><circle cx="1737" cy="1009" r="1.8"/><circle cx="1423" cy="1009" r="4.8"/><circle cx="1489" cy="1010" r="2.4"/><circle cx="1580" cy="1010" r="4.3"/><circle cx="1472" cy="1010" r="4.5"/><circle cx="1743" cy="1010" r="2.7"/><circle cx="1527" cy="1010" r="3.1"/><circle cx="1581" cy="1010" r="3.9"/><circle cx="1744" cy="1010" r="2.4"/><circle cx="1609" cy="1011" r="5.0"/><circle cx="1607" cy="1011" r="2.2"/><circle cx="1753" cy="1011" r="2.3"/><circle cx="1715" cy="1011" r="1.8"/><circle cx="1420" cy="1011" r="3.4"/><circle cx="1462" cy="1011" r="4.3"/><circle cx="1438" cy="1011" r="3.3"/><circle cx="1495" cy="1011" r="3.9"/><circle cx="1708" cy="1011" r="2.9"/><circle cx="1566" cy="1011" r="3.8"/><circle cx="1609" cy="1011" r="3.2"/><circle cx="1431" cy="1011" r="3.2"/><circle cx="1488" cy="1011" r="3.7"/><circle cx="1487" cy="1011" r="3.8"/><circle cx="1749" cy="1011" r="3.3"/><circle cx="1490" cy="1011" r="3.8"/><circle cx="1598" cy="1012" r="5.1"/><circle cx="1449" cy="1012" r="2.8"/><circle cx="1404" cy="1012" r="3.5"/><circle cx="1746" cy="1012" r="2.7"/><circle cx="1432" cy="1012" r="5.1"/><circle cx="1504" cy="1012" r="3.8"/><circle cx="1495" cy="1012" r="2.5"/><circle cx="1431" cy="1012" r="4.3"/><circle cx="1501" cy="1013" r="3.3"/><circle cx="1417" cy="1013" r="4.7"/><circle cx="1551" cy="1014" r="4.3"/><circle cx="1600" cy="1014" r="2.7"/><circle cx="1717" cy="1014" r="2.4"/><circle cx="1488" cy="1014" r="4.6"/><circle cx="1490" cy="1014" r="3.2"/><circle cx="1593" cy="1014" r="4.2"/><circle cx="1602" cy="1014" r="4.5"/><circle cx="1753" cy="1014" r="2.1"/><circle cx="1424" cy="1014" r="4.2"/><circle cx="1755" cy="1014" r="2.6"/><circle cx="1581" cy="1014" r="4.4"/><circle cx="1502" cy="1014" r="2.9"/><circle cx="1461" cy="1014" r="4.7"/><circle cx="1439" cy="1014" r="4.3"/><circle cx="1707" cy="1014" r="2.9"/><circle cx="1450" cy="1014" r="3.4"/><circle cx="1452" cy="1014" r="3.6"/><circle cx="1435" cy="1015" r="2.9"/><circle cx="1424" cy="1015" r="3.3"/><circle cx="1759" cy="1015" r="3.0"/><circle cx="1556" cy="1015" r="2.4"/><circle cx="1490" cy="1015" r="3.5"/><circle cx="1742" cy="1015" r="2.2"/><circle cx="1745" cy="1015" r="2.6"/><circle cx="1438" cy="1015" r="4.6"/><circle cx="1459" cy="1015" r="2.7"/><circle cx="1466" cy="1015" r="4.7"/><circle cx="1588" cy="1015" r="4.4"/><circle cx="1434" cy="1016" r="4.0"/><circle cx="1510" cy="1016" r="4.7"/><circle cx="1496" cy="1016" r="4.4"/><circle cx="1464" cy="1016" r="4.1"/><circle cx="1597" cy="1016" r="3.8"/><circle cx="1600" cy="1016" r="2.8"/><circle cx="1478" cy="1016" r="2.2"/><circle cx="1444" cy="1016" r="4.9"/><circle cx="1604" cy="1016" r="3.4"/><circle cx="1479" cy="1017" r="4.5"/><circle cx="1755" cy="1017" r="2.0"/><circle cx="1709" cy="1017" r="2.2"/><circle cx="1540" cy="1017" r="2.3"/><circle cx="1456" cy="1017" r="3.3"/><circle cx="1447" cy="1017" r="3.0"/><circle cx="1717" cy="1017" r="2.0"/><circle cx="1418" cy="1017" r="4.5"/><circle cx="1532" cy="1017" r="5.2"/><circle cx="1445" cy="1018" r="2.5"/><circle cx="1512" cy="1018" r="3.4"/><circle cx="1468" cy="1018" r="3.9"/><circle cx="1764" cy="1018" r="2.4"/><circle cx="1577" cy="1018" r="2.9"/><circle cx="1454" cy="1018" r="3.3"/><circle cx="1611" cy="1018" r="5.2"/><circle cx="1462" cy="1018" r="2.3"/><circle cx="1585" cy="1018" r="3.1"/><circle cx="1447" cy="1018" r="3.1"/><circle cx="1444" cy="1019" r="4.8"/><circle cx="1714" cy="1019" r="3.1"/><circle cx="1422" cy="1019" r="4.9"/><circle cx="1494" cy="1019" r="3.0"/><circle cx="1465" cy="1019" r="2.3"/><circle cx="1741" cy="1019" r="2.8"/><circle cx="1437" cy="1019" r="3.3"/><circle cx="1545" cy="1019" r="2.3"/><circle cx="1720" cy="1019" r="3.3"/><circle cx="1589" cy="1020" r="2.8"/><circle cx="1478" cy="1020" r="5.1"/><circle cx="1535" cy="1020" r="4.0"/><circle cx="1431" cy="1020" r="2.2"/><circle cx="1745" cy="1020" r="2.3"/><circle cx="1750" cy="1020" r="2.7"/><circle cx="1768" cy="1020" r="2.5"/><circle cx="1758" cy="1020" r="2.6"/><circle cx="1506" cy="1020" r="4.3"/><circle cx="1433" cy="1020" r="5.2"/><circle cx="1470" cy="1020" r="5.1"/><circle cx="1545" cy="1021" r="5.1"/><circle cx="1435" cy="1021" r="2.8"/><circle cx="1496" cy="1021" r="2.6"/><circle cx="1459" cy="1021" r="2.2"/><circle cx="1452" cy="1021" r="5.1"/><circle cx="1432" cy="1021" r="2.3"/><circle cx="1768" cy="1022" r="2.3"/><circle cx="1758" cy="1022" r="2.6"/><circle cx="1746" cy="1022" r="2.9"/><circle cx="1615" cy="1022" r="2.5"/><circle cx="1457" cy="1022" r="2.2"/><circle cx="1501" cy="1022" r="3.9"/><circle cx="1552" cy="1023" r="5.1"/><circle cx="1529" cy="1023" r="4.7"/><circle cx="1487" cy="1023" r="2.6"/><circle cx="1597" cy="1023" r="3.6"/><circle cx="1605" cy="1023" r="4.8"/><circle cx="1723" cy="1024" r="3.1"/><circle cx="1516" cy="1024" r="3.1"/><circle cx="1763" cy="1024" r="2.5"/><circle cx="1533" cy="1024" r="2.2"/><circle cx="1715" cy="1024" r="2.6"/><circle cx="1471" cy="1024" r="3.7"/><circle cx="1776" cy="1024" r="2.3"/><circle cx="1509" cy="1024" r="4.8"/><circle cx="1749" cy="1025" r="3.2"/><circle cx="1562" cy="1025" r="4.5"/><circle cx="1436" cy="1025" r="2.3"/><circle cx="1747" cy="1025" r="2.3"/><circle cx="1528" cy="1025" r="4.5"/><circle cx="1492" cy="1026" r="3.2"/><circle cx="1498" cy="1026" r="3.6"/><circle cx="1504" cy="1026" r="2.4"/><circle cx="1725" cy="1026" r="3.0"/><circle cx="1755" cy="1026" r="2.2"/><circle cx="1582" cy="1026" r="3.0"/><circle cx="1523" cy="1026" r="2.4"/><circle cx="1715" cy="1026" r="2.4"/><circle cx="1526" cy="1026" r="2.2"/><circle cx="1470" cy="1026" r="3.4"/><circle cx="1725" cy="1026" r="2.3"/><circle cx="1500" cy="1027" r="2.4"/><circle cx="1768" cy="1027" r="2.1"/><circle cx="1520" cy="1027" r="4.2"/><circle cx="1467" cy="1027" r="4.2"/><circle cx="1505" cy="1027" r="4.5"/><circle cx="1618" cy="1027" r="4.3"/><circle cx="1572" cy="1027" r="4.2"/><circle cx="1749" cy="1027" r="2.0"/><circle cx="1542" cy="1027" r="3.1"/><circle cx="1528" cy="1027" r="3.4"/><circle cx="1523" cy="1027" r="3.4"/><circle cx="1768" cy="1028" r="2.8"/><circle cx="1457" cy="1028" r="3.3"/><circle cx="1472" cy="1028" r="2.4"/><circle cx="1439" cy="1028" r="4.9"/><circle cx="1771" cy="1028" r="2.9"/><circle cx="1559" cy="1028" r="4.2"/><circle cx="1450" cy="1028" r="2.3"/><circle cx="1537" cy="1028" r="4.6"/><circle cx="1588" cy="1028" r="3.4"/><circle cx="1499" cy="1028" r="2.7"/><circle cx="1520" cy="1028" r="3.0"/><circle cx="1445" cy="1029" r="2.3"/><circle cx="1548" cy="1029" r="2.6"/><circle cx="1473" cy="1029" r="2.8"/><circle cx="1528" cy="1029" r="3.8"/><circle cx="1778" cy="1030" r="1.9"/><circle cx="1459" cy="1030" r="4.3"/><circle cx="1524" cy="1030" r="3.6"/><circle cx="1497" cy="1030" r="4.3"/><circle cx="1543" cy="1030" r="2.7"/><circle cx="1450" cy="1030" r="4.7"/><circle cx="1755" cy="1030" r="3.3"/><circle cx="1593" cy="1030" r="3.4"/><circle cx="1529" cy="1030" r="5.0"/><circle cx="1593" cy="1030" r="4.3"/><circle cx="1478" cy="1031" r="2.7"/><circle cx="1540" cy="1031" r="4.5"/><circle cx="1507" cy="1031" r="4.5"/><circle cx="1553" cy="1031" r="3.3"/><circle cx="1782" cy="1031" r="2.5"/><circle cx="1548" cy="1031" r="2.4"/><circle cx="1457" cy="1032" r="2.9"/><circle cx="1618" cy="1032" r="5.2"/><circle cx="1756" cy="1032" r="2.4"/><circle cx="1531" cy="1032" r="2.7"/><circle cx="1750" cy="1032" r="3.3"/><circle cx="1598" cy="1032" r="2.3"/><circle cx="1530" cy="1032" r="2.2"/><circle cx="1517" cy="1032" r="2.7"/><circle cx="1460" cy="1032" r="3.9"/><circle cx="1771" cy="1032" r="2.6"/><circle cx="1488" cy="1032" r="2.8"/><circle cx="1482" cy="1032" r="2.3"/><circle cx="1495" cy="1032" r="4.8"/><circle cx="1451" cy="1032" r="3.3"/><circle cx="1532" cy="1032" r="3.5"/><circle cx="1483" cy="1033" r="3.1"/><circle cx="1498" cy="1033" r="3.2"/><circle cx="1471" cy="1033" r="3.1"/><circle cx="1720" cy="1033" r="3.4"/><circle cx="1757" cy="1033" r="2.4"/><circle cx="1459" cy="1033" r="4.7"/><circle cx="1464" cy="1033" r="4.2"/><circle cx="1490" cy="1033" r="2.7"/><circle cx="1724" cy="1033" r="2.8"/><circle cx="1526" cy="1033" r="4.1"/><circle cx="1576" cy="1033" r="4.0"/><circle cx="1538" cy="1034" r="3.2"/><circle cx="1539" cy="1034" r="3.7"/><circle cx="1550" cy="1034" r="4.5"/><circle cx="1723" cy="1034" r="2.6"/><circle cx="1774" cy="1034" r="3.1"/><circle cx="1730" cy="1034" r="2.0"/><circle cx="1457" cy="1034" r="4.0"/><circle cx="1778" cy="1035" r="2.5"/><circle cx="1528" cy="1035" r="4.8"/><circle cx="1476" cy="1035" r="3.6"/><circle cx="1515" cy="1035" r="2.8"/><circle cx="1533" cy="1035" r="3.8"/><circle cx="1543" cy="1035" r="4.8"/><circle cx="1560" cy="1035" r="2.5"/><circle cx="1521" cy="1035" r="2.6"/><circle cx="1535" cy="1035" r="5.0"/><circle cx="1492" cy="1035" r="3.4"/><circle cx="1469" cy="1036" r="4.8"/><circle cx="1785" cy="1036" r="2.4"/><circle cx="1788" cy="1036" r="3.3"/><circle cx="1527" cy="1036" r="2.4"/><circle cx="1525" cy="1036" r="4.5"/><circle cx="1549" cy="1036" r="2.9"/><circle cx="1518" cy="1036" r="4.0"/><circle cx="1457" cy="1036" r="3.3"/><circle cx="1485" cy="1036" r="2.8"/><circle cx="1515" cy="1036" r="3.7"/><circle cx="1514" cy="1037" r="4.2"/><circle cx="1544" cy="1037" r="3.2"/><circle cx="1510" cy="1037" r="2.8"/><circle cx="1723" cy="1037" r="2.1"/><circle cx="1507" cy="1037" r="5.0"/><circle cx="1532" cy="1037" r="4.2"/><circle cx="1593" cy="1037" r="4.2"/><circle cx="1520" cy="1037" r="4.5"/><circle cx="1510" cy="1037" r="2.9"/><circle cx="1497" cy="1038" r="2.5"/><circle cx="1547" cy="1038" r="3.0"/><circle cx="1754" cy="1038" r="2.2"/><circle cx="1780" cy="1038" r="3.1"/><circle cx="1790" cy="1038" r="3.1"/><circle cx="1507" cy="1038" r="4.4"/><circle cx="1544" cy="1039" r="4.4"/><circle cx="1526" cy="1039" r="2.2"/><circle cx="1511" cy="1039" r="4.8"/><circle cx="1583" cy="1039" r="3.1"/><circle cx="1507" cy="1039" r="2.9"/><circle cx="1755" cy="1039" r="2.5"/><circle cx="1505" cy="1039" r="3.1"/><circle cx="1553" cy="1039" r="3.7"/><circle cx="1541" cy="1039" r="3.1"/><circle cx="1558" cy="1039" r="3.8"/><circle cx="1586" cy="1039" r="3.2"/><circle cx="1552" cy="1039" r="5.0"/><circle cx="1599" cy="1040" r="2.4"/><circle cx="1726" cy="1040" r="2.0"/><circle cx="1501" cy="1040" r="2.8"/><circle cx="1729" cy="1040" r="2.7"/><circle cx="1791" cy="1040" r="2.0"/><circle cx="1477" cy="1040" r="4.2"/><circle cx="1492" cy="1040" r="4.3"/><circle cx="1466" cy="1040" r="2.5"/><circle cx="1759" cy="1040" r="3.0"/><circle cx="1782" cy="1040" r="2.0"/><circle cx="1556" cy="1040" r="2.6"/><circle cx="1793" cy="1041" r="1.9"/><circle cx="1498" cy="1041" r="5.0"/><circle cx="1491" cy="1041" r="4.3"/><circle cx="1730" cy="1041" r="1.7"/><circle cx="1471" cy="1041" r="3.5"/><circle cx="1521" cy="1042" r="4.3"/><circle cx="1549" cy="1042" r="3.7"/><circle cx="1585" cy="1042" r="3.8"/><circle cx="1732" cy="1042" r="2.1"/><circle cx="1514" cy="1042" r="4.1"/><circle cx="1590" cy="1042" r="2.9"/><circle cx="1476" cy="1042" r="3.9"/><circle cx="1488" cy="1042" r="2.2"/><circle cx="1582" cy="1042" r="3.4"/><circle cx="1551" cy="1042" r="2.6"/><circle cx="1522" cy="1042" r="3.7"/><circle cx="1499" cy="1042" r="3.1"/><circle cx="1556" cy="1042" r="4.0"/><circle cx="1483" cy="1042" r="4.2"/><circle cx="1498" cy="1042" r="3.7"/><circle cx="1794" cy="1042" r="2.4"/><circle cx="1486" cy="1042" r="3.6"/><circle cx="1565" cy="1043" r="4.7"/><circle cx="1533" cy="1043" r="4.3"/><circle cx="1735" cy="1043" r="3.1"/><circle cx="1737" cy="1043" r="2.5"/><circle cx="1501" cy="1044" r="5.1"/><circle cx="1560" cy="1044" r="2.9"/><circle cx="1485" cy="1044" r="5.0"/><circle cx="1511" cy="1044" r="3.1"/><circle cx="1502" cy="1044" r="2.8"/><circle cx="1526" cy="1045" r="4.9"/><circle cx="1519" cy="1045" r="3.2"/><circle cx="1550" cy="1045" r="5.1"/><circle cx="1535" cy="1045" r="5.0"/><circle cx="1547" cy="1045" r="3.3"/><circle cx="1546" cy="1045" r="3.0"/><circle cx="1634" cy="1045" r="1.8"/><circle cx="1526" cy="1045" r="4.4"/><circle cx="1533" cy="1046" r="2.8"/><circle cx="1500" cy="1046" r="4.0"/><circle cx="1736" cy="1047" r="3.0"/><circle cx="1527" cy="1047" r="4.2"/><circle cx="1637" cy="1047" r="2.1"/><circle cx="1560" cy="1047" r="4.9"/><circle cx="1567" cy="1047" r="5.2"/><circle cx="1497" cy="1048" r="2.6"/><circle cx="1545" cy="1048" r="3.6"/><circle cx="1637" cy="1048" r="2.9"/><circle cx="1541" cy="1048" r="2.4"/><circle cx="1558" cy="1048" r="4.9"/><circle cx="1506" cy="1049" r="4.9"/><circle cx="1532" cy="1049" r="2.4"/><circle cx="1734" cy="1050" r="3.1"/><circle cx="1532" cy="1050" r="3.7"/><circle cx="1532" cy="1050" r="4.4"/><circle cx="1528" cy="1050" r="4.1"/><circle cx="1542" cy="1050" r="2.8"/><circle cx="1560" cy="1050" r="2.3"/><circle cx="1737" cy="1051" r="3.3"/><circle cx="1741" cy="1051" r="1.8"/><circle cx="1494" cy="1051" r="3.6"/><circle cx="1519" cy="1052" r="2.8"/><circle cx="1557" cy="1052" r="4.0"/><circle cx="1514" cy="1052" r="3.5"/><circle cx="1513" cy="1052" r="4.9"/><circle cx="1740" cy="1052" r="1.9"/><circle cx="1512" cy="1052" r="2.9"/><circle cx="1498" cy="1052" r="4.1"/><circle cx="1539" cy="1052" r="4.6"/><circle cx="1514" cy="1053" r="2.8"/><circle cx="1512" cy="1053" r="3.2"/><circle cx="1642" cy="1054" r="2.0"/><circle cx="1637" cy="1054" r="3.3"/><circle cx="1525" cy="1054" r="2.4"/><circle cx="1586" cy="1054" r="4.7"/><circle cx="1501" cy="1054" r="3.1"/><circle cx="1511" cy="1054" r="3.5"/><circle cx="1565" cy="1055" r="4.0"/><circle cx="1638" cy="1055" r="1.9"/><circle cx="1741" cy="1055" r="2.2"/><circle cx="1648" cy="1055" r="1.7"/><circle cx="1559" cy="1056" r="3.5"/><circle cx="1553" cy="1056" r="3.0"/><circle cx="1571" cy="1056" r="3.8"/><circle cx="1556" cy="1056" r="3.4"/><circle cx="1534" cy="1057" r="3.7"/><circle cx="1571" cy="1057" r="2.4"/><circle cx="1586" cy="1057" r="3.6"/><circle cx="1642" cy="1057" r="2.4"/><circle cx="1568" cy="1057" r="4.4"/><circle cx="1744" cy="1057" r="2.3"/><circle cx="1527" cy="1057" r="3.1"/><circle cx="1583" cy="1057" r="3.5"/><circle cx="1642" cy="1057" r="3.0"/><circle cx="1525" cy="1058" r="2.9"/><circle cx="1586" cy="1058" r="3.1"/><circle cx="1556" cy="1058" r="3.5"/><circle cx="1569" cy="1058" r="4.7"/><circle cx="1586" cy="1058" r="3.0"/><circle cx="1577" cy="1058" r="2.6"/><circle cx="1587" cy="1058" r="4.8"/><circle cx="1574" cy="1058" r="2.6"/><circle cx="1651" cy="1058" r="2.7"/><circle cx="1518" cy="1058" r="3.6"/><circle cx="1533" cy="1058" r="4.0"/><circle cx="1579" cy="1059" r="3.5"/><circle cx="1748" cy="1059" r="1.9"/><circle cx="1557" cy="1059" r="2.6"/><circle cx="1580" cy="1059" r="3.6"/><circle cx="1511" cy="1059" r="2.7"/><circle cx="1521" cy="1059" r="4.1"/><circle cx="1738" cy="1059" r="2.1"/><circle cx="1644" cy="1060" r="1.8"/><circle cx="1540" cy="1060" r="3.5"/><circle cx="1649" cy="1060" r="1.9"/><circle cx="1573" cy="1060" r="2.7"/><circle cx="1517" cy="1060" r="3.8"/><circle cx="1550" cy="1060" r="3.4"/><circle cx="1596" cy="1061" r="4.3"/><circle cx="1597" cy="1062" r="2.7"/><circle cx="1742" cy="1062" r="2.4"/><circle cx="1570" cy="1062" r="4.0"/><circle cx="1656" cy="1062" r="3.4"/><circle cx="1586" cy="1062" r="4.7"/><circle cx="1750" cy="1063" r="2.6"/><circle cx="1654" cy="1063" r="2.4"/><circle cx="1529" cy="1063" r="2.8"/><circle cx="1552" cy="1063" r="4.9"/><circle cx="1582" cy="1064" r="5.0"/><circle cx="1568" cy="1064" r="2.3"/><circle cx="1659" cy="1064" r="2.3"/><circle cx="1597" cy="1064" r="2.9"/><circle cx="1751" cy="1064" r="3.0"/><circle cx="1567" cy="1064" r="4.3"/><circle cx="1552" cy="1064" r="4.5"/><circle cx="1650" cy="1064" r="2.3"/><circle cx="1604" cy="1064" r="2.8"/><circle cx="1745" cy="1065" r="2.0"/><circle cx="1521" cy="1065" r="3.8"/><circle cx="1662" cy="1065" r="2.6"/><circle cx="1570" cy="1066" r="3.8"/><circle cx="1566" cy="1066" r="3.3"/><circle cx="1541" cy="1066" r="4.2"/><circle cx="1663" cy="1066" r="2.4"/><circle cx="1526" cy="1066" r="4.2"/><circle cx="1656" cy="1067" r="2.0"/><circle cx="1567" cy="1067" r="4.9"/><circle cx="1575" cy="1067" r="4.2"/><circle cx="1608" cy="1067" r="3.0"/><circle cx="1557" cy="1067" r="3.2"/><circle cx="1749" cy="1068" r="2.0"/><circle cx="1591" cy="1068" r="3.2"/><circle cx="1551" cy="1069" r="3.0"/><circle cx="1594" cy="1069" r="3.5"/><circle cx="1609" cy="1069" r="4.4"/><circle cx="1584" cy="1069" r="2.7"/><circle cx="1609" cy="1069" r="3.8"/><circle cx="1608" cy="1070" r="3.0"/><circle cx="1751" cy="1070" r="2.8"/><circle cx="1551" cy="1070" r="2.7"/><circle cx="1593" cy="1070" r="4.8"/><circle cx="1663" cy="1070" r="2.5"/><circle cx="1594" cy="1070" r="2.6"/><circle cx="1584" cy="1070" r="3.7"/><circle cx="1541" cy="1071" r="4.2"/><circle cx="1579" cy="1071" r="3.5"/><circle cx="1543" cy="1072" r="2.4"/><circle cx="1753" cy="1072" r="2.0"/><circle cx="1583" cy="1072" r="2.8"/><circle cx="1664" cy="1072" r="2.3"/><circle cx="1559" cy="1072" r="3.0"/><circle cx="1620" cy="1072" r="2.7"/><circle cx="1611" cy="1072" r="3.7"/><circle cx="1567" cy="1072" r="4.3"/><circle cx="1748" cy="1073" r="1.7"/><circle cx="1546" cy="1073" r="3.4"/><circle cx="1669" cy="1073" r="2.9"/><circle cx="1674" cy="1074" r="3.1"/><circle cx="1667" cy="1074" r="1.9"/><circle cx="1664" cy="1074" r="3.2"/><circle cx="1610" cy="1074" r="3.7"/><circle cx="1756" cy="1074" r="2.8"/><circle cx="1751" cy="1075" r="3.4"/><circle cx="1625" cy="1075" r="5.2"/><circle cx="1624" cy="1075" r="5.1"/><circle cx="1609" cy="1075" r="3.3"/><circle cx="1591" cy="1075" r="4.0"/><circle cx="1591" cy="1076" r="3.9"/><circle cx="1622" cy="1076" r="5.1"/><circle cx="1756" cy="1077" r="2.9"/><circle cx="1668" cy="1077" r="3.0"/><circle cx="1583" cy="1077" r="3.7"/><circle cx="1557" cy="1077" r="3.2"/><circle cx="1561" cy="1077" r="3.1"/><circle cx="1759" cy="1077" r="1.8"/><circle cx="1621" cy="1078" r="3.8"/><circle cx="1563" cy="1078" r="5.2"/><circle cx="1615" cy="1078" r="5.2"/><circle cx="1672" cy="1079" r="2.7"/><circle cx="1675" cy="1079" r="3.3"/><circle cx="1561" cy="1079" r="3.6"/><circle cx="1561" cy="1079" r="4.1"/><circle cx="1610" cy="1079" r="3.4"/><circle cx="1563" cy="1080" r="4.4"/><circle cx="1595" cy="1080" r="4.5"/><circle cx="1560" cy="1080" r="4.6"/><circle cx="1678" cy="1080" r="2.2"/><circle cx="1685" cy="1081" r="3.2"/><circle cx="1696" cy="1081" r="3.0"/><circle cx="1758" cy="1082" r="2.5"/><circle cx="1585" cy="1082" r="4.0"/><circle cx="1606" cy="1082" r="4.7"/><circle cx="1687" cy="1082" r="3.3"/><circle cx="1612" cy="1082" r="4.5"/><circle cx="1639" cy="1082" r="4.6"/><circle cx="1568" cy="1082" r="4.3"/><circle cx="1696" cy="1083" r="1.9"/><circle cx="1605" cy="1083" r="5.1"/><circle cx="1714" cy="1083" r="3.0"/><circle cx="1611" cy="1083" r="4.0"/><circle cx="1675" cy="1083" r="2.7"/><circle cx="1754" cy="1083" r="3.3"/><circle cx="1726" cy="1083" r="2.5"/><circle cx="1724" cy="1083" r="3.1"/><circle cx="1613" cy="1083" r="2.8"/><circle cx="1576" cy="1084" r="5.1"/><circle cx="1699" cy="1084" r="2.9"/><circle cx="1629" cy="1084" r="5.1"/><circle cx="1679" cy="1085" r="3.0"/><circle cx="1701" cy="1085" r="2.9"/><circle cx="1627" cy="1085" r="3.3"/><circle cx="1693" cy="1085" r="2.4"/><circle cx="1709" cy="1085" r="2.7"/><circle cx="1713" cy="1085" r="3.3"/><circle cx="1682" cy="1085" r="2.1"/><circle cx="1690" cy="1086" r="2.7"/><circle cx="1738" cy="1086" r="3.3"/><circle cx="1640" cy="1086" r="2.9"/><circle cx="1703" cy="1086" r="2.2"/><circle cx="1751" cy="1086" r="2.9"/><circle cx="1700" cy="1086" r="2.8"/><circle cx="1718" cy="1086" r="3.0"/><circle cx="1681" cy="1087" r="2.9"/><circle cx="1688" cy="1087" r="3.0"/><circle cx="1719" cy="1087" r="2.3"/><circle cx="1715" cy="1087" r="1.8"/><circle cx="1732" cy="1087" r="2.3"/><circle cx="1710" cy="1087" r="2.5"/><circle cx="1631" cy="1088" r="3.7"/><circle cx="1756" cy="1088" r="2.6"/><circle cx="1752" cy="1088" r="2.0"/><circle cx="1706" cy="1088" r="3.3"/><circle cx="1727" cy="1088" r="2.9"/><circle cx="1721" cy="1088" r="1.8"/><circle cx="1602" cy="1088" r="2.4"/><circle cx="1753" cy="1088" r="2.5"/><circle cx="1608" cy="1089" r="2.8"/><circle cx="1730" cy="1089" r="1.9"/><circle cx="1578" cy="1089" r="3.0"/><circle cx="1741" cy="1090" r="2.8"/><circle cx="1758" cy="1090" r="2.0"/><circle cx="1729" cy="1090" r="2.0"/><circle cx="1747" cy="1090" r="2.1"/><circle cx="1612" cy="1090" r="4.6"/><circle cx="1734" cy="1090" r="2.5"/><circle cx="1628" cy="1090" r="2.7"/><circle cx="1742" cy="1090" r="2.5"/><circle cx="1738" cy="1090" r="2.7"/><circle cx="1748" cy="1090" r="3.3"/><circle cx="1599" cy="1091" r="4.4"/><circle cx="1744" cy="1091" r="3.1"/><circle cx="1586" cy="1092" r="3.1"/><circle cx="1609" cy="1092" r="2.6"/><circle cx="1591" cy="1093" r="3.5"/><circle cx="1590" cy="1093" r="3.4"/><circle cx="1621" cy="1094" r="3.9"/><circle cx="1617" cy="1094" r="4.0"/><circle cx="1617" cy="1094" r="4.7"/><circle cx="1593" cy="1094" r="3.3"/><circle cx="1607" cy="1094" r="3.1"/><circle cx="1634" cy="1095" r="4.2"/><circle cx="1605" cy="1096" r="4.8"/><circle cx="1607" cy="1096" r="4.5"/><circle cx="1609" cy="1097" r="2.5"/><circle cx="1602" cy="1097" r="2.7"/><circle cx="1597" cy="1098" r="2.6"/><circle cx="1602" cy="1099" r="4.3"/><circle cx="1633" cy="1100" r="4.7"/><circle cx="1614" cy="1101" r="4.5"/><circle cx="1605" cy="1102" r="4.7"/><circle cx="1625" cy="1102" r="5.2"/><circle cx="1632" cy="1103" r="4.0"/><circle cx="1621" cy="1103" r="3.8"/><circle cx="1621" cy="1105" r="3.0"/><circle cx="1617" cy="1106" r="5.0"/><circle cx="1615" cy="1106" r="3.0"/><circle cx="1619" cy="1106" r="2.8"/><circle cx="1624" cy="1110" r="3.2"/></g></defs><polygon points="451,591 1254,173 2266,446 1715,1151" fill="#d7d7d7"/><polygon points="451,591 1254,173 2266,446 1715,1151" fill="#000" filter="url(#fg)" opacity="0.45"/><polygon points="836,392 938,339 1146,534 997,643 848,466" fill="url(#ps1)"/><polygon points="623,534 836,392 848,466 997,643 908,683 810,747 704,688 678,611" fill="url(#ps2)" opacity="0.8"/><polygon points="1017,578 1260,499 1480,720 1560,900 1400,1000 1150,890" fill="url(#ps2)" opacity="0.12"/><polygon points="836,392 938,339 1146,534 997,643 848,466" fill="#000" filter="url(#fw)"/><polygon points="623,534 836,392 848,466 997,643 908,683 810,747 704,688 678,611" fill="#000" filter="url(#fw)"/><polygon points="1285,375 1368,352 1874,622 1789,666 1585,783 1520,660 1464,534 1379,443" fill="#000" filter="url(#fd)"/><polygon points="1708,722 1776,683 1930,800 1850,795" fill="#000" filter="url(#fd)"/><path d="M1880,376 L2220,506" stroke="#e4e4e4" stroke-width="3"/><path d="M1880,378 L2220,508" stroke="#a8a8a8" stroke-width="1"/><path d="M2145,476 L2188,456" stroke="#e4e4e4" stroke-width="3"/><path d="M2145,478 L2188,458" stroke="#a8a8a8" stroke-width="1"/><path d="M1373,440 L1455,410" stroke="#e4e4e4" stroke-width="3"/><path d="M1373,442 L1455,412" stroke="#a8a8a8" stroke-width="1"/><path d="M1455,520 L1583,478" stroke="#e4e4e4" stroke-width="3"/><path d="M1455,522 L1583,480" stroke="#a8a8a8" stroke-width="1"/><path d="M1540,700 L1750,625" stroke="#e4e4e4" stroke-width="3"/><path d="M1540,702 L1750,627" stroke="#a8a8a8" stroke-width="1"/><path d="M1700,760 L1800,700" stroke="#e4e4e4" stroke-width="3"/><path d="M1700,762 L1800,702" stroke="#a8a8a8" stroke-width="1"/><path d="M1570,336 L1682,289" stroke="#e4e4e4" stroke-width="3"/><path d="M1570,338 L1682,291" stroke="#a8a8a8" stroke-width="1"/><g stroke-linecap="round"><path d="M1100,257 L1176,303" stroke="#0a76a0" stroke-width="3" opacity="0.8"/><path d="M1190,252 L1282,270" stroke="#0a76a0" stroke-width="4" opacity="0.85"/><path d="M1215,240 L1285,258" stroke="#0a76a0" stroke-width="3" opacity="0.7"/></g><path d="M1359,935 L1393,908" fill="none" stroke="#808080" stroke-width="5" opacity="0.5"/><path d="M1359,935 L1393,908" fill="none" stroke="#ececec" stroke-width="3"/><path d="M1359,935 L1440,975 L1520,1005" fill="none" stroke="#808080" stroke-width="5" opacity="0.5"/><path d="M1359,935 L1440,975 L1520,1005" fill="none" stroke="#ececec" stroke-width="3"/><path d="M1607,1000 L1662,998" fill="none" stroke="#808080" stroke-width="5" opacity="0.5"/><path d="M1607,1000 L1662,998" fill="none" stroke="#ececec" stroke-width="3"/><path d="M1523,955 L1515,985 L1607,1000" fill="none" stroke="#808080" stroke-width="5" opacity="0.5"/><path d="M1523,955 L1515,985 L1607,1000" fill="none" stroke="#ececec" stroke-width="3"/><path d="M1680,1090 L1762,1090" fill="none" stroke="#808080" stroke-width="5" opacity="0.5"/><path d="M1680,1090 L1762,1090" fill="none" stroke="#ececec" stroke-width="3"/><path d="M1633,1047 L1700,1040" fill="none" stroke="#808080" stroke-width="5" opacity="0.5"/><path d="M1633,1047 L1700,1040" fill="none" stroke="#ececec" stroke-width="3"/><path d="M1180,527 C1200,500 1250,470 1333,436" fill="none" stroke="#e4e4e4" stroke-width="3"/><path d="M1180,529 C1200,502 1250,472 1333,438" fill="none" stroke="#a8a8a8" stroke-width="1" opacity="0.8"/><path d="M1120,270 L1180,318 L1237,355 L1294,392 L1350,432 L1407,486 L1450,548 L1481,605 L1512,660 L1550,730 L1585,783 L1617,845 L1645,900 L1676,941 L1706,971 L1757,1053" fill="none" stroke="#9a9a9a" stroke-width="13" stroke-linejoin="round" opacity="0.6"/><path d="M1120,270 L1180,318 L1237,355 L1294,392 L1350,432 L1407,486 L1450,548 L1481,605 L1512,660 L1550,730 L1585,783 L1617,845 L1645,900 L1676,941 L1706,971 L1757,1053" fill="none" stroke="#d4d4d4" stroke-width="11" stroke-linejoin="round"/><path d="M1120,270 L1180,318 L1237,355 L1294,392 L1350,432 L1407,486 L1450,548 L1481,605 L1512,660 L1550,730 L1585,783 L1617,845 L1645,900 L1676,941 L1706,971 L1757,1053" fill="none" stroke="#e6e6e6" stroke-width="3" stroke-linejoin="round" opacity="0.7"/><polygon points="929,767 1371,980 1300,967 845,766" fill="#000" opacity="0.07"/><g clip-path="url(#cgp)"><g filter="url(#fb)" opacity="0.3"><path d="M1282,266 L1391,291 L1501,326 L1610,367 L1665,367 L1747,386 L1815,397 L1837,397" fill="none" stroke="#000" stroke-width="18" stroke-linejoin="round"/><path d="M1665,364 L1760,340" fill="none" stroke="#000" stroke-width="10" stroke-linejoin="round"/><path d="M1816,322 L1824,326" fill="none" stroke="#000" stroke-width="16" stroke-linejoin="round"/><path d="M1837,397 L1771,430 L1829,457 L1938,496" fill="none" stroke="#000" stroke-width="16" stroke-linejoin="round"/><path d="M1837,392 L1870,375 L1916,359" fill="none" stroke="#000" stroke-width="8" stroke-linejoin="round"/><path d="M1282,299 L1337,332 L1430,386 L1555,452 L1692,520 L1802,584 L1902,636 L2042,724" fill="none" stroke="#000" stroke-width="18" stroke-linejoin="round"/><path d="M1486,601 L1504,670 L1533,735 L1558,771 L1598,814 L1642,872 L1685,930 L1714,973 L1762,1044" fill="none" stroke="#000" stroke-width="16" stroke-linejoin="round"/><path d="M847,766 L881,764" fill="none" stroke="#000" stroke-width="10" stroke-linejoin="round"/><path d="M931,771 L976,783 L1013,803 L1050,823 L1100,848 L1149,875 L1199,900 L1236,917 L1274,940 L1323,962 L1373,984" fill="none" stroke="#000" stroke-width="22" stroke-linejoin="round"/><path d="M677,482 L747,441" fill="none" stroke="#000" stroke-width="16" stroke-linejoin="round"/><path d="M1844,804 L1854,834 L1868,874 L1882,924" fill="none" stroke="#000" stroke-width="16" stroke-linejoin="round"/><path d="M1525,959 L1645,961 L1664,1002" fill="none" stroke="#000" stroke-width="12" stroke-linejoin="round"/><path d="M1635,1051 L1682,1087 L1761,1093" fill="none" stroke="#000" stroke-width="14" stroke-linejoin="round"/><path d="M1698,994 L1761,1087" fill="none" stroke="#000" stroke-width="18" stroke-linejoin="round"/><path d="M1724,994 L1796,1047" fill="none" stroke="#000" stroke-width="20" stroke-linejoin="round"/><polygon points="1180,230 1252,177 1270,167 1312,173 1332,194 1363,194 1379,212 1322,245 1281,264 1230,262" fill="#000"/><polygon points="1100,257 1146,229 1200,240 1230,262 1254,274 1176,303" fill="#000"/><polygon points="458,588 475,560 520,548 545,560 540,575 490,600" fill="#000"/><polygon points="1296,965 1625,1111 1650,1085 1580,1050 1500,1010 1420,975 1350,945 1310,945" fill="#000"/><polygon points="1480,985 1555,992 1570,1045 1495,1048" fill="#000"/><polygon points="1400,940 1460,955 1470,985 1420,980" fill="#000"/><polygon points="1560,1005 1610,1010 1630,1040 1580,1045" fill="#000"/><polygon points="2172,432 2225,440 2265,440 2255,470 2195,458" fill="#000"/><polygon points="1832,790 1868,785 1870,830 1845,850" fill="#000"/><polygon points="1922,770 1972,780 1968,812 1925,805" fill="#000"/></g></g><g fill="#0a76a0" opacity="0.75"><ellipse cx="1282" cy="173" rx="3.6" ry="2.2"/><ellipse cx="1303" cy="181" rx="2.7" ry="1.7"/><ellipse cx="1292" cy="183" rx="2.9" ry="1.8"/><ellipse cx="1277" cy="187" rx="2.7" ry="1.7"/><ellipse cx="1245" cy="190" rx="3.6" ry="2.3"/><ellipse cx="1299" cy="193" rx="2.5" ry="1.6"/><ellipse cx="1258" cy="195" rx="3.2" ry="2.0"/><ellipse cx="1322" cy="199" rx="3.5" ry="2.2"/><ellipse cx="1232" cy="201" rx="2.9" ry="1.8"/><ellipse cx="1350" cy="203" rx="2.8" ry="1.7"/><ellipse cx="1312" cy="205" rx="3.9" ry="2.4"/><ellipse cx="1348" cy="206" rx="3.5" ry="2.2"/><ellipse cx="1278" cy="207" rx="3.8" ry="2.4"/><ellipse cx="1359" cy="210" rx="3.3" ry="2.1"/><ellipse cx="1255" cy="212" rx="3.0" ry="1.9"/><ellipse cx="1239" cy="213" rx="2.9" ry="1.8"/><ellipse cx="1332" cy="215" rx="2.7" ry="1.7"/><ellipse cx="1365" cy="217" rx="3.9" ry="2.4"/><ellipse cx="1264" cy="219" rx="2.1" ry="1.3"/><ellipse cx="1316" cy="222" rx="3.3" ry="2.1"/><ellipse cx="1366" cy="224" rx="3.2" ry="2.0"/><ellipse cx="1337" cy="225" rx="2.3" ry="1.4"/><ellipse cx="1202" cy="227" rx="2.8" ry="1.7"/><ellipse cx="1215" cy="231" rx="3.3" ry="2.1"/><ellipse cx="1328" cy="234" rx="2.7" ry="1.7"/><ellipse cx="1186" cy="235" rx="3.2" ry="2.0"/><ellipse cx="1310" cy="237" rx="2.4" ry="1.5"/><ellipse cx="1240" cy="238" rx="3.0" ry="1.9"/><ellipse cx="1324" cy="241" rx="2.3" ry="1.4"/><ellipse cx="1155" cy="241" rx="2.8" ry="1.7"/><ellipse cx="1260" cy="243" rx="2.4" ry="1.5"/><ellipse cx="1177" cy="245" rx="2.4" ry="1.5"/><ellipse cx="1324" cy="246" rx="3.0" ry="1.9"/><ellipse cx="1311" cy="248" rx="2.3" ry="1.5"/><ellipse cx="1269" cy="249" rx="2.2" ry="1.4"/><ellipse cx="1256" cy="250" rx="2.3" ry="1.4"/><ellipse cx="1228" cy="252" rx="1.8" ry="1.1"/><ellipse cx="1226" cy="254" rx="2.7" ry="1.7"/><ellipse cx="1152" cy="255" rx="2.9" ry="1.8"/><ellipse cx="1133" cy="258" rx="4.1" ry="2.6"/><ellipse cx="1237" cy="259" rx="3.7" ry="2.3"/><ellipse cx="1264" cy="260" rx="2.7" ry="1.7"/><ellipse cx="1185" cy="262" rx="3.1" ry="1.9"/><ellipse cx="1271" cy="265" rx="3.1" ry="1.9"/><ellipse cx="1284" cy="266" rx="2.3" ry="1.4"/><ellipse cx="1292" cy="268" rx="2.6" ry="1.7"/><ellipse cx="1308" cy="270" rx="1.8" ry="1.1"/><ellipse cx="1179" cy="271" rx="2.7" ry="1.7"/><ellipse cx="1316" cy="273" rx="1.4" ry="0.9"/><ellipse cx="1216" cy="274" rx="2.7" ry="1.7"/><ellipse cx="1136" cy="276" rx="3.0" ry="1.9"/><ellipse cx="1342" cy="277" rx="1.9" ry="1.2"/><ellipse cx="1324" cy="279" rx="2.0" ry="1.3"/><ellipse cx="1362" cy="280" rx="1.8" ry="1.1"/><ellipse cx="1342" cy="282" rx="2.7" ry="1.7"/><ellipse cx="1208" cy="285" rx="2.9" ry="1.8"/><ellipse cx="1384" cy="287" rx="1.6" ry="1.0"/><ellipse cx="1403" cy="291" rx="2.2" ry="1.4"/><ellipse cx="1397" cy="296" rx="2.0" ry="1.2"/><ellipse cx="1408" cy="299" rx="2.4" ry="1.5"/><ellipse cx="1422" cy="301" rx="1.8" ry="1.1"/><ellipse cx="1287" cy="304" rx="2.5" ry="1.5"/><ellipse cx="1435" cy="308" rx="1.9" ry="1.2"/><ellipse cx="1465" cy="311" rx="1.5" ry="0.9"/><ellipse cx="1457" cy="315" rx="2.3" ry="1.4"/><ellipse cx="1469" cy="318" rx="2.7" ry="1.7"/><ellipse cx="1502" cy="321" rx="2.5" ry="1.6"/><ellipse cx="1506" cy="323" rx="2.1" ry="1.3"/><ellipse cx="1336" cy="326" rx="2.2" ry="1.4"/><ellipse cx="1342" cy="329" rx="2.3" ry="1.5"/><ellipse cx="1346" cy="333" rx="2.0" ry="1.2"/><ellipse cx="1346" cy="337" rx="2.5" ry="1.6"/><ellipse cx="1532" cy="340" rx="2.3" ry="1.4"/><ellipse cx="1354" cy="342" rx="2.4" ry="1.5"/><ellipse cx="1552" cy="346" rx="2.3" ry="1.5"/><ellipse cx="1575" cy="348" rx="2.4" ry="1.5"/><ellipse cx="1705" cy="351" rx="2.2" ry="1.4"/><ellipse cx="1371" cy="352" rx="1.9" ry="1.2"/><ellipse cx="1686" cy="355" rx="2.6" ry="1.6"/><ellipse cx="1692" cy="358" rx="1.9" ry="1.2"/><ellipse cx="1670" cy="361" rx="2.7" ry="1.7"/><ellipse cx="1645" cy="363" rx="2.0" ry="1.3"/><ellipse cx="1627" cy="364" rx="1.4" ry="0.9"/><ellipse cx="1666" cy="365" rx="1.8" ry="1.1"/><ellipse cx="1896" cy="366" rx="1.8" ry="1.1"/><ellipse cx="1673" cy="367" rx="2.0" ry="1.2"/><ellipse cx="1399" cy="369" rx="2.0" ry="1.2"/><ellipse cx="1693" cy="370" rx="2.6" ry="1.6"/><ellipse cx="1686" cy="373" rx="2.6" ry="1.7"/><ellipse cx="1871" cy="374" rx="1.9" ry="1.2"/><ellipse cx="1731" cy="377" rx="1.4" ry="0.9"/><ellipse cx="1743" cy="379" rx="1.7" ry="1.1"/><ellipse cx="1755" cy="382" rx="1.9" ry="1.2"/><ellipse cx="1770" cy="384" rx="1.7" ry="1.0"/><ellipse cx="1765" cy="386" rx="1.4" ry="0.9"/><ellipse cx="1780" cy="389" rx="2.4" ry="1.5"/><ellipse cx="1801" cy="391" rx="1.7" ry="1.1"/><ellipse cx="1807" cy="392" rx="2.5" ry="1.5"/><ellipse cx="1793" cy="394" rx="2.3" ry="1.4"/><ellipse cx="1796" cy="396" rx="1.8" ry="1.1"/><ellipse cx="1461" cy="398" rx="2.2" ry="1.4"/><ellipse cx="1821" cy="400" rx="1.5" ry="0.9"/><ellipse cx="1464" cy="404" rx="1.7" ry="1.1"/><ellipse cx="1815" cy="408" rx="2.4" ry="1.5"/><ellipse cx="1807" cy="412" rx="1.4" ry="0.9"/><ellipse cx="1802" cy="417" rx="2.1" ry="1.3"/><ellipse cx="1503" cy="419" rx="2.6" ry="1.6"/><ellipse cx="1771" cy="425" rx="1.7" ry="1.1"/><ellipse cx="1777" cy="427" rx="2.2" ry="1.4"/><ellipse cx="1525" cy="431" rx="2.6" ry="1.6"/><ellipse cx="1777" cy="436" rx="2.4" ry="1.5"/><ellipse cx="1785" cy="439" rx="1.6" ry="1.0"/><ellipse cx="1793" cy="442" rx="2.3" ry="1.5"/><ellipse cx="1796" cy="443" rx="2.0" ry="1.2"/><ellipse cx="737" cy="444" rx="1.7" ry="1.1"/><ellipse cx="1553" cy="445" rx="2.5" ry="1.5"/><ellipse cx="1545" cy="447" rx="2.3" ry="1.5"/><ellipse cx="728" cy="448" rx="2.0" ry="1.3"/><ellipse cx="2199" cy="450" rx="2.1" ry="1.3"/><ellipse cx="1819" cy="451" rx="2.5" ry="1.6"/><ellipse cx="1829" cy="452" rx="1.4" ry="0.9"/><ellipse cx="721" cy="453" rx="1.4" ry="0.9"/><ellipse cx="2241" cy="454" rx="4.1" ry="2.6"/><ellipse cx="2255" cy="455" rx="3.9" ry="2.4"/><ellipse cx="1574" cy="457" rx="1.5" ry="0.9"/><ellipse cx="1563" cy="459" rx="1.8" ry="1.1"/><ellipse cx="2209" cy="461" rx="4.1" ry="2.5"/><ellipse cx="1586" cy="463" rx="1.9" ry="1.2"/><ellipse cx="709" cy="464" rx="2.0" ry="1.3"/><ellipse cx="2250" cy="465" rx="2.3" ry="1.4"/><ellipse cx="1869" cy="468" rx="2.6" ry="1.7"/><ellipse cx="702" cy="470" rx="2.7" ry="1.7"/><ellipse cx="1609" cy="473" rx="1.5" ry="1.0"/><ellipse cx="684" cy="476" rx="2.6" ry="1.6"/><ellipse cx="689" cy="478" rx="1.9" ry="1.2"/><ellipse cx="1906" cy="480" rx="2.7" ry="1.7"/><ellipse cx="1617" cy="482" rx="1.9" ry="1.2"/><ellipse cx="1908" cy="486" rx="2.0" ry="1.2"/><ellipse cx="1921" cy="491" rx="2.6" ry="1.6"/><ellipse cx="1647" cy="493" rx="1.5" ry="0.9"/><ellipse cx="1934" cy="497" rx="1.6" ry="1.0"/><ellipse cx="1677" cy="508" rx="2.1" ry="1.3"/><ellipse cx="1683" cy="511" rx="1.9" ry="1.2"/><ellipse cx="1701" cy="523" rx="2.7" ry="1.7"/><ellipse cx="1705" cy="531" rx="1.9" ry="1.2"/><ellipse cx="1732" cy="538" rx="1.4" ry="0.9"/><ellipse cx="1744" cy="547" rx="2.6" ry="1.6"/><ellipse cx="1756" cy="554" rx="2.1" ry="1.3"/><ellipse cx="505" cy="557" rx="2.3" ry="1.4"/><ellipse cx="1763" cy="562" rx="1.5" ry="0.9"/><ellipse cx="1764" cy="565" rx="1.5" ry="1.0"/><ellipse cx="499" cy="568" rx="3.8" ry="2.3"/><ellipse cx="1781" cy="571" rx="1.7" ry="1.1"/><ellipse cx="522" cy="575" rx="2.4" ry="1.5"/><ellipse cx="473" cy="577" rx="1.9" ry="1.2"/><ellipse cx="516" cy="581" rx="4.0" ry="2.5"/><ellipse cx="504" cy="583" rx="3.8" ry="2.4"/><ellipse cx="1801" cy="586" rx="1.8" ry="1.1"/><ellipse cx="1827" cy="592" rx="2.3" ry="1.4"/><ellipse cx="1818" cy="595" rx="2.2" ry="1.4"/><ellipse cx="1831" cy="601" rx="2.2" ry="1.4"/><ellipse cx="1489" cy="605" rx="1.5" ry="1.0"/><ellipse cx="1859" cy="611" rx="1.9" ry="1.2"/><ellipse cx="1861" cy="616" rx="2.0" ry="1.2"/><ellipse cx="1495" cy="621" rx="2.2" ry="1.4"/><ellipse cx="1881" cy="629" rx="1.6" ry="1.0"/><ellipse cx="1892" cy="632" rx="2.6" ry="1.6"/><ellipse cx="1500" cy="638" rx="2.0" ry="1.3"/><ellipse cx="1501" cy="644" rx="1.5" ry="1.0"/><ellipse cx="1916" cy="649" rx="2.2" ry="1.4"/><ellipse cx="1502" cy="655" rx="2.7" ry="1.7"/><ellipse cx="1505" cy="661" rx="2.4" ry="1.5"/><ellipse cx="1948" cy="667" rx="1.5" ry="1.0"/><ellipse cx="1509" cy="674" rx="2.5" ry="1.6"/><ellipse cx="1969" cy="679" rx="1.7" ry="1.1"/><ellipse cx="1981" cy="685" rx="2.5" ry="1.6"/><ellipse cx="1510" cy="692" rx="1.4" ry="0.9"/><ellipse cx="1517" cy="695" rx="2.6" ry="1.6"/><ellipse cx="1520" cy="703" rx="1.5" ry="0.9"/><ellipse cx="2019" cy="707" rx="1.7" ry="1.1"/><ellipse cx="2030" cy="714" rx="2.6" ry="1.6"/><ellipse cx="2039" cy="718" rx="2.3" ry="1.4"/><ellipse cx="1532" cy="731" rx="1.6" ry="1.0"/><ellipse cx="1538" cy="746" rx="2.1" ry="1.3"/><ellipse cx="1550" cy="759" rx="2.1" ry="1.3"/><ellipse cx="854" cy="765" rx="2.3" ry="1.4"/><ellipse cx="935" cy="773" rx="2.5" ry="1.6"/><ellipse cx="1925" cy="777" rx="2.9" ry="1.8"/><ellipse cx="960" cy="779" rx="2.5" ry="1.6"/><ellipse cx="1940" cy="782" rx="2.7" ry="1.7"/><ellipse cx="1569" cy="784" rx="2.5" ry="1.6"/><ellipse cx="978" cy="787" rx="2.3" ry="1.4"/><ellipse cx="984" cy="789" rx="1.9" ry="1.2"/><ellipse cx="1867" cy="791" rx="2.3" ry="1.5"/><ellipse cx="1583" cy="794" rx="1.5" ry="0.9"/><ellipse cx="1584" cy="796" rx="2.1" ry="1.3"/><ellipse cx="1861" cy="798" rx="2.9" ry="1.8"/><ellipse cx="1582" cy="800" rx="2.4" ry="1.5"/><ellipse cx="1585" cy="803" rx="1.9" ry="1.2"/><ellipse cx="1857" cy="805" rx="2.1" ry="1.3"/><ellipse cx="1971" cy="806" rx="1.9" ry="1.2"/><ellipse cx="1031" cy="808" rx="3.0" ry="1.9"/><ellipse cx="1842" cy="810" rx="1.6" ry="1.0"/><ellipse cx="1965" cy="812" rx="2.3" ry="1.5"/><ellipse cx="1044" cy="816" rx="2.4" ry="1.5"/><ellipse cx="1053" cy="819" rx="2.0" ry="1.2"/><ellipse cx="1845" cy="820" rx="2.2" ry="1.4"/><ellipse cx="1606" cy="824" rx="2.1" ry="1.3"/><ellipse cx="1073" cy="828" rx="2.1" ry="1.3"/><ellipse cx="1615" cy="831" rx="2.6" ry="1.6"/><ellipse cx="1854" cy="835" rx="3.1" ry="2.0"/><ellipse cx="1853" cy="838" rx="2.0" ry="1.2"/><ellipse cx="1096" cy="840" rx="3.0" ry="1.9"/><ellipse cx="1620" cy="843" rx="1.4" ry="0.9"/><ellipse cx="1624" cy="848" rx="2.3" ry="1.4"/><ellipse cx="1862" cy="850" rx="1.8" ry="1.1"/><ellipse cx="1635" cy="856" rx="2.5" ry="1.6"/><ellipse cx="1634" cy="861" rx="1.6" ry="1.0"/><ellipse cx="1867" cy="864" rx="2.3" ry="1.4"/><ellipse cx="1133" cy="869" rx="2.7" ry="1.7"/><ellipse cx="1870" cy="874" rx="1.4" ry="0.9"/><ellipse cx="1147" cy="879" rx="2.7" ry="1.7"/><ellipse cx="1867" cy="883" rx="1.4" ry="0.9"/><ellipse cx="1657" cy="887" rx="2.4" ry="1.5"/><ellipse cx="1656" cy="891" rx="2.4" ry="1.5"/><ellipse cx="1660" cy="896" rx="1.8" ry="1.1"/><ellipse cx="1660" cy="901" rx="1.8" ry="1.1"/><ellipse cx="1216" cy="904" rx="3.0" ry="1.9"/><ellipse cx="1672" cy="908" rx="2.5" ry="1.6"/><ellipse cx="1234" cy="913" rx="1.9" ry="1.2"/><ellipse cx="1225" cy="917" rx="2.9" ry="1.8"/><ellipse cx="1883" cy="922" rx="1.5" ry="0.9"/><ellipse cx="1248" cy="927" rx="2.2" ry="1.4"/><ellipse cx="1271" cy="933" rx="3.5" ry="2.2"/><ellipse cx="1282" cy="939" rx="2.1" ry="1.3"/><ellipse cx="1300" cy="945" rx="2.4" ry="1.5"/><ellipse cx="1303" cy="949" rx="3.1" ry="1.9"/><ellipse cx="1310" cy="951" rx="3.4" ry="2.1"/><ellipse cx="1315" cy="954" rx="1.9" ry="1.2"/><ellipse cx="1698" cy="955" rx="2.1" ry="1.3"/><ellipse cx="1358" cy="956" rx="2.0" ry="1.2"/><ellipse cx="1626" cy="957" rx="2.6" ry="1.7"/><ellipse cx="1424" cy="957" rx="3.2" ry="2.0"/><ellipse cx="1616" cy="958" rx="1.7" ry="1.1"/><ellipse cx="1341" cy="959" rx="3.2" ry="2.0"/><ellipse cx="1565" cy="959" rx="2.5" ry="1.6"/><ellipse cx="1595" cy="960" rx="2.4" ry="1.5"/><ellipse cx="1528" cy="960" rx="2.4" ry="1.5"/><ellipse cx="1629" cy="961" rx="1.6" ry="1.0"/><ellipse cx="1632" cy="961" rx="1.7" ry="1.1"/><ellipse cx="1382" cy="962" rx="2.0" ry="1.3"/><ellipse cx="1351" cy="963" rx="2.9" ry="1.8"/><ellipse cx="1380" cy="965" rx="3.1" ry="1.9"/><ellipse cx="1709" cy="966" rx="2.5" ry="1.6"/><ellipse cx="1314" cy="967" rx="3.3" ry="2.1"/><ellipse cx="1716" cy="969" rx="2.5" ry="1.5"/><ellipse cx="1423" cy="970" rx="4.0" ry="2.5"/><ellipse cx="1336" cy="972" rx="3.2" ry="2.0"/><ellipse cx="1717" cy="973" rx="1.8" ry="1.2"/><ellipse cx="1397" cy="974" rx="1.9" ry="1.2"/><ellipse cx="1719" cy="976" rx="2.3" ry="1.4"/><ellipse cx="1414" cy="977" rx="2.2" ry="1.4"/><ellipse cx="1372" cy="978" rx="3.5" ry="2.2"/><ellipse cx="1352" cy="979" rx="2.6" ry="1.6"/><ellipse cx="1344" cy="981" rx="4.1" ry="2.6"/><ellipse cx="1429" cy="982" rx="4.0" ry="2.5"/><ellipse cx="1655" cy="983" rx="1.9" ry="1.2"/><ellipse cx="1660" cy="985" rx="1.8" ry="1.1"/><ellipse cx="1426" cy="987" rx="3.0" ry="1.9"/><ellipse cx="1366" cy="989" rx="2.9" ry="1.8"/><ellipse cx="1356" cy="990" rx="2.2" ry="1.4"/><ellipse cx="1659" cy="992" rx="2.0" ry="1.3"/><ellipse cx="1503" cy="993" rx="3.8" ry="2.4"/><ellipse cx="1663" cy="995" rx="1.9" ry="1.2"/><ellipse cx="1394" cy="995" rx="2.7" ry="1.7"/><ellipse cx="1503" cy="997" rx="2.0" ry="1.3"/><ellipse cx="1503" cy="998" rx="2.4" ry="1.5"/><ellipse cx="1731" cy="999" rx="2.7" ry="1.7"/><ellipse cx="1557" cy="1000" rx="3.1" ry="1.9"/><ellipse cx="1504" cy="1001" rx="3.7" ry="2.3"/><ellipse cx="1418" cy="1002" rx="3.8" ry="2.4"/><ellipse cx="1384" cy="1003" rx="3.9" ry="2.4"/><ellipse cx="1445" cy="1005" rx="3.7" ry="2.3"/><ellipse cx="1523" cy="1006" rx="3.8" ry="2.4"/><ellipse cx="1733" cy="1006" rx="2.0" ry="1.3"/><ellipse cx="1554" cy="1007" rx="3.2" ry="2.0"/><ellipse cx="1443" cy="1008" rx="1.9" ry="1.2"/><ellipse cx="1491" cy="1009" rx="3.5" ry="2.2"/><ellipse cx="1737" cy="1010" rx="2.6" ry="1.6"/><ellipse cx="1441" cy="1012" rx="1.9" ry="1.2"/><ellipse cx="1491" cy="1013" rx="1.9" ry="1.2"/><ellipse cx="1755" cy="1014" rx="1.9" ry="1.2"/><ellipse cx="1433" cy="1014" rx="2.6" ry="1.6"/><ellipse cx="1434" cy="1015" rx="4.1" ry="2.6"/><ellipse cx="1490" cy="1017" rx="3.6" ry="2.3"/><ellipse cx="1463" cy="1017" rx="3.7" ry="2.3"/><ellipse cx="1492" cy="1018" rx="2.8" ry="1.8"/><ellipse cx="1498" cy="1019" rx="3.5" ry="2.2"/><ellipse cx="1711" cy="1020" rx="1.8" ry="1.1"/><ellipse cx="1470" cy="1021" rx="3.1" ry="1.9"/><ellipse cx="1716" cy="1022" rx="2.5" ry="1.6"/><ellipse cx="1480" cy="1023" rx="4.1" ry="2.6"/><ellipse cx="1472" cy="1023" rx="4.1" ry="2.5"/><ellipse cx="1748" cy="1025" rx="2.3" ry="1.4"/><ellipse cx="1725" cy="1027" rx="2.5" ry="1.6"/><ellipse cx="1564" cy="1028" rx="3.6" ry="2.2"/><ellipse cx="1584" cy="1029" rx="2.4" ry="1.5"/><ellipse cx="1469" cy="1030" rx="3.4" ry="2.1"/><ellipse cx="1459" cy="1031" rx="2.7" ry="1.7"/><ellipse cx="1522" cy="1031" rx="2.4" ry="1.5"/><ellipse cx="1545" cy="1033" rx="2.2" ry="1.4"/><ellipse cx="1555" cy="1034" rx="2.7" ry="1.7"/><ellipse cx="1532" cy="1035" rx="1.8" ry="1.1"/><ellipse cx="1485" cy="1036" rx="2.5" ry="1.5"/><ellipse cx="1528" cy="1036" rx="3.3" ry="2.1"/><ellipse cx="1780" cy="1038" rx="2.0" ry="1.3"/><ellipse cx="1494" cy="1038" rx="2.7" ry="1.7"/><ellipse cx="1487" cy="1039" rx="2.3" ry="1.4"/><ellipse cx="1522" cy="1040" rx="3.6" ry="2.2"/><ellipse cx="1528" cy="1042" rx="1.8" ry="1.1"/><ellipse cx="1588" cy="1042" rx="2.5" ry="1.6"/><ellipse cx="1468" cy="1043" rx="2.0" ry="1.3"/><ellipse cx="1523" cy="1045" rx="3.5" ry="2.2"/><ellipse cx="1553" cy="1045" rx="2.1" ry="1.3"/><ellipse cx="1535" cy="1046" rx="3.5" ry="2.2"/><ellipse cx="1521" cy="1048" rx="2.5" ry="1.6"/><ellipse cx="1738" cy="1050" rx="2.4" ry="1.5"/><ellipse cx="1560" cy="1051" rx="4.0" ry="2.5"/><ellipse cx="1739" cy="1054" rx="2.6" ry="1.6"/><ellipse cx="1500" cy="1055" rx="3.2" ry="2.0"/><ellipse cx="1513" cy="1057" rx="2.8" ry="1.8"/><ellipse cx="1536" cy="1060" rx="2.9" ry="1.8"/><ellipse cx="1527" cy="1061" rx="2.3" ry="1.4"/><ellipse cx="1520" cy="1061" rx="2.9" ry="1.8"/><ellipse cx="1646" cy="1063" rx="1.4" ry="0.9"/><ellipse cx="1572" cy="1065" rx="3.2" ry="2.0"/><ellipse cx="1661" cy="1067" rx="1.8" ry="1.1"/><ellipse cx="1664" cy="1068" rx="2.1" ry="1.3"/><ellipse cx="1610" cy="1070" rx="2.4" ry="1.5"/><ellipse cx="1610" cy="1073" rx="2.4" ry="1.5"/><ellipse cx="1545" cy="1075" rx="1.9" ry="1.2"/><ellipse cx="1548" cy="1076" rx="2.7" ry="1.7"/><ellipse cx="1626" cy="1078" rx="4.1" ry="2.5"/><ellipse cx="1563" cy="1080" rx="2.5" ry="1.6"/><ellipse cx="1612" cy="1082" rx="2.7" ry="1.7"/><ellipse cx="1608" cy="1085" rx="3.7" ry="2.3"/><ellipse cx="1677" cy="1086" rx="2.2" ry="1.4"/><ellipse cx="1703" cy="1088" rx="2.3" ry="1.5"/><ellipse cx="1705" cy="1089" rx="1.7" ry="1.1"/><ellipse cx="1712" cy="1090" rx="2.0" ry="1.2"/><ellipse cx="1610" cy="1092" rx="2.2" ry="1.4"/><ellipse cx="1630" cy="1093" rx="2.1" ry="1.3"/><ellipse cx="1592" cy="1096" rx="2.7" ry="1.7"/><ellipse cx="1611" cy="1100" rx="2.0" ry="1.3"/><ellipse cx="1623" cy="1106" rx="3.0" ry="1.9"/></g><use href="#cr" fill="#1a1a1a" opacity="0.7" transform="translate(1,1.6)"/><use href="#cr" fill="url(#cg)"/><g stroke-linecap="round"><path d="M1188,247 L1280,265" stroke="#eaeaea" stroke-width="3.5"/><path d="M1213,236 L1283,253" stroke="#e6e6e6" stroke-width="3"/><path d="M1098,254 L1174,299" stroke="#e0e0e0" stroke-width="2.5"/></g></svg><div class="dock" style="left:36px;top:1254px;width:2461px;height:19px"></div><div class="t" style="left:40.5px;top:1258px;font-size:12px;color:#000;transform:scaleX(0.97);">Console</div><div class="a" style="left:44px;top:1284px;width:2444px;height:97px;background:#fff;border:1px solid #8c8c8c"></div><div class="a" style="left:45px;top:1285px;width:2425px;height:17px;background:#f5f5f5"></div><div class="a" style="left:45px;top:1320px;width:2425px;height:17px;background:#f5f5f5"></div><div class="t" style="left:49px;top:1287px;font-size:12px;color:#000;transform:scaleX(0.99);">[17:44:39] [BIN] Output file version: 4.1 (automatically deduced from selected entities)</div><div class="t" style="left:49px;top:1304px;font-size:12px;color:#000;transform:scaleX(0.946);">[17:45:08] [I/O] File 'D:/IGN Lidar/Herminis test CC/LHD_FXX_0642_6237_PTS_C_LAMB93_IGN69.copc.bin' saved successfully</div><div class="t" style="left:49px;top:1321px;font-size:12px;color:#000;transform:scaleX(0.97);">[17:45:08] This file can be loaded by CloudCompare version 2.6.2 (09/01/2015) and later</div><div class="t" style="left:49px;top:1338px;font-size:12px;color:#821c1c;transform:scaleX(0.941);">[17:49:49] Entity 'LHD_FXX_0642_6237_PTS_C_LAMB93_IGN69.copc.laz.clean' normals have been automatically disabled</div><div class="a" style="left:45px;top:1362px;width:2425px;height:17px;background:#f0f0f0"></div><div class="a" style="left:63px;top:1363px;width:2249px;height:15px;background:#cdcdcd"></div><div class="a" style="left:2470px;top:1285px;width:17px;height:95px;background:#f0f0f0"></div><div class="a" style="left:2471px;top:1327px;width:15px;height:18px;background:#cdcdcd"></div><svg class="ic" style="left:2px;top:3px" width="16" height="15" viewBox="0 0 16 15"><path d="M7.5 2.5 A5 5 0 1 0 7.5 12.5" fill="none" stroke="#1d5f86" stroke-width="1.8"/><path d="M12.5 3.5 A4.5 4.5 0 1 0 12.5 11.5" fill="none" stroke="#1d5f86" stroke-width="1.8"/><path d="M9.5 4 A3.5 3.5 0 1 0 9.5 11" fill="none" stroke="#6aa8cc" stroke-width="0.9"/></svg><svg class="ic" style="left:1px;top:25px" width="16" height="15" viewBox="0 0 16 15"><path d="M7.5 2.5 A5 5 0 1 0 7.5 12.5" fill="none" stroke="#1d5f86" stroke-width="1.8"/><path d="M12.5 3.5 A4.5 4.5 0 1 0 12.5 11.5" fill="none" stroke="#1d5f86" stroke-width="1.8"/><path d="M9.5 4 A3.5 3.5 0 1 0 9.5 11" fill="none" stroke="#6aa8cc" stroke-width="0.9"/></svg><svg class="ic" style="left:2436px;top:4px" width="14" height="14" viewBox="0 0 14 14"><path d="M2 6.5 H12" stroke="#111" stroke-width="1"/></svg><svg class="ic" style="left:2482px;top:3px" width="16" height="16" viewBox="0 0 16 16"><path d="M3.5 5.5 H10.5 V12.5 H3.5 Z" fill="none" stroke="#111" stroke-width="1"/><path d="M5.5 5.5 V3.5 H12.5 V10.5 H10.5" fill="none" stroke="#111" stroke-width="1"/></svg><svg class="ic" style="left:2528px;top:3px" width="16" height="16" viewBox="0 0 16 16"><path d="M1 1 L14 14 M14 1 L1 14" stroke="#111" stroke-width="1.1"/></svg><div class="a" style="left:2506px;top:25px;width:16px;height:17px;border:1px solid #dcdcdc;background:#fff"></div><div class="a" style="left:2524px;top:25px;width:16px;height:17px;border:1px solid #dcdcdc;background:#fff"></div><div class="a" style="left:2542px;top:25px;width:16px;height:17px;border:1px solid #dcdcdc;background:#fff"></div><svg class="ic" style="left:2506px;top:25px" width="16" height="17" viewBox="0 0 16 17"><path d="M5 11.5 H11" stroke="#444" stroke-width="1.6"/></svg><svg class="ic" style="left:2524px;top:25px" width="16" height="17" viewBox="0 0 16 17"><path d="M4.5 7.5 H10.5 V12.5 H4.5 Z M6.5 7.5 V4.5 H12.5 V10 H10.5" fill="none" stroke="#444" stroke-width="1.3"/></svg><svg class="ic" style="left:2542px;top:25px" width="16" height="17" viewBox="0 0 16 17"><path d="M4.5 5 L11.5 12 M11.5 5 L4.5 12" stroke="#444" stroke-width="1.8"/></svg><div class="a" style="left:1756px;top:-3px;width:50px;height:13px;background:#b6ee3c;border:1.5px solid #222;border-radius:0 0 3px 3px"></div><svg class="ic" style="left:1397px;top:3px" width="16" height="22" viewBox="0 0 16 22"><path d="M1.5 1.5 V17 L5 13.5 L8 20 L10.5 19 L7.5 12.5 H12.5 Z" fill="#fff" stroke="#000" stroke-width="1.1" stroke-linejoin="round"/></svg><svg class="ic" style="left:291px;top:81px" width="14" height="14" viewBox="0 0 14 14"><path d="M3.5 6.5 H8.5 V11.5 H3.5 Z M5.5 6.5 V3.5 H10.5 V8.5 H8.5" fill="none" stroke="#222" stroke-width="1.3"/></svg><svg class="ic" style="left:291px;top:671px" width="14" height="14" viewBox="0 0 14 14"><path d="M3.5 6.5 H8.5 V11.5 H3.5 Z M5.5 6.5 V3.5 H10.5 V8.5 H8.5" fill="none" stroke="#222" stroke-width="1.3"/></svg><svg class="ic" style="left:2457px;top:1257px" width="14" height="14" viewBox="0 0 14 14"><path d="M3.5 6.5 H8.5 V11.5 H3.5 Z M5.5 6.5 V3.5 H10.5 V8.5 H8.5" fill="none" stroke="#222" stroke-width="1.3"/></svg><svg class="ic" style="left:2478px;top:1257px" width="14" height="14" viewBox="0 0 14 14"><path d="M3 3 L10 10 M10 3 L3 10" stroke="#222" stroke-width="1.8"/></svg><svg class="ic" style="left:49px;top:116px" width="13" height="9" viewBox="0 0 13 9"><path d="M0.5 0.5 H12.5 L6.5 8.5 Z" fill="#5c4b4b"/></svg><svg class="ic" style="left:68px;top:114px" width="13" height="13" viewBox="0 0 13 13"><rect x="0.5" y="0.5" width="12" height="12" fill="#fff" stroke="#333" stroke-width="1"/><path d="M2.5 6.5 L5 9.5 L10.5 3" fill="none" stroke="#333" stroke-width="1.1"/></svg><svg class="ic" style="left:86px;top:114px" width="16" height="14" viewBox="0 0 16 14"><path d="M1 3 L6 2 L8 4 L14 4 L15 13 L2 13 Z" fill="#d9a520"/><path d="M1 6 L14 5 L15 13 L2 13 Z" fill="#f0c040"/></svg><div class="t" style="left:109px;top:114px;font-size:12px;color:#000;transform:scaleX(0.872);">LHD_FXX_0642_6237_PTS_C_LAM...</div><svg class="ic" style="left:71px;top:135px" width="9" height="12" viewBox="0 0 9 12"><path d="M0.5 0.5 L8.5 6 L0.5 11.5 Z" fill="#5c4b4b"/></svg><svg class="ic" style="left:88px;top:134px" width="13" height="13" viewBox="0 0 13 13"><rect x="0.5" y="0.5" width="12" height="12" fill="#fff" stroke="#333" stroke-width="1"/></svg><svg class="ic" style="left:107px;top:134px" width="16" height="13" viewBox="0 0 16 13"><ellipse cx="8" cy="6.5" rx="7.5" ry="5.5" fill="#d8d8d8" stroke="#777" stroke-width="1"/><path d="M3 6 C4 3 9 2 12 4" stroke="#fff" stroke-width="1.5" fill="none"/></svg><div class="t" style="left:129px;top:134px;font-size:12px;color:#000;transform:scaleX(0.855);">LHD_FXX_0642_6237_PTS_C_L...</div><svg class="ic" style="left:69px;top:156px" width="13" height="9" viewBox="0 0 13 9"><path d="M0.5 0.5 H12.5 L6.5 8.5 Z" fill="#5c4b4b"/></svg><svg class="ic" style="left:88px;top:154px" width="13" height="13" viewBox="0 0 13 13"><rect x="0.5" y="0.5" width="12" height="12" fill="#fff" stroke="#333" stroke-width="1"/><path d="M2.5 6.5 L5 9.5 L10.5 3" fill="none" stroke="#333" stroke-width="1.1"/></svg><svg class="ic" style="left:107px;top:154px" width="16" height="13" viewBox="0 0 16 13"><ellipse cx="8" cy="6.5" rx="7.5" ry="5.5" fill="#d8d8d8" stroke="#777" stroke-width="1"/><path d="M3 6 C4 3 9 2 12 4" stroke="#fff" stroke-width="1.5" fill="none"/></svg><div class="t" style="left:129px;top:154px;font-size:12px;color:#000;transform:scaleX(0.855);">LHD_FXX_0642_6237_PTS_C_L...</div><svg class="ic" style="left:2440px;top:1170px" width="48" height="56" viewBox="0 0 48 56"><path d="M11 16 V37" stroke="#1aa8ff" stroke-width="2.4"/><path d="M11 37 L25 26" stroke="#20e020" stroke-width="2.4"/><path d="M11 38 L32 45" stroke="#e01818" stroke-width="2.4"/><text x="28" y="24" font-family="Liberation Sans" font-size="9" fill="#30e030">Y</text><text x="7" y="11" font-family="Liberation Sans" font-size="9" fill="#2a9ad0">Z</text><text x="35" y="50" font-family="Liberation Sans" font-size="9" fill="#d02020">X</text></svg><svg class="ic" style="left:50px;top:1364px" width="10" height="13" viewBox="0 0 10 13"><path d="M7 2 L3 6.5 L7 11" stroke="#555" stroke-width="1.6" fill="none"/></svg><svg class="ic" style="left:2455px;top:1364px" width="10" height="13" viewBox="0 0 10 13"><path d="M3 2 L7 6.5 L3 11" stroke="#555" stroke-width="1.6" fill="none"/></svg><svg class="ic" style="left:2472px;top:1289px" width="13" height="10" viewBox="0 0 13 10"><path d="M2 8 L6.5 4 L11 8" stroke="#555" stroke-width="1.6" fill="none"/></svg><svg class="ic" style="left:2472px;top:1348px" width="13" height="10" viewBox="0 0 13 10"><path d="M2 2 L6.5 6 L11 2" stroke="#555" stroke-width="1.6" fill="none"/></svg></body></html>
